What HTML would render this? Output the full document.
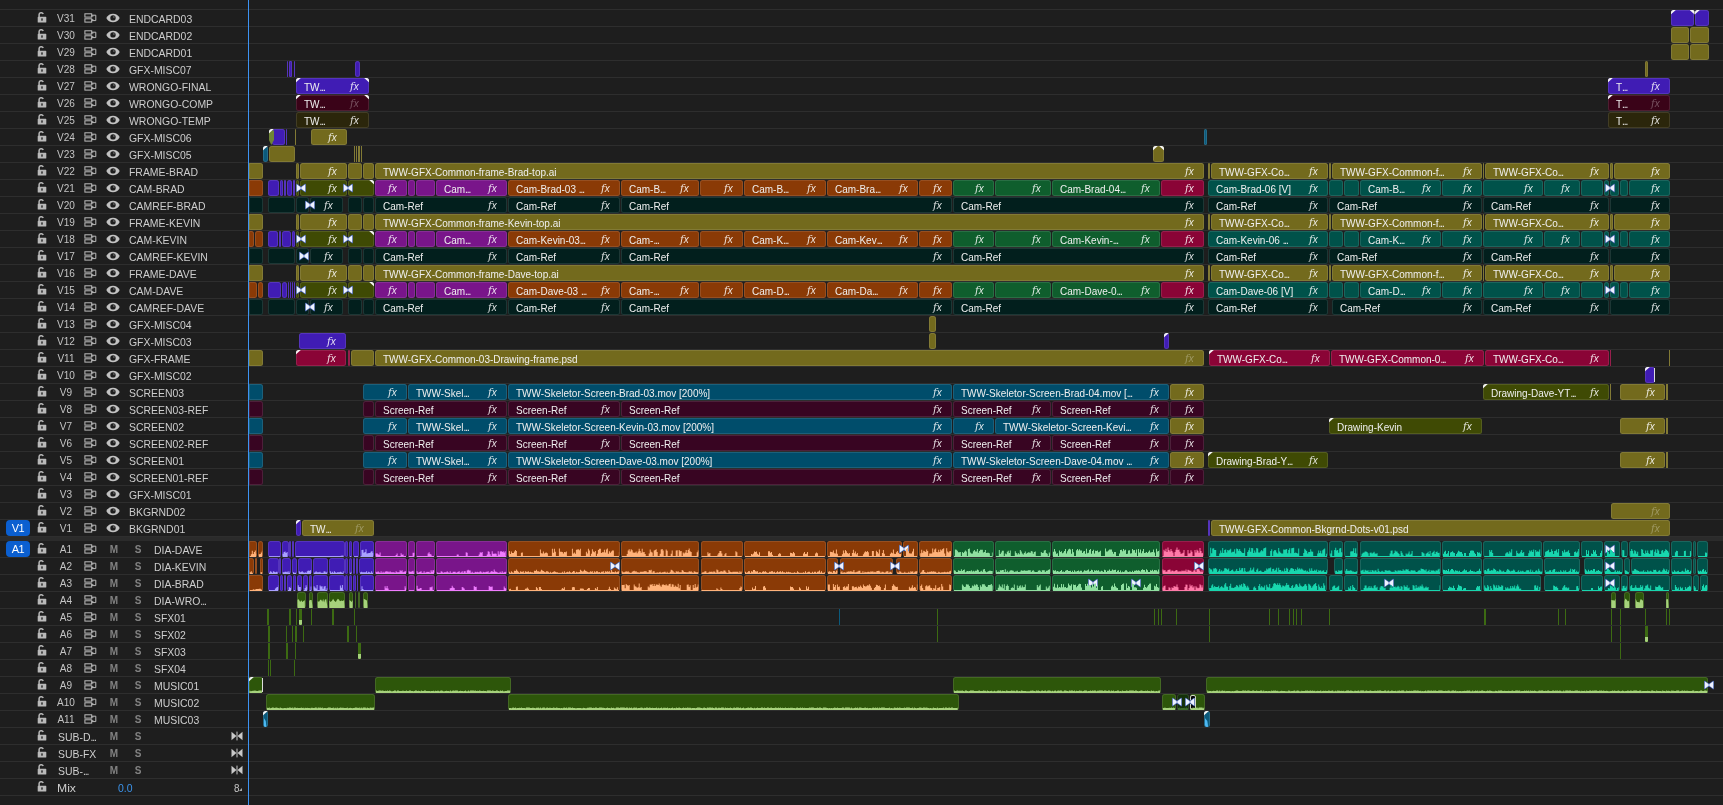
<!DOCTYPE html>
<html><head><meta charset="utf-8"><title>Timeline</title>
<style>
html,body{margin:0;padding:0;background:#1e1e1e;}
body{width:1723px;height:805px;position:relative;overflow:hidden;font-family:"Liberation Sans",sans-serif;font-size:11px;color:#c9c9c9;}
#w{position:absolute;left:0;top:0;width:1723px;height:805px;will-change:transform;overflow:hidden;}
.s{position:absolute;left:0;width:1723px;height:1px;background:#2e2e2e;}
.band{position:absolute;left:0;top:537px;width:1723px;height:4px;background:#2b2b2b;}
.ph{position:absolute;left:247.9px;top:0;width:1.4px;height:805px;background:#3d93f2;}
.c{position:absolute;height:16px;border-radius:2.5px;overflow:hidden;white-space:nowrap;box-sizing:border-box;box-shadow:inset 0 0 0 1px rgba(255,255,255,.11);}
.t{position:absolute;left:8.3px;top:0;line-height:19px;font-size:10.6px;color:#efefef;transform-origin:0 50%;transform:scaleX(.943);}
.fx{position:absolute;right:10.3px;top:0;line-height:16px;color:rgba(255,255,255,.86);}
.fx i{font-size:10.3px;font-style:italic;font-family:"DejaVu Serif",serif;}
.fx b{font-size:10px;font-style:italic;font-weight:normal;margin-left:-.2px;}
.fx.dim{opacity:.35;}
.t u{text-decoration:none;letter-spacing:-1.1px;}
.kl,.kr{position:absolute;width:5px;height:4.6px;background:#f4f4f4;}
.kl{clip-path:polygon(0 0,100% 0,0 100%);border-radius:2.5px 0 0 0;}
.kr{clip-path:polygon(0 0,100% 0,100% 100%);border-radius:0 2.5px 0 0;}
.tr{position:absolute;}
.l{position:absolute;height:16px;}
.wv{position:absolute;left:0;top:0;pointer-events:none;}
.ic{position:absolute;}
.lb{position:absolute;left:46px;width:40px;text-align:center;line-height:17px;font-size:10.6px;color:#c4c4c4;transform:scaleX(.95);}
.nm{position:absolute;line-height:19px;font-size:10.6px;white-space:nowrap;color:#cdcdcd;transform-origin:0 50%;transform:scaleX(.985);}
.nm u{text-decoration:none;letter-spacing:-1.1px;}
.ms{position:absolute;width:9px;text-align:center;line-height:18px;color:#828282;font-size:10px;font-weight:bold;}
.tg{position:absolute;left:6px;width:24px;height:16px;border-radius:4px;background:#0b5fd0;color:#fff;text-align:center;line-height:17px;font-size:11px;letter-spacing:-.4px;}
</style></head><body><div id="w">
<div class="s" style="top:9px"></div><div class="s" style="top:26px"></div><div class="s" style="top:43px"></div><div class="s" style="top:60px"></div><div class="s" style="top:77px"></div><div class="s" style="top:94px"></div><div class="s" style="top:111px"></div><div class="s" style="top:128px"></div><div class="s" style="top:145px"></div><div class="s" style="top:162px"></div><div class="s" style="top:179px"></div><div class="s" style="top:196px"></div><div class="s" style="top:213px"></div><div class="s" style="top:230px"></div><div class="s" style="top:247px"></div><div class="s" style="top:264px"></div><div class="s" style="top:281px"></div><div class="s" style="top:298px"></div><div class="s" style="top:315px"></div><div class="s" style="top:332px"></div><div class="s" style="top:349px"></div><div class="s" style="top:366px"></div><div class="s" style="top:383px"></div><div class="s" style="top:400px"></div><div class="s" style="top:417px"></div><div class="s" style="top:434px"></div><div class="s" style="top:451px"></div><div class="s" style="top:468px"></div><div class="s" style="top:485px"></div><div class="s" style="top:502px"></div><div class="s" style="top:519px"></div><div class="s" style="top:536px"></div><div class="s" style="top:557px"></div><div class="s" style="top:574px"></div><div class="s" style="top:591px"></div><div class="s" style="top:608px"></div><div class="s" style="top:625px"></div><div class="s" style="top:642px"></div><div class="s" style="top:659px"></div><div class="s" style="top:676px"></div><div class="s" style="top:693px"></div><div class="s" style="top:710px"></div><div class="s" style="top:727px"></div><div class="s" style="top:744px"></div><div class="s" style="top:761px"></div><div class="s" style="top:778px"></div><div class="s" style="top:795px"></div>
<div class="band"></div>
<div class="c" style="left:1671.0px;top:10px;width:23.0px;background:#401cb4"></div>
<div class="kl" style="left:1670.8px;top:10px"></div>
<div class="c" style="left:1695.0px;top:10px;width:14.0px;background:#401cb4"></div>
<div class="kl" style="left:1694.8px;top:10px"></div>
<div class="kr" style="left:1689.6px;top:10px"></div>
<div class="c" style="left:1671.0px;top:27px;width:18.0px;background:#736a1d"></div>
<div class="c" style="left:1690.0px;top:27px;width:19.0px;background:#736a1d"></div>
<div class="c" style="left:1671.0px;top:44px;width:18.0px;background:#736a1d"></div>
<div class="c" style="left:1690.0px;top:44px;width:19.0px;background:#736a1d"></div>
<div class="c" style="left:287.0px;top:61px;width:0.8px;background:#401cb4;border-radius:1px"></div>
<div class="c" style="left:289.3px;top:61px;width:3.2px;background:#401cb4;border-radius:1px"></div>
<div class="c" style="left:294.1px;top:61px;width:0.8px;background:#401cb4;border-radius:1px"></div>
<div class="c" style="left:355.0px;top:61px;width:5.0px;background:#401cb4"></div>
<div class="c" style="left:1645.1px;top:61px;width:2.8px;background:#736a1d"></div>
<div class="c" style="left:296.0px;top:78px;width:73.0px;background:#401cb4"><span class="t">TW<u>...</u></span><span class="fx"><i>f</i><b>x</b></span></div>
<div class="kl" style="left:295.8px;top:78px"></div>
<div class="kr" style="left:364.2px;top:78px"></div>
<div class="c" style="left:1608.0px;top:78px;width:62.0px;background:#401cb4"><span class="t">T<u>...</u></span><span class="fx"><i>f</i><b>x</b></span></div>
<div class="kl" style="left:1607.8px;top:78px"></div>
<div class="c" style="left:296.0px;top:95px;width:73.0px;background:#3a0318"><span class="t">TW<u>...</u></span><span class="fx dim"><i>f</i><b>x</b></span></div>
<div class="kl" style="left:295.8px;top:95px"></div>
<div class="kr" style="left:364.2px;top:95px"></div>
<div class="c" style="left:1608.0px;top:95px;width:62.0px;background:#3a0318"><span class="t">T<u>...</u></span><span class="fx dim"><i>f</i><b>x</b></span></div>
<div class="kl" style="left:1607.8px;top:95px"></div>
<div class="c" style="left:296.0px;top:112px;width:73.0px;background:#2b260b"><span class="t">TW<u>...</u></span><span class="fx"><i>f</i><b>x</b></span></div>
<div class="c" style="left:1608.0px;top:112px;width:62.0px;background:#2b260b"><span class="t">T<u>...</u></span><span class="fx"><i>f</i><b>x</b></span></div>
<div class="c" style="left:272.0px;top:129px;width:13.0px;background:#401cb4"></div>
<div class="c" style="left:269.0px;top:129px;width:5.0px;background:#6f8535;border-radius:0;box-shadow:none;clip-path:polygon(0 10%,100% 10%,100% 68%,45% 100%,0 68%)"></div>
<div class="kl" style="left:268.8px;top:129px"></div>
<div class="c" style="left:285.7px;top:129px;width:1.3px;background:#401cb4"></div>
<div class="c" style="left:295.0px;top:129px;width:1.0px;background:#736a1d"></div>
<div class="c" style="left:311.0px;top:129px;width:36.0px;background:#736a1d"><span class="fx"><i>f</i><b>x</b></span></div>
<div class="c" style="left:1204.1px;top:129px;width:2.8px;background:#0b5a7c"></div>
<div class="c" style="left:263.0px;top:146px;width:5.0px;background:#0b5a7c"></div>
<div class="kl" style="left:262.8px;top:146px"></div>
<div class="c" style="left:269.0px;top:146px;width:26.0px;background:#736a1d"></div>
<div class="c" style="left:354.1px;top:146px;width:0.8px;background:#736a1d;border-radius:0"></div>
<div class="c" style="left:355.8px;top:146px;width:0.9px;background:#736a1d;border-radius:0"></div>
<div class="c" style="left:358.0px;top:146px;width:1.7px;background:#736a1d;border-radius:0"></div>
<div class="c" style="left:360.8px;top:146px;width:1.2px;background:#736a1d;border-radius:0"></div>
<div class="c" style="left:1153.0px;top:146px;width:11.0px;background:#736a1d"></div>
<div class="kl" style="left:1152.8px;top:146px"></div>
<div class="kr" style="left:1159.2px;top:146px"></div>
<div class="c" style="left:249.0px;top:163px;width:14.0px;background:#736a1d;border-radius:0 2.5px 2.5px 0"></div>
<div class="c" style="left:296.2px;top:163px;width:2.7px;background:#736a1d"></div>
<div class="c" style="left:300.0px;top:163px;width:47.0px;background:#736a1d"><span class="fx"><i>f</i><b>x</b></span></div>
<div class="c" style="left:348.0px;top:163px;width:14.0px;background:#736a1d"></div>
<div class="c" style="left:363.0px;top:163px;width:11.0px;background:#736a1d"></div>
<div class="c" style="left:375.0px;top:163px;width:829.0px;background:#736a1d"><span class="t">TWW-GFX-Common-frame-Brad-top.ai</span><span class="fx"><i>f</i><b>x</b></span></div>
<div class="c" style="left:1207.9px;top:163px;width:1.7px;background:#736a1d"></div>
<div class="c" style="left:1211.0px;top:163px;width:117.0px;background:#736a1d"><span class="t">TWW-GFX-Co<u>...</u></span><span class="fx"><i>f</i><b>x</b></span></div>
<div class="c" style="left:1329.0px;top:163px;width:1.9px;background:#736a1d;border-radius:1px"></div>
<div class="c" style="left:1332.0px;top:163px;width:150.0px;background:#736a1d"><span class="t">TWW-GFX-Common-f<u>...</u></span><span class="fx"><i>f</i><b>x</b></span></div>
<div class="c" style="left:1482.9px;top:163px;width:1.3px;background:#736a1d"></div>
<div class="c" style="left:1485.0px;top:163px;width:124.0px;background:#736a1d"><span class="t">TWW-GFX-Co<u>...</u></span><span class="fx"><i>f</i><b>x</b></span></div>
<div class="c" style="left:1610.2px;top:163px;width:2.5px;background:#736a1d;border-radius:1.2px"></div>
<div class="c" style="left:1614.0px;top:163px;width:56.0px;background:#736a1d"><span class="fx"><i>f</i><b>x</b></span></div>
<div class="c" style="left:249.0px;top:180px;width:14.0px;background:#8a3a06;border-radius:0 2.5px 2.5px 0"></div>
<div class="c" style="left:268.0px;top:180px;width:11.0px;background:#401cb4"></div>
<div class="c" style="left:280.1px;top:180px;width:2.7px;background:#401cb4"></div>
<div class="c" style="left:284.0px;top:180px;width:1.6px;background:#401cb4"></div>
<div class="c" style="left:287.0px;top:180px;width:5.0px;background:#401cb4"></div>
<div class="c" style="left:293.2px;top:180px;width:2.0px;background:#401cb4"></div>
<div class="c" style="left:296.0px;top:180px;width:2.8px;background:#3f4a04"></div>
<div class="c" style="left:300.0px;top:180px;width:47.0px;background:#3f4a04"><span class="fx"><i>f</i><b>x</b></span></div>
<div class="c" style="left:348.0px;top:180px;width:26.0px;background:#3f4a04"></div>
<div class="kr" style="left:369.2px;top:180px"></div>
<svg class="tr" style="left:295.6px;top:183px" width="10" height="10" viewBox="0 0 10 10"><path d="M0.7 1.3 L5.8 5 L0.7 8.7 Z M9.3 1.3 L4.2 5 L9.3 8.7 Z" fill="#eef2ff" stroke="#3a58a4" stroke-width="1.3" stroke-linejoin="round" paint-order="stroke fill" style="paint-order:stroke fill"/></svg>
<svg class="tr" style="left:343.0px;top:183px" width="10" height="10" viewBox="0 0 10 10"><path d="M0.7 1.3 L5.8 5 L0.7 8.7 Z M9.3 1.3 L4.2 5 L9.3 8.7 Z" fill="#eef2ff" stroke="#3a58a4" stroke-width="1.3" stroke-linejoin="round" paint-order="stroke fill" style="paint-order:stroke fill"/></svg>
<div class="c" style="left:375.0px;top:180px;width:32.0px;background:#79158a"><span class="fx"><i>f</i><b>x</b></span></div>
<div class="c" style="left:408.0px;top:180px;width:7.0px;background:#79158a"></div>
<div class="c" style="left:416.0px;top:180px;width:19.0px;background:#79158a"></div>
<div class="c" style="left:436.0px;top:180px;width:71.0px;background:#79158a"><span class="t">Cam<u>...</u></span><span class="fx"><i>f</i><b>x</b></span></div>
<div class="c" style="left:508.0px;top:180px;width:112.0px;background:#8a3a06"><span class="t">Cam-Brad-03 <u>...</u></span><span class="fx"><i>f</i><b>x</b></span></div>
<div class="c" style="left:621.0px;top:180px;width:78.0px;background:#8a3a06"><span class="t">Cam-B<u>...</u></span><span class="fx"><i>f</i><b>x</b></span></div>
<div class="c" style="left:700.0px;top:180px;width:43.0px;background:#8a3a06"><span class="fx"><i>f</i><b>x</b></span></div>
<div class="c" style="left:744.0px;top:180px;width:82.0px;background:#8a3a06"><span class="t">Cam-B<u>...</u></span><span class="fx"><i>f</i><b>x</b></span></div>
<div class="c" style="left:827.0px;top:180px;width:91.0px;background:#8a3a06"><span class="t">Cam-Bra<u>...</u></span><span class="fx"><i>f</i><b>x</b></span></div>
<div class="c" style="left:919.0px;top:180px;width:33.0px;background:#8a3a06"><span class="fx"><i>f</i><b>x</b></span></div>
<div class="c" style="left:953.0px;top:180px;width:41.0px;background:#0f5e2d"><span class="fx"><i>f</i><b>x</b></span></div>
<div class="c" style="left:995.0px;top:180px;width:56.0px;background:#0f5e2d"><span class="fx"><i>f</i><b>x</b></span></div>
<div class="c" style="left:1052.0px;top:180px;width:108.0px;background:#0f5e2d"><span class="t">Cam-Brad-04<u>...</u></span><span class="fx"><i>f</i><b>x</b></span></div>
<div class="c" style="left:1161.0px;top:180px;width:43.0px;background:#8a0436"><span class="fx"><i>f</i><b>x</b></span></div>
<div class="c" style="left:1208.0px;top:180px;width:120.0px;background:#00524a"><span class="t">Cam-Brad-06 [V]</span><span class="fx"><i>f</i><b>x</b></span></div>
<div class="c" style="left:1329.0px;top:180px;width:14.0px;background:#00524a"></div>
<div class="c" style="left:1344.0px;top:180px;width:15.0px;background:#00524a"></div>
<div class="c" style="left:1360.0px;top:180px;width:81.0px;background:#00524a"><span class="t">Cam-B<u>...</u></span><span class="fx"><i>f</i><b>x</b></span></div>
<div class="c" style="left:1442.0px;top:180px;width:40.0px;background:#00524a"><span class="fx"><i>f</i><b>x</b></span></div>
<div class="c" style="left:1483.0px;top:180px;width:60.0px;background:#00524a"><span class="fx"><i>f</i><b>x</b></span></div>
<div class="c" style="left:1544.0px;top:180px;width:36.0px;background:#00524a"><span class="fx"><i>f</i><b>x</b></span></div>
<div class="c" style="left:1581.0px;top:180px;width:22.0px;background:#00524a"></div>
<div class="c" style="left:1604.0px;top:180px;width:5.0px;background:#00524a"></div>
<div class="c" style="left:1610.0px;top:180px;width:9.0px;background:#00524a"></div>
<div class="c" style="left:1620.0px;top:180px;width:8.0px;background:#00524a"></div>
<div class="c" style="left:1629.0px;top:180px;width:41.0px;background:#00524a"><span class="fx"><i>f</i><b>x</b></span></div>
<svg class="tr" style="left:1605.0px;top:183px" width="10" height="10" viewBox="0 0 10 10"><path d="M0.7 1.3 L5.8 5 L0.7 8.7 Z M9.3 1.3 L4.2 5 L9.3 8.7 Z" fill="#eef2ff" stroke="#3a58a4" stroke-width="1.3" stroke-linejoin="round" paint-order="stroke fill" style="paint-order:stroke fill"/></svg>
<div class="c" style="left:249.0px;top:197px;width:14.0px;background:#021f1d;border-radius:0 2.5px 2.5px 0"></div>
<div class="c" style="left:268.0px;top:197px;width:27.0px;background:#021f1d"></div>
<div class="c" style="left:296.0px;top:197px;width:13.0px;background:#021f1d"></div>
<div class="c" style="left:310.0px;top:197px;width:33.0px;background:#021f1d"><span class="fx"><i>f</i><b>x</b></span></div>
<svg class="tr" style="left:305.0px;top:200px" width="10" height="10" viewBox="0 0 10 10"><path d="M0.7 1.3 L5.8 5 L0.7 8.7 Z M9.3 1.3 L4.2 5 L9.3 8.7 Z" fill="#eef2ff" stroke="#3a58a4" stroke-width="1.3" stroke-linejoin="round" paint-order="stroke fill" style="paint-order:stroke fill"/></svg>
<div class="c" style="left:348.0px;top:197px;width:14.0px;background:#021f1d"></div>
<div class="c" style="left:363.0px;top:197px;width:11.0px;background:#021f1d"></div>
<div class="c" style="left:375.0px;top:197px;width:132.0px;background:#021f1d"><span class="t">Cam-Ref</span><span class="fx"><i>f</i><b>x</b></span></div>
<div class="c" style="left:508.0px;top:197px;width:112.0px;background:#021f1d"><span class="t">Cam-Ref</span><span class="fx"><i>f</i><b>x</b></span></div>
<div class="c" style="left:621.0px;top:197px;width:331.0px;background:#021f1d"><span class="t">Cam-Ref</span><span class="fx"><i>f</i><b>x</b></span></div>
<div class="c" style="left:953.0px;top:197px;width:251.0px;background:#021f1d"><span class="t">Cam-Ref</span><span class="fx"><i>f</i><b>x</b></span></div>
<div class="c" style="left:1208.0px;top:197px;width:120.0px;background:#021f1d"><span class="t">Cam-Ref</span><span class="fx"><i>f</i><b>x</b></span></div>
<div class="c" style="left:1329.0px;top:197px;width:153.0px;background:#021f1d"><span class="t">Cam-Ref</span><span class="fx"><i>f</i><b>x</b></span></div>
<div class="c" style="left:1483.0px;top:197px;width:126.0px;background:#021f1d"><span class="t">Cam-Ref</span><span class="fx"><i>f</i><b>x</b></span></div>
<div class="c" style="left:1610.0px;top:197px;width:60.0px;background:#021f1d"><span class="fx"><i>f</i><b>x</b></span></div>
<div class="c" style="left:249.0px;top:214px;width:14.0px;background:#736a1d;border-radius:0 2.5px 2.5px 0"></div>
<div class="c" style="left:296.2px;top:214px;width:2.7px;background:#736a1d"></div>
<div class="c" style="left:300.0px;top:214px;width:47.0px;background:#736a1d"><span class="fx"><i>f</i><b>x</b></span></div>
<div class="c" style="left:348.0px;top:214px;width:14.0px;background:#736a1d"></div>
<div class="c" style="left:363.0px;top:214px;width:11.0px;background:#736a1d"></div>
<div class="c" style="left:375.0px;top:214px;width:829.0px;background:#736a1d"><span class="t">TWW-GFX-Common-frame-Kevin-top.ai</span><span class="fx"><i>f</i><b>x</b></span></div>
<div class="c" style="left:1207.9px;top:214px;width:1.7px;background:#736a1d"></div>
<div class="c" style="left:1211.0px;top:214px;width:117.0px;background:#736a1d"><span class="t">TWW-GFX-Co<u>...</u></span><span class="fx"><i>f</i><b>x</b></span></div>
<div class="c" style="left:1329.0px;top:214px;width:1.9px;background:#736a1d;border-radius:1px"></div>
<div class="c" style="left:1332.0px;top:214px;width:150.0px;background:#736a1d"><span class="t">TWW-GFX-Common-f<u>...</u></span><span class="fx"><i>f</i><b>x</b></span></div>
<div class="c" style="left:1482.9px;top:214px;width:1.3px;background:#736a1d"></div>
<div class="c" style="left:1485.0px;top:214px;width:124.0px;background:#736a1d"><span class="t">TWW-GFX-Co<u>...</u></span><span class="fx"><i>f</i><b>x</b></span></div>
<div class="c" style="left:1610.2px;top:214px;width:2.5px;background:#736a1d;border-radius:1.2px"></div>
<div class="c" style="left:1614.0px;top:214px;width:56.0px;background:#736a1d"><span class="fx"><i>f</i><b>x</b></span></div>
<div class="c" style="left:249.0px;top:231px;width:5.0px;background:#8a3a06;border-radius:0 2.5px 2.5px 0"></div>
<div class="c" style="left:255.0px;top:231px;width:8.0px;background:#8a3a06"></div>
<div class="c" style="left:268.0px;top:231px;width:10.0px;background:#401cb4"></div>
<div class="c" style="left:279.1px;top:231px;width:1.6px;background:#401cb4"></div>
<div class="c" style="left:282.0px;top:231px;width:9.0px;background:#401cb4"></div>
<div class="c" style="left:292.3px;top:231px;width:2.7px;background:#401cb4"></div>
<div class="c" style="left:296.0px;top:231px;width:2.8px;background:#3f4a04"></div>
<div class="c" style="left:300.0px;top:231px;width:47.0px;background:#3f4a04"><span class="fx"><i>f</i><b>x</b></span></div>
<div class="c" style="left:348.0px;top:231px;width:26.0px;background:#3f4a04"></div>
<div class="kr" style="left:369.2px;top:231px"></div>
<svg class="tr" style="left:295.6px;top:234px" width="10" height="10" viewBox="0 0 10 10"><path d="M0.7 1.3 L5.8 5 L0.7 8.7 Z M9.3 1.3 L4.2 5 L9.3 8.7 Z" fill="#eef2ff" stroke="#3a58a4" stroke-width="1.3" stroke-linejoin="round" paint-order="stroke fill" style="paint-order:stroke fill"/></svg>
<svg class="tr" style="left:343.0px;top:234px" width="10" height="10" viewBox="0 0 10 10"><path d="M0.7 1.3 L5.8 5 L0.7 8.7 Z M9.3 1.3 L4.2 5 L9.3 8.7 Z" fill="#eef2ff" stroke="#3a58a4" stroke-width="1.3" stroke-linejoin="round" paint-order="stroke fill" style="paint-order:stroke fill"/></svg>
<div class="c" style="left:375.0px;top:231px;width:32.0px;background:#79158a"><span class="fx"><i>f</i><b>x</b></span></div>
<div class="c" style="left:408.0px;top:231px;width:7.0px;background:#79158a"></div>
<div class="c" style="left:416.0px;top:231px;width:19.0px;background:#79158a"></div>
<div class="c" style="left:436.0px;top:231px;width:71.0px;background:#79158a"><span class="t">Cam<u>...</u></span><span class="fx"><i>f</i><b>x</b></span></div>
<div class="c" style="left:508.0px;top:231px;width:112.0px;background:#8a3a06"><span class="t">Cam-Kevin-03<u>...</u></span><span class="fx"><i>f</i><b>x</b></span></div>
<div class="c" style="left:621.0px;top:231px;width:78.0px;background:#8a3a06"><span class="t">Cam-<u>...</u></span><span class="fx"><i>f</i><b>x</b></span></div>
<div class="c" style="left:700.0px;top:231px;width:43.0px;background:#8a3a06"><span class="fx"><i>f</i><b>x</b></span></div>
<div class="c" style="left:744.0px;top:231px;width:82.0px;background:#8a3a06"><span class="t">Cam-K<u>...</u></span><span class="fx"><i>f</i><b>x</b></span></div>
<div class="c" style="left:827.0px;top:231px;width:91.0px;background:#8a3a06"><span class="t">Cam-Kev<u>...</u></span><span class="fx"><i>f</i><b>x</b></span></div>
<div class="c" style="left:919.0px;top:231px;width:33.0px;background:#8a3a06"><span class="fx"><i>f</i><b>x</b></span></div>
<div class="c" style="left:953.0px;top:231px;width:41.0px;background:#0f5e2d"><span class="fx"><i>f</i><b>x</b></span></div>
<div class="c" style="left:995.0px;top:231px;width:56.0px;background:#0f5e2d"><span class="fx"><i>f</i><b>x</b></span></div>
<div class="c" style="left:1052.0px;top:231px;width:108.0px;background:#0f5e2d"><span class="t">Cam-Kevin-<u>...</u></span><span class="fx"><i>f</i><b>x</b></span></div>
<div class="c" style="left:1161.0px;top:231px;width:43.0px;background:#8a0436"><span class="fx"><i>f</i><b>x</b></span></div>
<div class="c" style="left:1208.0px;top:231px;width:120.0px;background:#00524a"><span class="t">Cam-Kevin-06 <u>...</u></span><span class="fx"><i>f</i><b>x</b></span></div>
<div class="c" style="left:1329.0px;top:231px;width:14.0px;background:#00524a"></div>
<div class="c" style="left:1344.0px;top:231px;width:15.0px;background:#00524a"></div>
<div class="c" style="left:1360.0px;top:231px;width:81.0px;background:#00524a"><span class="t">Cam-K<u>...</u></span><span class="fx"><i>f</i><b>x</b></span></div>
<div class="c" style="left:1442.0px;top:231px;width:40.0px;background:#00524a"><span class="fx"><i>f</i><b>x</b></span></div>
<div class="c" style="left:1483.0px;top:231px;width:60.0px;background:#00524a"><span class="fx"><i>f</i><b>x</b></span></div>
<div class="c" style="left:1544.0px;top:231px;width:36.0px;background:#00524a"><span class="fx"><i>f</i><b>x</b></span></div>
<div class="c" style="left:1581.0px;top:231px;width:22.0px;background:#00524a"></div>
<div class="c" style="left:1604.0px;top:231px;width:5.0px;background:#00524a"></div>
<div class="c" style="left:1610.0px;top:231px;width:9.0px;background:#00524a"></div>
<div class="c" style="left:1620.0px;top:231px;width:8.0px;background:#00524a"></div>
<div class="c" style="left:1629.0px;top:231px;width:41.0px;background:#00524a"><span class="fx"><i>f</i><b>x</b></span></div>
<svg class="tr" style="left:1605.0px;top:234px" width="10" height="10" viewBox="0 0 10 10"><path d="M0.7 1.3 L5.8 5 L0.7 8.7 Z M9.3 1.3 L4.2 5 L9.3 8.7 Z" fill="#eef2ff" stroke="#3a58a4" stroke-width="1.3" stroke-linejoin="round" paint-order="stroke fill" style="paint-order:stroke fill"/></svg>
<div class="c" style="left:249.0px;top:248px;width:14.0px;background:#021f1d;border-radius:0 2.5px 2.5px 0"></div>
<div class="c" style="left:268.0px;top:248px;width:27.0px;background:#021f1d"></div>
<div class="c" style="left:296.0px;top:248px;width:13.0px;background:#021f1d"></div>
<div class="c" style="left:310.0px;top:248px;width:33.0px;background:#021f1d"><span class="fx"><i>f</i><b>x</b></span></div>
<svg class="tr" style="left:299.0px;top:251px" width="10" height="10" viewBox="0 0 10 10"><path d="M0.7 1.3 L5.8 5 L0.7 8.7 Z M9.3 1.3 L4.2 5 L9.3 8.7 Z" fill="#eef2ff" stroke="#3a58a4" stroke-width="1.3" stroke-linejoin="round" paint-order="stroke fill" style="paint-order:stroke fill"/></svg>
<div class="c" style="left:348.0px;top:248px;width:14.0px;background:#021f1d"></div>
<div class="c" style="left:363.0px;top:248px;width:11.0px;background:#021f1d"></div>
<div class="c" style="left:375.0px;top:248px;width:132.0px;background:#021f1d"><span class="t">Cam-Ref</span><span class="fx"><i>f</i><b>x</b></span></div>
<div class="c" style="left:508.0px;top:248px;width:112.0px;background:#021f1d"><span class="t">Cam-Ref</span><span class="fx"><i>f</i><b>x</b></span></div>
<div class="c" style="left:621.0px;top:248px;width:331.0px;background:#021f1d"><span class="t">Cam-Ref</span><span class="fx"><i>f</i><b>x</b></span></div>
<div class="c" style="left:953.0px;top:248px;width:251.0px;background:#021f1d"><span class="t">Cam-Ref</span><span class="fx"><i>f</i><b>x</b></span></div>
<div class="c" style="left:1208.0px;top:248px;width:120.0px;background:#021f1d"><span class="t">Cam-Ref</span><span class="fx"><i>f</i><b>x</b></span></div>
<div class="c" style="left:1329.0px;top:248px;width:153.0px;background:#021f1d"><span class="t">Cam-Ref</span><span class="fx"><i>f</i><b>x</b></span></div>
<div class="c" style="left:1483.0px;top:248px;width:126.0px;background:#021f1d"><span class="t">Cam-Ref</span><span class="fx"><i>f</i><b>x</b></span></div>
<div class="c" style="left:1610.0px;top:248px;width:60.0px;background:#021f1d"><span class="fx"><i>f</i><b>x</b></span></div>
<div class="c" style="left:249.0px;top:265px;width:14.0px;background:#736a1d;border-radius:0 2.5px 2.5px 0"></div>
<div class="c" style="left:296.2px;top:265px;width:2.7px;background:#736a1d"></div>
<div class="c" style="left:300.0px;top:265px;width:47.0px;background:#736a1d"><span class="fx"><i>f</i><b>x</b></span></div>
<div class="c" style="left:348.0px;top:265px;width:14.0px;background:#736a1d"></div>
<div class="c" style="left:363.0px;top:265px;width:11.0px;background:#736a1d"></div>
<div class="c" style="left:375.0px;top:265px;width:829.0px;background:#736a1d"><span class="t">TWW-GFX-Common-frame-Dave-top.ai</span><span class="fx"><i>f</i><b>x</b></span></div>
<div class="c" style="left:1207.9px;top:265px;width:1.7px;background:#736a1d"></div>
<div class="c" style="left:1211.0px;top:265px;width:117.0px;background:#736a1d"><span class="t">TWW-GFX-Co<u>...</u></span><span class="fx"><i>f</i><b>x</b></span></div>
<div class="c" style="left:1329.0px;top:265px;width:1.9px;background:#736a1d;border-radius:1px"></div>
<div class="c" style="left:1332.0px;top:265px;width:150.0px;background:#736a1d"><span class="t">TWW-GFX-Common-f<u>...</u></span><span class="fx"><i>f</i><b>x</b></span></div>
<div class="c" style="left:1482.9px;top:265px;width:1.3px;background:#736a1d"></div>
<div class="c" style="left:1485.0px;top:265px;width:124.0px;background:#736a1d"><span class="t">TWW-GFX-Co<u>...</u></span><span class="fx"><i>f</i><b>x</b></span></div>
<div class="c" style="left:1610.2px;top:265px;width:2.5px;background:#736a1d;border-radius:1.2px"></div>
<div class="c" style="left:1614.0px;top:265px;width:56.0px;background:#736a1d"><span class="fx"><i>f</i><b>x</b></span></div>
<div class="c" style="left:249.0px;top:282px;width:8.0px;background:#8a3a06;border-radius:0 2.5px 2.5px 0"></div>
<div class="c" style="left:258.0px;top:282px;width:5.0px;background:#8a3a06"></div>
<div class="c" style="left:268.0px;top:282px;width:13.0px;background:#401cb4"></div>
<div class="c" style="left:282.0px;top:282px;width:5.0px;background:#401cb4"></div>
<div class="c" style="left:287.7px;top:282px;width:1.2px;background:#401cb4"></div>
<div class="c" style="left:289.6px;top:282px;width:1.6px;background:#401cb4"></div>
<div class="c" style="left:292.2px;top:282px;width:1.3px;background:#401cb4"></div>
<div class="c" style="left:294.0px;top:282px;width:1.2px;background:#401cb4"></div>
<div class="c" style="left:296.0px;top:282px;width:2.8px;background:#3f4a04"></div>
<div class="c" style="left:300.0px;top:282px;width:47.0px;background:#3f4a04"><span class="fx"><i>f</i><b>x</b></span></div>
<div class="c" style="left:348.0px;top:282px;width:26.0px;background:#3f4a04"></div>
<div class="kr" style="left:369.2px;top:282px"></div>
<svg class="tr" style="left:295.6px;top:285px" width="10" height="10" viewBox="0 0 10 10"><path d="M0.7 1.3 L5.8 5 L0.7 8.7 Z M9.3 1.3 L4.2 5 L9.3 8.7 Z" fill="#eef2ff" stroke="#3a58a4" stroke-width="1.3" stroke-linejoin="round" paint-order="stroke fill" style="paint-order:stroke fill"/></svg>
<svg class="tr" style="left:343.0px;top:285px" width="10" height="10" viewBox="0 0 10 10"><path d="M0.7 1.3 L5.8 5 L0.7 8.7 Z M9.3 1.3 L4.2 5 L9.3 8.7 Z" fill="#eef2ff" stroke="#3a58a4" stroke-width="1.3" stroke-linejoin="round" paint-order="stroke fill" style="paint-order:stroke fill"/></svg>
<div class="c" style="left:375.0px;top:282px;width:32.0px;background:#79158a"><span class="fx"><i>f</i><b>x</b></span></div>
<div class="c" style="left:408.0px;top:282px;width:7.0px;background:#79158a"></div>
<div class="c" style="left:416.0px;top:282px;width:19.0px;background:#79158a"></div>
<div class="c" style="left:436.0px;top:282px;width:71.0px;background:#79158a"><span class="t">Cam<u>...</u></span><span class="fx"><i>f</i><b>x</b></span></div>
<div class="c" style="left:508.0px;top:282px;width:112.0px;background:#8a3a06"><span class="t">Cam-Dave-03 <u>...</u></span><span class="fx"><i>f</i><b>x</b></span></div>
<div class="c" style="left:621.0px;top:282px;width:78.0px;background:#8a3a06"><span class="t">Cam-<u>...</u></span><span class="fx"><i>f</i><b>x</b></span></div>
<div class="c" style="left:700.0px;top:282px;width:43.0px;background:#8a3a06"><span class="fx"><i>f</i><b>x</b></span></div>
<div class="c" style="left:744.0px;top:282px;width:82.0px;background:#8a3a06"><span class="t">Cam-D<u>...</u></span><span class="fx"><i>f</i><b>x</b></span></div>
<div class="c" style="left:827.0px;top:282px;width:91.0px;background:#8a3a06"><span class="t">Cam-Da<u>...</u></span><span class="fx"><i>f</i><b>x</b></span></div>
<div class="c" style="left:919.0px;top:282px;width:33.0px;background:#8a3a06"><span class="fx"><i>f</i><b>x</b></span></div>
<div class="c" style="left:953.0px;top:282px;width:41.0px;background:#0f5e2d"><span class="fx"><i>f</i><b>x</b></span></div>
<div class="c" style="left:995.0px;top:282px;width:56.0px;background:#0f5e2d"><span class="fx"><i>f</i><b>x</b></span></div>
<div class="c" style="left:1052.0px;top:282px;width:108.0px;background:#0f5e2d"><span class="t">Cam-Dave-0<u>...</u></span><span class="fx"><i>f</i><b>x</b></span></div>
<div class="c" style="left:1161.0px;top:282px;width:43.0px;background:#8a0436"><span class="fx"><i>f</i><b>x</b></span></div>
<div class="c" style="left:1208.0px;top:282px;width:120.0px;background:#00524a"><span class="t">Cam-Dave-06 [V]</span><span class="fx"><i>f</i><b>x</b></span></div>
<div class="c" style="left:1329.0px;top:282px;width:14.0px;background:#00524a"></div>
<div class="c" style="left:1344.0px;top:282px;width:15.0px;background:#00524a"></div>
<div class="c" style="left:1360.0px;top:282px;width:81.0px;background:#00524a"><span class="t">Cam-D<u>...</u></span><span class="fx"><i>f</i><b>x</b></span></div>
<div class="c" style="left:1442.0px;top:282px;width:40.0px;background:#00524a"><span class="fx"><i>f</i><b>x</b></span></div>
<div class="c" style="left:1483.0px;top:282px;width:60.0px;background:#00524a"><span class="fx"><i>f</i><b>x</b></span></div>
<div class="c" style="left:1544.0px;top:282px;width:36.0px;background:#00524a"><span class="fx"><i>f</i><b>x</b></span></div>
<div class="c" style="left:1581.0px;top:282px;width:22.0px;background:#00524a"></div>
<div class="c" style="left:1604.0px;top:282px;width:5.0px;background:#00524a"></div>
<div class="c" style="left:1610.0px;top:282px;width:9.0px;background:#00524a"></div>
<div class="c" style="left:1620.0px;top:282px;width:8.0px;background:#00524a"></div>
<div class="c" style="left:1629.0px;top:282px;width:41.0px;background:#00524a"><span class="fx"><i>f</i><b>x</b></span></div>
<svg class="tr" style="left:1605.0px;top:285px" width="10" height="10" viewBox="0 0 10 10"><path d="M0.7 1.3 L5.8 5 L0.7 8.7 Z M9.3 1.3 L4.2 5 L9.3 8.7 Z" fill="#eef2ff" stroke="#3a58a4" stroke-width="1.3" stroke-linejoin="round" paint-order="stroke fill" style="paint-order:stroke fill"/></svg>
<div class="c" style="left:249.0px;top:299px;width:14.0px;background:#021f1d;border-radius:0 2.5px 2.5px 0"></div>
<div class="c" style="left:268.0px;top:299px;width:27.0px;background:#021f1d"></div>
<div class="c" style="left:296.0px;top:299px;width:13.0px;background:#021f1d"></div>
<div class="c" style="left:310.0px;top:299px;width:33.0px;background:#021f1d"><span class="fx"><i>f</i><b>x</b></span></div>
<svg class="tr" style="left:305.0px;top:302px" width="10" height="10" viewBox="0 0 10 10"><path d="M0.7 1.3 L5.8 5 L0.7 8.7 Z M9.3 1.3 L4.2 5 L9.3 8.7 Z" fill="#eef2ff" stroke="#3a58a4" stroke-width="1.3" stroke-linejoin="round" paint-order="stroke fill" style="paint-order:stroke fill"/></svg>
<div class="c" style="left:348.0px;top:299px;width:14.0px;background:#021f1d"></div>
<div class="c" style="left:363.0px;top:299px;width:11.0px;background:#021f1d"></div>
<div class="c" style="left:375.0px;top:299px;width:132.0px;background:#021f1d"><span class="t">Cam-Ref</span><span class="fx"><i>f</i><b>x</b></span></div>
<div class="c" style="left:508.0px;top:299px;width:112.0px;background:#021f1d"><span class="t">Cam-Ref</span><span class="fx"><i>f</i><b>x</b></span></div>
<div class="c" style="left:621.0px;top:299px;width:331.0px;background:#021f1d"><span class="t">Cam-Ref</span><span class="fx"><i>f</i><b>x</b></span></div>
<div class="c" style="left:953.0px;top:299px;width:251.0px;background:#021f1d"><span class="t">Cam-Ref</span><span class="fx"><i>f</i><b>x</b></span></div>
<div class="c" style="left:1208.0px;top:299px;width:120.0px;background:#021f1d"><span class="t">Cam-Ref</span><span class="fx"><i>f</i><b>x</b></span></div>
<div class="c" style="left:1332.0px;top:299px;width:150.0px;background:#021f1d"><span class="t">Cam-Ref</span><span class="fx"><i>f</i><b>x</b></span></div>
<div class="c" style="left:1483.0px;top:299px;width:126.0px;background:#021f1d"><span class="t">Cam-Ref</span><span class="fx"><i>f</i><b>x</b></span></div>
<div class="c" style="left:1610.0px;top:299px;width:60.0px;background:#021f1d"><span class="fx"><i>f</i><b>x</b></span></div>
<div class="c" style="left:929.0px;top:316px;width:7.0px;background:#736a1d"></div>
<div class="c" style="left:299.0px;top:333px;width:47.0px;background:#401cb4"><span class="fx"><i>f</i><b>x</b></span></div>
<div class="c" style="left:929.0px;top:333px;width:7.0px;background:#736a1d"></div>
<div class="c" style="left:1164.0px;top:333px;width:5.0px;background:#401cb4"></div>
<div class="kl" style="left:1163.8px;top:333px"></div>
<div class="c" style="left:249.0px;top:350px;width:14.0px;background:#736a1d;border-radius:0 2.5px 2.5px 0"></div>
<div class="c" style="left:296.0px;top:350px;width:50.0px;background:#8a0436"><span class="fx"><i>f</i><b>x</b></span></div>
<div class="kl" style="left:295.8px;top:350px"></div>
<div class="c" style="left:347.5px;top:350px;width:2.1px;background:#8a0436"></div>
<div class="c" style="left:351.0px;top:350px;width:23.0px;background:#736a1d"></div>
<div class="c" style="left:375.0px;top:350px;width:829.0px;background:#736a1d"><span class="t">TWW-GFX-Common-03-Drawing-frame.psd</span><span class="fx dim"><i>f</i><b>x</b></span></div>
<div class="c" style="left:1209.0px;top:350px;width:121.0px;background:#8a0436"><span class="t">TWW-GFX-Co<u>...</u></span><span class="fx"><i>f</i><b>x</b></span></div>
<div class="kl" style="left:1208.8px;top:350px"></div>
<div class="c" style="left:1331.0px;top:350px;width:153.0px;background:#8a0436"><span class="t">TWW-GFX-Common-0<u>...</u></span><span class="fx"><i>f</i><b>x</b></span></div>
<div class="c" style="left:1485.0px;top:350px;width:124.0px;background:#8a0436"><span class="t">TWW-GFX-Co<u>...</u></span><span class="fx"><i>f</i><b>x</b></span></div>
<div class="c" style="left:1610.2px;top:350px;width:0.8px;background:#8a0436;border-radius:0"></div>
<div class="c" style="left:1669.2px;top:350px;width:0.8px;background:#736a1d;border-radius:0"></div>
<div class="c" style="left:1645.0px;top:367px;width:10.0px;background:#401cb4"></div>
<div class="kl" style="left:1644.8px;top:367px"></div>
<div style="position:absolute;left:1654.4px;top:368px;width:1px;height:14px;background:#ddd"></div>
<div class="c" style="left:249.0px;top:384px;width:14.0px;background:#004d6b;border-radius:0 2.5px 2.5px 0"></div>
<div class="c" style="left:363.0px;top:384px;width:44.0px;background:#004d6b"><span class="fx"><i>f</i><b>x</b></span></div>
<div class="c" style="left:408.0px;top:384px;width:99.0px;background:#004d6b"><span class="t">TWW-Skel<u>...</u></span><span class="fx"><i>f</i><b>x</b></span></div>
<div class="c" style="left:508.0px;top:384px;width:444.0px;background:#004d6b"><span class="t">TWW-Skeletor-Screen-Brad-03.mov [200%]</span><span class="fx"><i>f</i><b>x</b></span></div>
<div class="c" style="left:953.0px;top:384px;width:216.0px;background:#004d6b"><span class="t">TWW-Skeletor-Screen-Brad-04.mov [<u>...</u></span><span class="fx"><i>f</i><b>x</b></span></div>
<div class="c" style="left:1170.0px;top:384px;width:34.0px;background:#736a1d"><span class="fx"><i>f</i><b>x</b></span></div>
<div class="c" style="left:1483.0px;top:384px;width:126.0px;background:#3f4a04"><span class="t">Drawing-Dave-YT<u>...</u></span><span class="fx"><i>f</i><b>x</b></span></div>
<div class="kl" style="left:1482.8px;top:384px"></div>
<div class="c" style="left:1610.2px;top:384px;width:0.8px;background:#736a1d;border-radius:0"></div>
<div class="c" style="left:1620.0px;top:384px;width:45.0px;background:#736a1d"><span class="fx"><i>f</i><b>x</b></span></div>
<div class="c" style="left:1666.0px;top:384px;width:1.7px;background:#736a1d;border-radius:0"></div>
<div class="c" style="left:249.0px;top:401px;width:14.0px;background:#380522;border-radius:0 2.5px 2.5px 0"></div>
<div class="c" style="left:363.0px;top:401px;width:11.0px;background:#380522"></div>
<div class="c" style="left:375.0px;top:401px;width:132.0px;background:#380522"><span class="t">Screen-Ref</span><span class="fx"><i>f</i><b>x</b></span></div>
<div class="c" style="left:508.0px;top:401px;width:112.0px;background:#380522"><span class="t">Screen-Ref</span><span class="fx"><i>f</i><b>x</b></span></div>
<div class="c" style="left:621.0px;top:401px;width:331.0px;background:#380522"><span class="t">Screen-Ref</span><span class="fx"><i>f</i><b>x</b></span></div>
<div class="c" style="left:953.0px;top:401px;width:98.0px;background:#380522"><span class="t">Screen-Ref</span><span class="fx"><i>f</i><b>x</b></span></div>
<div class="c" style="left:1052.0px;top:401px;width:117.0px;background:#380522"><span class="t">Screen-Ref</span><span class="fx"><i>f</i><b>x</b></span></div>
<div class="c" style="left:1170.0px;top:401px;width:34.0px;background:#380522"><span class="fx"><i>f</i><b>x</b></span></div>
<div class="c" style="left:249.0px;top:418px;width:14.0px;background:#004d6b;border-radius:0 2.5px 2.5px 0"></div>
<div class="c" style="left:363.0px;top:418px;width:44.0px;background:#004d6b"><span class="fx"><i>f</i><b>x</b></span></div>
<div class="c" style="left:408.0px;top:418px;width:99.0px;background:#004d6b"><span class="t">TWW-Skel<u>...</u></span><span class="fx"><i>f</i><b>x</b></span></div>
<div class="c" style="left:508.0px;top:418px;width:444.0px;background:#004d6b"><span class="t">TWW-Skeletor-Screen-Kevin-03.mov [200%]</span><span class="fx"><i>f</i><b>x</b></span></div>
<div class="c" style="left:953.0px;top:418px;width:41.0px;background:#004d6b"><span class="fx"><i>f</i><b>x</b></span></div>
<div class="c" style="left:995.0px;top:418px;width:174.0px;background:#004d6b"><span class="t">TWW-Skeletor-Screen-Kevi<u>...</u></span><span class="fx"><i>f</i><b>x</b></span></div>
<div class="c" style="left:1170.0px;top:418px;width:34.0px;background:#736a1d"><span class="fx"><i>f</i><b>x</b></span></div>
<div class="c" style="left:1329.0px;top:418px;width:153.0px;background:#3f4a04"><span class="t">Drawing-Kevin</span><span class="fx"><i>f</i><b>x</b></span></div>
<div class="kl" style="left:1328.8px;top:418px"></div>
<div class="c" style="left:1620.0px;top:418px;width:45.0px;background:#736a1d"><span class="fx"><i>f</i><b>x</b></span></div>
<div class="c" style="left:1666.0px;top:418px;width:1.7px;background:#736a1d;border-radius:0"></div>
<div class="c" style="left:249.0px;top:435px;width:14.0px;background:#380522;border-radius:0 2.5px 2.5px 0"></div>
<div class="c" style="left:363.0px;top:435px;width:11.0px;background:#380522"></div>
<div class="c" style="left:375.0px;top:435px;width:132.0px;background:#380522"><span class="t">Screen-Ref</span><span class="fx"><i>f</i><b>x</b></span></div>
<div class="c" style="left:508.0px;top:435px;width:112.0px;background:#380522"><span class="t">Screen-Ref</span><span class="fx"><i>f</i><b>x</b></span></div>
<div class="c" style="left:621.0px;top:435px;width:331.0px;background:#380522"><span class="t">Screen-Ref</span><span class="fx"><i>f</i><b>x</b></span></div>
<div class="c" style="left:953.0px;top:435px;width:98.0px;background:#380522"><span class="t">Screen-Ref</span><span class="fx"><i>f</i><b>x</b></span></div>
<div class="c" style="left:1052.0px;top:435px;width:117.0px;background:#380522"><span class="t">Screen-Ref</span><span class="fx"><i>f</i><b>x</b></span></div>
<div class="c" style="left:1170.0px;top:435px;width:34.0px;background:#380522"><span class="fx"><i>f</i><b>x</b></span></div>
<div class="c" style="left:249.0px;top:452px;width:14.0px;background:#004d6b;border-radius:0 2.5px 2.5px 0"></div>
<div class="c" style="left:363.0px;top:452px;width:44.0px;background:#004d6b"><span class="fx"><i>f</i><b>x</b></span></div>
<div class="c" style="left:408.0px;top:452px;width:99.0px;background:#004d6b"><span class="t">TWW-Skel<u>...</u></span><span class="fx"><i>f</i><b>x</b></span></div>
<div class="c" style="left:508.0px;top:452px;width:444.0px;background:#004d6b"><span class="t">TWW-Skeletor-Screen-Dave-03.mov [200%]</span><span class="fx"><i>f</i><b>x</b></span></div>
<div class="c" style="left:953.0px;top:452px;width:216.0px;background:#004d6b"><span class="t">TWW-Skeletor-Screen-Dave-04.mov <u>...</u></span><span class="fx"><i>f</i><b>x</b></span></div>
<div class="c" style="left:1170.0px;top:452px;width:34.0px;background:#736a1d"><span class="fx"><i>f</i><b>x</b></span></div>
<div class="c" style="left:1208.0px;top:452px;width:120.0px;background:#3f4a04"><span class="t">Drawing-Brad-Y<u>...</u></span><span class="fx"><i>f</i><b>x</b></span></div>
<div class="kl" style="left:1207.8px;top:452px"></div>
<div class="c" style="left:1620.0px;top:452px;width:45.0px;background:#736a1d"><span class="fx"><i>f</i><b>x</b></span></div>
<div class="c" style="left:1666.0px;top:452px;width:1.7px;background:#736a1d;border-radius:0"></div>
<div class="c" style="left:249.0px;top:469px;width:14.0px;background:#380522;border-radius:0 2.5px 2.5px 0"></div>
<div class="c" style="left:363.0px;top:469px;width:11.0px;background:#380522"></div>
<div class="c" style="left:375.0px;top:469px;width:132.0px;background:#380522"><span class="t">Screen-Ref</span><span class="fx"><i>f</i><b>x</b></span></div>
<div class="c" style="left:508.0px;top:469px;width:112.0px;background:#380522"><span class="t">Screen-Ref</span><span class="fx"><i>f</i><b>x</b></span></div>
<div class="c" style="left:621.0px;top:469px;width:331.0px;background:#380522"><span class="t">Screen-Ref</span><span class="fx"><i>f</i><b>x</b></span></div>
<div class="c" style="left:953.0px;top:469px;width:98.0px;background:#380522"><span class="t">Screen-Ref</span><span class="fx"><i>f</i><b>x</b></span></div>
<div class="c" style="left:1052.0px;top:469px;width:117.0px;background:#380522"><span class="t">Screen-Ref</span><span class="fx"><i>f</i><b>x</b></span></div>
<div class="c" style="left:1170.0px;top:469px;width:34.0px;background:#380522"><span class="fx"><i>f</i><b>x</b></span></div>
<div class="c" style="left:1611.0px;top:503px;width:59.0px;background:#736a1d"><span class="fx dim"><i>f</i><b>x</b></span></div>
<div class="c" style="left:296.0px;top:520px;width:5.0px;background:#401cb4"></div>
<div class="kl" style="left:295.8px;top:520px"></div>
<div class="c" style="left:302.0px;top:520px;width:72.0px;background:#736a1d"><span class="t">TW<u>...</u></span><span class="fx dim"><i>f</i><b>x</b></span></div>
<div class="c" style="left:1208.2px;top:520px;width:1.6px;background:#401cb4"></div>
<div class="c" style="left:1211.0px;top:520px;width:459.0px;background:#736a1d"><span class="t">TWW-GFX-Common-Bkgrnd-Dots-v01.psd</span><span class="fx dim"><i>f</i><b>x</b></span></div>
<div class="c" style="left:249.0px;top:541px;width:8.0px;background:#8a3a06;border-radius:0 2.5px 2.5px 0"></div>
<div class="c" style="left:258.0px;top:541px;width:5.0px;background:#8a3a06"></div>
<div class="c" style="left:268.0px;top:541px;width:13.0px;background:#401cb4"></div>
<div class="c" style="left:282.0px;top:541px;width:7.0px;background:#401cb4"></div>
<div class="c" style="left:289.2px;top:541px;width:1.5px;background:#401cb4"></div>
<div class="c" style="left:292.0px;top:541px;width:2.0px;background:#401cb4"></div>
<div class="c" style="left:295.0px;top:541px;width:50.0px;background:#401cb4"></div>
<div class="c" style="left:345.3px;top:541px;width:2.5px;background:#401cb4"></div>
<div class="c" style="left:349.2px;top:541px;width:2.8px;background:#401cb4"></div>
<div class="c" style="left:353.0px;top:541px;width:6.0px;background:#401cb4"></div>
<div class="c" style="left:360.0px;top:541px;width:14.0px;background:#401cb4"></div>
<div class="c" style="left:375.0px;top:541px;width:32.0px;background:#79158a"></div>
<div class="c" style="left:408.0px;top:541px;width:7.0px;background:#79158a"></div>
<div class="c" style="left:416.0px;top:541px;width:19.0px;background:#79158a"></div>
<div class="c" style="left:436.0px;top:541px;width:71.0px;background:#79158a"></div>
<div class="c" style="left:508.0px;top:541px;width:112.0px;background:#8a3a06"></div>
<div class="c" style="left:621.0px;top:541px;width:78.0px;background:#8a3a06"></div>
<div class="c" style="left:701.0px;top:541px;width:42.0px;background:#8a3a06"></div>
<div class="c" style="left:744.0px;top:541px;width:82.0px;background:#8a3a06"></div>
<div class="c" style="left:827.0px;top:541px;width:75.0px;background:#8a3a06"></div>
<div class="c" style="left:903.0px;top:541px;width:15.0px;background:#8a3a06"></div>
<div class="c" style="left:919.0px;top:541px;width:33.0px;background:#8a3a06"></div>
<div class="c" style="left:953.0px;top:541px;width:41.0px;background:#0f5e2d"></div>
<div class="c" style="left:995.0px;top:541px;width:56.0px;background:#0f5e2d"></div>
<div class="c" style="left:1052.0px;top:541px;width:108.0px;background:#0f5e2d"></div>
<div class="c" style="left:1162.0px;top:541px;width:42.0px;background:#8a0436"></div>
<div class="c" style="left:1208.0px;top:541px;width:120.0px;background:#00524a"></div>
<div class="c" style="left:1329.0px;top:541px;width:14.0px;background:#00524a"></div>
<div class="c" style="left:1344.0px;top:541px;width:14.0px;background:#00524a"></div>
<div class="c" style="left:1360.0px;top:541px;width:81.0px;background:#00524a"></div>
<div class="c" style="left:1442.0px;top:541px;width:40.0px;background:#00524a"></div>
<div class="c" style="left:1483.0px;top:541px;width:59.0px;background:#00524a"></div>
<div class="c" style="left:1543.0px;top:541px;width:37.0px;background:#00524a"></div>
<div class="c" style="left:1581.0px;top:541px;width:22.0px;background:#00524a"></div>
<div class="c" style="left:1604.0px;top:541px;width:16.0px;background:#00524a"></div>
<div class="c" style="left:1621.0px;top:541px;width:7.0px;background:#00524a"></div>
<div class="c" style="left:1629.0px;top:541px;width:41.0px;background:#00524a"></div>
<div class="c" style="left:1671.0px;top:541px;width:21.0px;background:#00524a"></div>
<div class="c" style="left:1693.2px;top:541px;width:2.5px;background:#00524a"></div>
<div class="c" style="left:1697.0px;top:541px;width:11.0px;background:#00524a"></div>
<div class="c" style="left:249.0px;top:558px;width:5.0px;background:#8a3a06;border-radius:0 2.5px 2.5px 0"></div>
<div class="c" style="left:254.8px;top:558px;width:2.0px;background:#8a3a06"></div>
<div class="c" style="left:259.9px;top:558px;width:2.9px;background:#8a3a06"></div>
<div class="c" style="left:268.0px;top:558px;width:11.0px;background:#401cb4"></div>
<div class="c" style="left:279.3px;top:558px;width:1.4px;background:#401cb4"></div>
<div class="c" style="left:282.0px;top:558px;width:9.0px;background:#401cb4"></div>
<div class="c" style="left:292.0px;top:558px;width:5.0px;background:#401cb4"></div>
<div class="c" style="left:298.0px;top:558px;width:14.0px;background:#401cb4"></div>
<div class="c" style="left:313.0px;top:558px;width:15.0px;background:#401cb4"></div>
<div class="c" style="left:329.0px;top:558px;width:16.0px;background:#401cb4"></div>
<div class="c" style="left:345.3px;top:558px;width:2.5px;background:#401cb4"></div>
<div class="c" style="left:349.2px;top:558px;width:2.8px;background:#401cb4"></div>
<div class="c" style="left:353.4px;top:558px;width:1.6px;background:#401cb4"></div>
<div class="c" style="left:356.2px;top:558px;width:1.6px;background:#401cb4"></div>
<div class="c" style="left:359.0px;top:558px;width:15.0px;background:#401cb4"></div>
<div class="c" style="left:375.0px;top:558px;width:32.0px;background:#79158a"></div>
<div class="c" style="left:408.0px;top:558px;width:7.0px;background:#79158a"></div>
<div class="c" style="left:416.0px;top:558px;width:19.0px;background:#79158a"></div>
<div class="c" style="left:436.0px;top:558px;width:71.0px;background:#79158a"></div>
<div class="c" style="left:508.0px;top:558px;width:112.0px;background:#8a3a06"></div>
<div class="c" style="left:621.0px;top:558px;width:78.0px;background:#8a3a06"></div>
<div class="c" style="left:701.0px;top:558px;width:42.0px;background:#8a3a06"></div>
<div class="c" style="left:744.0px;top:558px;width:82.0px;background:#8a3a06"></div>
<div class="c" style="left:827.0px;top:558px;width:11.0px;background:#8a3a06"></div>
<div class="c" style="left:840.0px;top:558px;width:53.0px;background:#8a3a06"></div>
<div class="c" style="left:896.0px;top:558px;width:22.0px;background:#8a3a06"></div>
<div class="c" style="left:919.0px;top:558px;width:33.0px;background:#8a3a06"></div>
<div class="c" style="left:953.0px;top:558px;width:41.0px;background:#0f5e2d"></div>
<div class="c" style="left:995.0px;top:558px;width:56.0px;background:#0f5e2d"></div>
<div class="c" style="left:1052.0px;top:558px;width:108.0px;background:#0f5e2d"></div>
<div class="c" style="left:1162.0px;top:558px;width:42.0px;background:#8a0436"></div>
<div class="c" style="left:1208.0px;top:558px;width:120.0px;background:#00524a"></div>
<div class="c" style="left:1334.0px;top:558px;width:9.0px;background:#00524a"></div>
<div class="c" style="left:1344.0px;top:558px;width:14.0px;background:#00524a"></div>
<div class="c" style="left:1360.0px;top:558px;width:81.0px;background:#00524a"></div>
<div class="c" style="left:1442.0px;top:558px;width:40.0px;background:#00524a"></div>
<div class="c" style="left:1483.0px;top:558px;width:60.0px;background:#00524a"></div>
<div class="c" style="left:1544.0px;top:558px;width:36.0px;background:#00524a"></div>
<div class="c" style="left:1584.0px;top:558px;width:19.0px;background:#00524a"></div>
<div class="c" style="left:1604.0px;top:558px;width:19.0px;background:#00524a"></div>
<div class="c" style="left:1624.0px;top:558px;width:6.0px;background:#00524a"></div>
<div class="c" style="left:1631.0px;top:558px;width:39.0px;background:#00524a"></div>
<div class="c" style="left:1671.0px;top:558px;width:21.0px;background:#00524a"></div>
<div class="c" style="left:1693.2px;top:558px;width:2.5px;background:#00524a"></div>
<div class="c" style="left:1697.0px;top:558px;width:11.0px;background:#00524a"></div>
<div class="c" style="left:249.0px;top:575px;width:14.0px;background:#8a3a06;border-radius:0 2.5px 2.5px 0"></div>
<div class="c" style="left:268.0px;top:575px;width:11.0px;background:#401cb4"></div>
<div class="c" style="left:280.2px;top:575px;width:2.4px;background:#401cb4"></div>
<div class="c" style="left:284.0px;top:575px;width:2.1px;background:#401cb4"></div>
<div class="c" style="left:287.0px;top:575px;width:5.0px;background:#401cb4"></div>
<div class="c" style="left:293.0px;top:575px;width:2.8px;background:#401cb4"></div>
<div class="c" style="left:297.0px;top:575px;width:5.0px;background:#401cb4"></div>
<div class="c" style="left:303.0px;top:575px;width:5.0px;background:#401cb4"></div>
<div class="c" style="left:309.0px;top:575px;width:2.9px;background:#401cb4"></div>
<div class="c" style="left:313.0px;top:575px;width:15.0px;background:#401cb4"></div>
<div class="c" style="left:329.0px;top:575px;width:16.0px;background:#401cb4"></div>
<div class="c" style="left:345.3px;top:575px;width:2.5px;background:#401cb4"></div>
<div class="c" style="left:349.2px;top:575px;width:2.8px;background:#401cb4"></div>
<div class="c" style="left:353.4px;top:575px;width:2.3px;background:#401cb4"></div>
<div class="c" style="left:356.8px;top:575px;width:1.7px;background:#401cb4"></div>
<div class="c" style="left:360.0px;top:575px;width:14.0px;background:#401cb4"></div>
<div class="c" style="left:375.0px;top:575px;width:32.0px;background:#79158a"></div>
<div class="c" style="left:408.0px;top:575px;width:7.0px;background:#79158a"></div>
<div class="c" style="left:416.0px;top:575px;width:19.0px;background:#79158a"></div>
<div class="c" style="left:436.0px;top:575px;width:71.0px;background:#79158a"></div>
<div class="c" style="left:508.0px;top:575px;width:112.0px;background:#8a3a06"></div>
<div class="c" style="left:621.0px;top:575px;width:78.0px;background:#8a3a06"></div>
<div class="c" style="left:701.0px;top:575px;width:42.0px;background:#8a3a06"></div>
<div class="c" style="left:744.0px;top:575px;width:82.0px;background:#8a3a06"></div>
<div class="c" style="left:827.0px;top:575px;width:91.0px;background:#8a3a06"></div>
<div class="c" style="left:919.0px;top:575px;width:33.0px;background:#8a3a06"></div>
<div class="c" style="left:953.0px;top:575px;width:41.0px;background:#0f5e2d"></div>
<div class="c" style="left:995.0px;top:575px;width:56.0px;background:#0f5e2d"></div>
<div class="c" style="left:1052.0px;top:575px;width:108.0px;background:#0f5e2d"></div>
<div class="c" style="left:1162.0px;top:575px;width:42.0px;background:#8a0436"></div>
<div class="c" style="left:1208.0px;top:575px;width:119.0px;background:#00524a"></div>
<div class="c" style="left:1329.0px;top:575px;width:14.0px;background:#00524a"></div>
<div class="c" style="left:1344.0px;top:575px;width:14.0px;background:#00524a"></div>
<div class="c" style="left:1360.0px;top:575px;width:81.0px;background:#00524a"></div>
<div class="c" style="left:1442.0px;top:575px;width:40.0px;background:#00524a"></div>
<div class="c" style="left:1483.0px;top:575px;width:58.0px;background:#00524a"></div>
<div class="c" style="left:1544.0px;top:575px;width:36.0px;background:#00524a"></div>
<div class="c" style="left:1581.0px;top:575px;width:22.0px;background:#00524a"></div>
<div class="c" style="left:1604.0px;top:575px;width:16.0px;background:#00524a"></div>
<div class="c" style="left:1621.0px;top:575px;width:7.0px;background:#00524a"></div>
<div class="c" style="left:1629.0px;top:575px;width:41.0px;background:#00524a"></div>
<div class="c" style="left:1671.0px;top:575px;width:21.0px;background:#00524a"></div>
<div class="c" style="left:1693.0px;top:575px;width:6.0px;background:#00524a"></div>
<div class="c" style="left:1700.0px;top:575px;width:8.0px;background:#00524a"></div>
<svg class="tr" style="left:898.5px;top:544px" width="10" height="10" viewBox="0 0 10 10"><path d="M0.7 1.3 L5.8 5 L0.7 8.7 Z M9.3 1.3 L4.2 5 L9.3 8.7 Z" fill="#eef2ff" stroke="#3a58a4" stroke-width="1.3" stroke-linejoin="round" paint-order="stroke fill" style="paint-order:stroke fill"/></svg>
<svg class="tr" style="left:834.0px;top:561px" width="10" height="10" viewBox="0 0 10 10"><path d="M0.7 1.3 L5.8 5 L0.7 8.7 Z M9.3 1.3 L4.2 5 L9.3 8.7 Z" fill="#eef2ff" stroke="#3a58a4" stroke-width="1.3" stroke-linejoin="round" paint-order="stroke fill" style="paint-order:stroke fill"/></svg>
<svg class="tr" style="left:890.0px;top:561px" width="10" height="10" viewBox="0 0 10 10"><path d="M0.7 1.3 L5.8 5 L0.7 8.7 Z M9.3 1.3 L4.2 5 L9.3 8.7 Z" fill="#eef2ff" stroke="#3a58a4" stroke-width="1.3" stroke-linejoin="round" paint-order="stroke fill" style="paint-order:stroke fill"/></svg>
<svg class="tr" style="left:610.0px;top:561px" width="10" height="10" viewBox="0 0 10 10"><path d="M0.7 1.3 L5.8 5 L0.7 8.7 Z M9.3 1.3 L4.2 5 L9.3 8.7 Z" fill="#eef2ff" stroke="#3a58a4" stroke-width="1.3" stroke-linejoin="round" paint-order="stroke fill" style="paint-order:stroke fill"/></svg>
<svg class="tr" style="left:1087.5px;top:578px" width="10" height="10" viewBox="0 0 10 10"><path d="M0.7 1.3 L5.8 5 L0.7 8.7 Z M9.3 1.3 L4.2 5 L9.3 8.7 Z" fill="#eef2ff" stroke="#3a58a4" stroke-width="1.3" stroke-linejoin="round" paint-order="stroke fill" style="paint-order:stroke fill"/></svg>
<svg class="tr" style="left:1194.0px;top:561px" width="10" height="10" viewBox="0 0 10 10"><path d="M0.7 1.3 L5.8 5 L0.7 8.7 Z M9.3 1.3 L4.2 5 L9.3 8.7 Z" fill="#eef2ff" stroke="#3a58a4" stroke-width="1.3" stroke-linejoin="round" paint-order="stroke fill" style="paint-order:stroke fill"/></svg>
<svg class="tr" style="left:1131.0px;top:578px" width="10" height="10" viewBox="0 0 10 10"><path d="M0.7 1.3 L5.8 5 L0.7 8.7 Z M9.3 1.3 L4.2 5 L9.3 8.7 Z" fill="#eef2ff" stroke="#3a58a4" stroke-width="1.3" stroke-linejoin="round" paint-order="stroke fill" style="paint-order:stroke fill"/></svg>
<svg class="tr" style="left:1384.0px;top:578px" width="10" height="10" viewBox="0 0 10 10"><path d="M0.7 1.3 L5.8 5 L0.7 8.7 Z M9.3 1.3 L4.2 5 L9.3 8.7 Z" fill="#eef2ff" stroke="#3a58a4" stroke-width="1.3" stroke-linejoin="round" paint-order="stroke fill" style="paint-order:stroke fill"/></svg>
<svg class="tr" style="left:1605.0px;top:544px" width="10" height="10" viewBox="0 0 10 10"><path d="M0.7 1.3 L5.8 5 L0.7 8.7 Z M9.3 1.3 L4.2 5 L9.3 8.7 Z" fill="#eef2ff" stroke="#3a58a4" stroke-width="1.3" stroke-linejoin="round" paint-order="stroke fill" style="paint-order:stroke fill"/></svg>
<svg class="tr" style="left:1605.0px;top:561px" width="10" height="10" viewBox="0 0 10 10"><path d="M0.7 1.3 L5.8 5 L0.7 8.7 Z M9.3 1.3 L4.2 5 L9.3 8.7 Z" fill="#eef2ff" stroke="#3a58a4" stroke-width="1.3" stroke-linejoin="round" paint-order="stroke fill" style="paint-order:stroke fill"/></svg>
<svg class="tr" style="left:1605.0px;top:578px" width="10" height="10" viewBox="0 0 10 10"><path d="M0.7 1.3 L5.8 5 L0.7 8.7 Z M9.3 1.3 L4.2 5 L9.3 8.7 Z" fill="#eef2ff" stroke="#3a58a4" stroke-width="1.3" stroke-linejoin="round" paint-order="stroke fill" style="paint-order:stroke fill"/></svg>
<div class="c" style="left:297.0px;top:592px;width:9.0px;background:#2d560a"></div>
<div class="c" style="left:309.0px;top:592px;width:4.0px;background:#2d560a"></div>
<div class="c" style="left:317.0px;top:592px;width:11.0px;background:#2d560a"></div>
<div class="c" style="left:329.0px;top:592px;width:16.0px;background:#2d560a"></div>
<div class="c" style="left:349.0px;top:592px;width:4.0px;background:#2d560a"></div>
<div class="c" style="left:355.0px;top:592px;width:1.4px;background:#2d560a"></div>
<div class="c" style="left:358.0px;top:592px;width:2.0px;background:#2d560a"></div>
<div class="c" style="left:363.0px;top:592px;width:5.0px;background:#2d560a"></div>
<div class="c" style="left:1611.0px;top:592px;width:5.0px;background:#2d560a"></div>
<div class="c" style="left:1624.0px;top:592px;width:6.0px;background:#2d560a"></div>
<div class="c" style="left:1635.0px;top:592px;width:9.0px;background:#2d560a"></div>
<div class="c" style="left:1665.9px;top:592px;width:3.0px;background:#2d560a"></div>
<div class="l" style="left:267.3px;top:609px;width:1.7px;background:#3c6a12"></div>
<div class="l" style="left:288.9px;top:609px;width:2.1px;background:#3c6a12"></div>
<div class="l" style="left:296.1px;top:609px;width:1.1px;background:#3c6a12"></div>
<div class="l" style="left:299.0px;top:609px;width:2.8px;background:#3c6a12"></div>
<div class="l" style="left:310.9px;top:609px;width:1.1px;background:#3c6a12"></div>
<div class="l" style="left:331.8px;top:609px;width:2.1px;background:#3c6a12"></div>
<div class="l" style="left:354.0px;top:609px;width:1.0px;background:#3c6a12"></div>
<div class="l" style="left:937.0px;top:609px;width:1.0px;background:#3c6a12"></div>
<div class="l" style="left:1154.4px;top:609px;width:1.0px;background:#3c6a12"></div>
<div class="l" style="left:1158.2px;top:609px;width:1.0px;background:#3c6a12"></div>
<div class="l" style="left:1161.4px;top:609px;width:1.0px;background:#3c6a12"></div>
<div class="l" style="left:1176.4px;top:609px;width:1.0px;background:#3c6a12"></div>
<div class="l" style="left:1208.6px;top:609px;width:1.2px;background:#3c6a12"></div>
<div class="l" style="left:1269.2px;top:609px;width:1.0px;background:#3c6a12"></div>
<div class="l" style="left:1278.2px;top:609px;width:1.0px;background:#3c6a12"></div>
<div class="l" style="left:1288.5px;top:609px;width:1.0px;background:#3c6a12"></div>
<div class="l" style="left:1293.4px;top:609px;width:1.0px;background:#3c6a12"></div>
<div class="l" style="left:1296.2px;top:609px;width:1.0px;background:#3c6a12"></div>
<div class="l" style="left:1301.4px;top:609px;width:1.0px;background:#3c6a12"></div>
<div class="l" style="left:1329.4px;top:609px;width:1.0px;background:#3c6a12"></div>
<div class="l" style="left:1483.6px;top:609px;width:1.0px;background:#3c6a12"></div>
<div class="l" style="left:1485.4px;top:609px;width:1.0px;background:#3c6a12"></div>
<div class="l" style="left:1557.6px;top:609px;width:1.0px;background:#3c6a12"></div>
<div class="l" style="left:1565.3px;top:609px;width:1.0px;background:#3c6a12"></div>
<div class="l" style="left:1610.5px;top:609px;width:1.0px;background:#3c6a12"></div>
<div class="l" style="left:1620.4px;top:609px;width:1.0px;background:#3c6a12"></div>
<div class="l" style="left:1645.3px;top:609px;width:1.0px;background:#3c6a12"></div>
<div class="l" style="left:1666.4px;top:609px;width:1.0px;background:#3c6a12"></div>
<div class="l" style="left:1669.4px;top:609px;width:1.0px;background:#3c6a12"></div>
<div class="l" style="left:839.0px;top:609px;width:1.0px;background:#0b5a7c"></div>
<div class="l" style="left:268.0px;top:626px;width:2.0px;background:#3c6a12"></div>
<div class="l" style="left:285.8px;top:626px;width:1.0px;background:#3c6a12"></div>
<div class="l" style="left:292.0px;top:626px;width:1.0px;background:#3c6a12"></div>
<div class="l" style="left:294.7px;top:626px;width:2.1px;background:#3c6a12"></div>
<div class="l" style="left:303.0px;top:626px;width:1.0px;background:#3c6a12"></div>
<div class="l" style="left:347.0px;top:626px;width:1.8px;background:#3c6a12"></div>
<div class="l" style="left:356.2px;top:626px;width:0.9px;background:#3c6a12"></div>
<div class="l" style="left:937.0px;top:626px;width:1.0px;background:#3c6a12"></div>
<div class="l" style="left:1208.6px;top:626px;width:1.0px;background:#3c6a12"></div>
<div class="l" style="left:1610.5px;top:626px;width:1.0px;background:#3c6a12"></div>
<div class="l" style="left:1620.4px;top:626px;width:1.0px;background:#3c6a12"></div>
<div class="l" style="left:1645.3px;top:626px;width:3.2px;background:#3c6a12"></div>
<div class="l" style="left:268.0px;top:643px;width:1.8px;background:#3c6a12"></div>
<div class="l" style="left:286.0px;top:643px;width:1.8px;background:#3c6a12"></div>
<div class="l" style="left:294.7px;top:643px;width:1.1px;background:#3c6a12"></div>
<div class="l" style="left:358.0px;top:643px;width:2.6px;background:#3c6a12"></div>
<div class="l" style="left:1620.4px;top:643px;width:1.0px;background:#3c6a12"></div>
<div class="l" style="left:268.0px;top:660px;width:1.0px;background:#3c6a12"></div>
<div class="l" style="left:270.3px;top:660px;width:1.0px;background:#3c6a12"></div>
<div class="l" style="left:294.0px;top:660px;width:1.0px;background:#3c6a12"></div>
<div style="position:absolute;left:299px;top:620px;width:2.8px;height:5px;background:#a6d27c;border-radius:0 0 2px 2px"></div>
<div style="position:absolute;left:358px;top:654px;width:2.6px;height:5px;background:#a6d27c;border-radius:0 0 2px 2px"></div>
<div style="position:absolute;left:1645.3px;top:637px;width:3.2px;height:5px;background:#a6d27c;border-radius:0 0 2px 2px"></div>
<div class="c" style="left:249.0px;top:677px;width:14.0px;background:#2d560a;border-radius:0 2.5px 2.5px 0"></div>
<div class="c" style="left:375.0px;top:677px;width:136.0px;background:#2d560a"></div>
<div class="c" style="left:953.0px;top:677px;width:208.0px;background:#2d560a"></div>
<div class="c" style="left:1206.0px;top:677px;width:502.0px;background:#2d560a"></div>
<div class="kl" style="left:248.8px;top:677px"></div>
<div style="position:absolute;left:262px;top:678px;width:1px;height:14px;background:#ddd"></div>
<svg class="tr" style="left:1704.0px;top:680px" width="10" height="10" viewBox="0 0 10 10"><path d="M0.7 1.3 L5.8 5 L0.7 8.7 Z M9.3 1.3 L4.2 5 L9.3 8.7 Z" fill="#eef2ff" stroke="#3a58a4" stroke-width="1.3" stroke-linejoin="round" paint-order="stroke fill" style="paint-order:stroke fill"/></svg>
<div class="c" style="left:266.0px;top:694px;width:109.0px;background:#2d560a"></div>
<div class="c" style="left:508.0px;top:694px;width:451.0px;background:#2d560a"></div>
<div class="c" style="left:1162.0px;top:694px;width:14.0px;background:#2d560a"></div>
<div class="c" style="left:1190.0px;top:694px;width:15.0px;background:#2d560a"></div>
<div class="c" style="left:1177.0px;top:694px;width:12.0px;background:#14300a"></div>
<div style="position:absolute;left:1190.2px;top:694.5px;width:5.6px;height:15px;box-sizing:border-box;border:1.3px solid #cfd6c4;border-radius:2px;background:#050505"></div>
<svg class="tr" style="left:1172.0px;top:697px" width="10" height="10" viewBox="0 0 10 10"><path d="M0.7 1.3 L5.8 5 L0.7 8.7 Z M9.3 1.3 L4.2 5 L9.3 8.7 Z" fill="#eef2ff" stroke="#3a58a4" stroke-width="1.3" stroke-linejoin="round" paint-order="stroke fill" style="paint-order:stroke fill"/></svg>
<svg class="tr" style="left:1185.2px;top:697px" width="10" height="10" viewBox="0 0 10 10"><path d="M0.7 1.3 L5.8 5 L0.7 8.7 Z M9.3 1.3 L4.2 5 L9.3 8.7 Z" fill="#eef2ff" stroke="#3a58a4" stroke-width="1.3" stroke-linejoin="round" paint-order="stroke fill" style="paint-order:stroke fill"/></svg>
<div class="c" style="left:263.0px;top:711px;width:5.0px;background:#0b5a7c"></div>
<div class="kl" style="left:262.8px;top:711px"></div>
<div style="position:absolute;left:263.7px;top:715px;width:3.8px;height:12px;background:#4db8f2;border-radius:0 0 2px 2px;clip-path:polygon(0 22%,55% 50%,72% 100%,0 100%)"></div>
<div class="c" style="left:1204.0px;top:711px;width:6.0px;background:#0b5a7c"></div>
<div class="kl" style="left:1203.8px;top:711px"></div>
<div style="position:absolute;left:1204.7px;top:715px;width:4.8px;height:12px;background:#4db8f2;border-radius:0 0 2px 2px;clip-path:polygon(0 22%,55% 50%,72% 100%,0 100%)"></div>
<svg class="wv" width="1723" height="805" viewBox="0 0 1723 805"><path d="M249.8 557V556.1H250.8V554.3H251.8V550.8H252.8V554.1H253.8V551.9H254.8V550.4H255.8V553.6H256.2V557Z" fill="#ffb27a"/><path d="M258.8 557V554.2H259.8V554.1H260.8V552.6H261.8V550.8H262.2V557Z" fill="#ffb27a"/><path d="M268.9 557V556.1H269.9V556.1H270.9V556.1H271.9V556.1H272.9V556.1H273.9V556.1H274.9V556.1H275.9V556.1H276.9V556.1H277.9V556.1H278.9V556.1H279.9V556.1H280.3V557Z" fill="#a9a0ff"/><path d="M282.6 557V553.7H283.6V551.9H284.6V551.6H285.6V552.9H286.6V552.1H287.6V557Z" fill="#a9a0ff"/><path d="M295.7 557V556.1H296.7V556.1H297.7V556.1H298.7V556.1H299.7V556.1H300.7V556.1H301.7V556.1H302.7V556.1H303.7V556.1H304.7V556.1H305.7V556.1H306.7V556.1H307.7V556.1H308.7V556.1H309.7V556.1H310.7V556.1H311.7V556.1H312.7V556.1H313.7V556.1H314.7V556.1H315.7V556.1H316.7V556.1H317.7V556.1H318.7V556.1H319.7V556.1H320.7V556.1H321.7V556.1H322.7V556.1H323.7V556.1H324.7V556.1H325.7V556.1H326.7V556.1H327.7V556.1H328.7V556.1H329.7V556.1H330.7V556.1H331.7V556.1H332.7V556.1H333.7V556.1H334.7V556.1H335.7V556.1H336.7V556.1H337.7V556.1H338.7V556.1H339.7V556.1H340.7V555.8H341.7V555.5H342.7V555.7H343.6V557Z" fill="#a9a0ff"/><path d="M349.8 557V556.1H350.8V556.1H351.4V557Z" fill="#a9a0ff"/><path d="M354.0 557V556.1H355.0V556.1H356.0V556.1H357.0V556.1H358.0V556.1H358.2V557Z" fill="#a9a0ff"/><path d="M360.5 557V556.1H361.5V549.9H362.5V549.7H363.5V552.8H364.5V552.0H365.5V549.2H366.5V553.4H367.5V553.3H368.5V553.0H369.5V553.0H370.5V551.7H371.5V551.1H372.5V552.8H373.2V557Z" fill="#a9a0ff"/><path d="M375.6 557V553.5H376.6V553.3H377.6V554.2H378.6V554.8H379.6V552.5H380.6V556.1H381.6V556.1H382.6V556.1H383.6V556.1H384.6V556.1H385.6V556.1H386.6V556.1H387.6V556.1H388.6V556.1H389.6V556.1H390.6V556.1H391.6V556.1H392.6V556.1H393.6V556.1H394.6V556.1H395.6V554.9H396.6V553.4H397.6V556.1H398.6V556.1H399.6V556.1H400.6V553.3H401.6V554.8H402.6V554.4H403.6V556.1H404.6V556.1H405.6V556.1H406.0V557Z" fill="#f07cff"/><path d="M408.6 557V556.1H409.6V556.1H410.6V556.1H411.6V556.1H412.6V552.8H413.6V552.8H414.4V557Z" fill="#f07cff"/><path d="M416.6 557V556.1H417.6V556.1H418.6V556.1H419.6V556.1H420.6V556.1H421.6V556.1H422.6V556.1H423.6V556.1H424.6V556.1H425.6V556.1H426.6V556.1H427.6V553.6H428.6V552.3H429.6V554.1H430.6V554.5H431.6V556.1H432.6V556.1H433.6V556.1H434.1V557Z" fill="#f07cff"/><path d="M436.7 557V556.1H437.7V556.1H438.7V556.1H439.7V556.1H440.7V556.1H441.7V556.1H442.7V556.1H443.7V556.1H444.7V556.1H445.7V556.1H446.7V556.1H447.7V556.1H448.7V556.1H449.7V556.1H450.7V556.1H451.7V556.1H452.7V556.1H453.7V556.1H454.7V556.1H455.7V556.1H456.7V554.5H457.7V554.6H458.7V556.1H459.7V556.1H460.7V556.1H461.7V556.1H462.7V556.1H463.7V556.1H464.7V556.1H465.7V552.3H466.7V552.7H467.7V556.1H468.7V556.1H469.7V556.1H470.7V556.1H471.7V556.1H472.7V556.1H473.7V556.1H474.7V556.1H475.7V556.1H476.7V556.1H477.7V556.1H478.7V554.6H479.7V552.2H480.7V552.8H481.7V552.0H482.7V556.1H483.7V556.1H484.7V556.1H485.7V556.1H486.7V554.6H487.7V551.3H488.7V551.7H489.7V554.3H490.7V556.1H491.7V551.2H492.7V553.8H493.7V553.7H494.7V553.5H495.7V553.7H496.7V556.1H497.7V551.2H498.7V554.5H499.7V551.6H500.7V550.9H501.7V551.9H502.7V551.3H503.7V552.5H504.7V551.2H505.7V556.1H506.3V557Z" fill="#f07cff"/><path d="M508.9 557V551.1H509.9V553.9H510.9V551.6H511.9V553.0H512.9V553.1H513.9V551.4H514.9V550.0H515.9V551.0H516.9V556.1H517.9V556.1H518.9V556.1H519.9V556.1H520.9V552.7H521.9V552.5H522.9V556.1H523.9V556.1H524.9V556.1H525.9V556.1H526.9V556.1H527.9V556.1H528.9V556.1H529.9V556.1H530.9V556.1H531.9V556.1H532.9V556.1H533.9V556.1H534.9V556.1H535.9V556.1H536.9V556.1H537.9V556.1H538.9V556.1H539.9V549.4H540.9V553.3H541.9V553.4H542.9V551.6H543.9V553.6H544.9V552.8H545.9V552.4H546.9V553.3H547.9V556.1H548.9V556.1H549.9V556.1H550.9V556.1H551.9V548.7H552.9V552.8H553.9V548.8H554.9V551.8H555.9V556.1H556.9V556.1H557.9V556.1H558.9V548.5H559.9V551.8H560.9V551.7H561.9V552.1H562.9V553.5H563.9V552.0H564.9V552.2H565.9V551.5H566.9V556.1H567.9V556.1H568.9V556.1H569.9V556.1H570.9V556.1H571.9V548.7H572.9V553.4H573.9V552.6H574.9V553.8H575.9V549.7H576.9V549.5H577.9V549.3H578.9V550.3H579.9V548.8H580.9V556.1H581.9V556.1H582.9V556.1H583.9V556.1H584.9V556.1H585.9V551.7H586.9V553.6H587.9V548.8H588.9V550.5H589.9V556.1H590.9V553.7H591.9V549.3H592.9V551.5H593.9V552.2H594.9V551.0H595.9V556.1H596.9V553.8H597.9V550.1H598.9V548.8H599.9V548.7H600.9V552.9H601.9V552.3H602.9V552.3H603.9V549.8H604.9V552.5H605.9V549.6H606.9V548.5H607.9V553.8H608.9V551.2H609.9V552.7H610.9V551.6H611.9V550.4H612.9V550.4H613.9V556.1H614.9V556.1H615.9V556.1H616.9V556.1H617.9V556.1H618.9V552.1H619.1V557Z" fill="#ffb27a"/><path d="M621.7 557V556.1H622.7V556.1H623.7V556.1H624.7V556.1H625.7V556.1H626.7V553.9H627.7V550.6H628.7V549.2H629.7V551.6H630.7V549.2H631.7V550.3H632.7V552.5H633.7V552.7H634.7V552.4H635.7V551.5H636.7V553.2H637.7V551.6H638.7V548.7H639.7V551.0H640.7V552.7H641.7V548.7H642.7V552.3H643.7V552.1H644.7V554.0H645.7V556.1H646.7V556.1H647.7V556.1H648.7V553.5H649.7V549.5H650.7V551.8H651.7V552.4H652.7V556.1H653.7V550.4H654.7V550.1H655.7V549.2H656.7V551.9H657.7V556.1H658.7V556.1H659.7V553.8H660.7V549.4H661.7V549.1H662.7V550.6H663.7V556.1H664.7V556.1H665.7V549.5H666.7V550.8H667.7V556.1H668.7V556.1H669.7V556.1H670.7V553.8H671.7V550.5H672.7V556.1H673.7V556.1H674.7V556.1H675.7V550.6H676.7V550.3H677.7V556.1H678.7V549.9H679.7V551.2H680.7V551.1H681.7V556.1H682.7V552.6H683.7V553.6H684.7V552.6H685.7V550.0H686.7V552.9H687.7V549.9H688.7V548.6H689.7V551.3H690.7V551.9H691.7V556.1H692.7V556.1H693.7V556.1H694.7V556.1H695.7V556.1H696.7V552.2H697.7V550.4H698.4V557Z" fill="#ffb27a"/><path d="M701.4 557V556.1H702.4V556.1H703.4V556.1H704.4V556.1H705.4V556.1H706.4V556.1H707.4V552.3H708.4V553.8H709.4V552.9H710.4V556.1H711.4V556.1H712.4V556.1H713.4V556.1H714.4V556.1H715.4V556.1H716.4V556.1H717.4V554.6H718.4V552.9H719.4V551.0H720.4V551.0H721.4V553.4H722.4V556.1H723.4V556.1H724.4V554.3H725.4V552.9H726.4V556.1H727.4V556.1H728.4V556.1H729.4V556.1H730.4V556.1H731.4V556.1H732.4V556.1H733.4V556.1H734.4V556.1H735.4V551.2H736.4V552.2H737.4V556.1H738.4V556.1H739.4V556.1H740.4V556.1H741.4V556.1H741.8V557Z" fill="#ffb27a"/><path d="M745.0 557V556.1H746.0V556.1H747.0V556.1H748.0V556.1H749.0V556.1H750.0V556.1H751.0V553.9H752.0V554.6H753.0V553.4H754.0V551.5H755.0V552.0H756.0V551.6H757.0V553.8H758.0V554.7H759.0V552.3H760.0V556.1H761.0V556.1H762.0V556.1H763.0V556.1H764.0V556.1H765.0V556.1H766.0V556.1H767.0V556.1H768.0V551.3H769.0V551.2H770.0V552.8H771.0V552.1H772.0V554.7H773.0V556.1H774.0V556.1H775.0V556.1H776.0V556.1H777.0V556.1H778.0V554.2H779.0V553.3H780.0V553.8H781.0V556.1H782.0V556.1H783.0V556.1H784.0V556.1H785.0V556.1H786.0V556.1H787.0V556.1H788.0V556.1H789.0V556.1H790.0V552.8H791.0V553.1H792.0V553.6H793.0V551.9H794.0V553.2H795.0V556.1H796.0V556.1H797.0V556.1H798.0V556.1H799.0V556.1H800.0V556.1H801.0V556.1H802.0V556.1H803.0V553.4H804.0V552.0H805.0V554.1H806.0V553.8H807.0V552.0H808.0V556.1H809.0V556.1H810.0V556.1H811.0V556.1H812.0V556.1H813.0V556.1H814.0V556.1H815.0V553.4H816.0V552.4H817.0V553.2H818.0V556.1H819.0V556.1H820.0V556.1H821.0V556.1H822.0V556.1H823.0V556.1H824.0V556.1H824.9V557Z" fill="#ffb27a"/><path d="M827.9 557V556.1H828.9V556.1H829.9V551.8H830.9V552.1H831.9V552.2H832.9V550.6H833.9V553.3H834.9V553.6H835.9V549.6H836.9V553.8H837.9V556.1H838.9V556.1H839.9V556.1H840.9V556.1H841.9V554.2H842.9V550.6H843.9V553.2H844.9V549.9H845.9V551.2H846.9V552.9H847.9V553.8H848.9V553.1H849.9V556.1H850.9V556.1H851.9V552.9H852.9V549.8H853.9V553.3H854.9V551.4H855.9V554.3H856.9V552.9H857.9V556.1H858.9V556.1H859.9V556.1H860.9V556.1H861.9V556.1H862.9V554.2H863.9V552.4H864.9V551.2H865.9V551.9H866.9V551.1H867.9V552.3H868.9V556.1H869.9V556.1H870.9V556.1H871.9V551.0H872.9V550.9H873.9V556.1H874.9V556.1H875.9V550.8H876.9V551.9H877.9V553.4H878.9V549.6H879.9V556.1H880.9V556.1H881.9V553.1H882.9V550.0H883.9V553.8H884.9V556.1H885.9V556.1H886.9V556.1H887.9V556.1H888.9V556.1H889.9V553.7H890.9V552.5H891.9V553.3H892.9V549.6H893.9V553.7H894.9V554.1H895.9V552.2H896.9V550.9H897.9V552.8H898.9V553.8H899.9V554.0H900.9V552.8H901.0V557Z" fill="#ffb27a"/><path d="M904.0 557V556.1H905.0V556.1H906.0V548.9H907.0V548.1H908.0V551.3H909.0V553.2H910.0V553.4H911.0V553.4H912.0V551.4H913.0V548.7H914.0V556.1H915.0V556.1H916.0V556.1H917.0V556.1H917.3V557Z" fill="#ffb27a"/><path d="M920.2 557V553.3H921.2V549.7H922.2V552.7H923.2V550.7H924.2V551.2H925.2V552.0H926.2V549.5H927.2V551.1H928.2V556.1H929.2V553.6H930.2V553.6H931.2V553.5H932.2V548.5H933.2V552.3H934.2V549.5H935.2V548.6H936.2V551.9H937.2V552.3H938.2V549.7H939.2V552.1H940.2V549.6H941.2V550.4H942.2V549.1H943.2V548.3H944.2V553.5H945.2V556.1H946.2V548.3H947.2V551.6H948.2V552.4H949.2V551.3H950.2V551.0H951.0V557Z" fill="#ffb27a"/><path d="M953.9 557V556.1H954.9V549.5H955.9V549.8H956.9V550.7H957.9V552.2H958.9V552.3H959.9V552.0H960.9V556.1H961.9V551.9H962.9V553.1H963.9V551.8H964.9V550.4H965.9V551.4H966.9V556.1H967.9V549.1H968.9V548.6H969.9V552.6H970.9V553.6H971.9V553.5H972.9V551.3H973.9V550.1H974.9V551.6H975.9V551.5H976.9V549.1H977.9V552.7H978.9V551.0H979.9V549.7H980.9V549.8H981.9V549.7H982.9V552.4H983.9V552.0H984.9V549.9H985.9V552.9H986.9V552.7H987.9V552.7H988.9V553.2H989.9V556.1H990.9V556.1H991.9V552.6H992.6V557Z" fill="#8fe0a0"/><path d="M995.8 557V556.1H996.8V556.1H997.8V556.1H998.8V550.0H999.8V554.1H1000.8V552.4H1001.8V550.8H1002.8V550.7H1003.8V556.1H1004.8V553.5H1005.8V554.3H1006.8V551.8H1007.8V550.8H1008.8V552.9H1009.8V550.6H1010.8V556.1H1011.8V556.1H1012.8V556.1H1013.8V556.1H1014.8V551.3H1015.8V553.0H1016.8V554.4H1017.8V553.0H1018.8V554.3H1019.8V550.0H1020.8V551.6H1021.8V553.6H1022.8V554.5H1023.8V553.1H1024.8V551.5H1025.8V553.7H1026.8V553.1H1027.8V552.3H1028.8V552.4H1029.8V552.7H1030.8V550.9H1031.8V551.5H1032.8V553.8H1033.8V552.1H1034.8V551.6H1035.8V556.1H1036.8V556.1H1037.8V556.1H1038.8V556.1H1039.8V556.1H1040.8V552.0H1041.8V552.9H1042.8V552.7H1043.8V550.6H1044.8V550.0H1045.8V552.9H1046.8V553.7H1047.8V556.1H1048.8V552.6H1049.8V553.8H1050.0V557Z" fill="#8fe0a0"/><path d="M1053.0 557V551.8H1054.0V549.1H1055.0V551.5H1056.0V553.7H1057.0V553.2H1058.0V556.1H1059.0V550.6H1060.0V552.0H1061.0V551.2H1062.0V553.2H1063.0V552.5H1064.0V551.1H1065.0V548.9H1066.0V553.4H1067.0V551.3H1068.0V549.6H1069.0V548.7H1070.0V549.4H1071.0V553.8H1072.0V549.0H1073.0V552.3H1074.0V556.1H1075.0V556.1H1076.0V550.2H1077.0V549.1H1078.0V550.5H1079.0V549.3H1080.0V550.6H1081.0V550.6H1082.0V552.9H1083.0V551.4H1084.0V550.9H1085.0V553.8H1086.0V548.8H1087.0V553.3H1088.0V552.7H1089.0V550.0H1090.0V549.1H1091.0V553.8H1092.0V550.9H1093.0V549.8H1094.0V553.4H1095.0V550.7H1096.0V551.0H1097.0V550.6H1098.0V552.3H1099.0V551.7H1100.0V550.8H1101.0V556.1H1102.0V556.1H1103.0V556.1H1104.0V556.1H1105.0V548.6H1106.0V551.5H1107.0V551.6H1108.0V550.6H1109.0V549.5H1110.0V549.4H1111.0V549.5H1112.0V551.8H1113.0V553.7H1114.0V552.0H1115.0V552.0H1116.0V556.1H1117.0V556.1H1118.0V556.1H1119.0V553.6H1120.0V550.0H1121.0V549.7H1122.0V551.2H1123.0V549.1H1124.0V550.4H1125.0V549.7H1126.0V553.9H1127.0V553.7H1128.0V550.6H1129.0V550.2H1130.0V553.4H1131.0V553.3H1132.0V549.1H1133.0V550.2H1134.0V550.0H1135.0V552.8H1136.0V549.4H1137.0V556.1H1138.0V549.1H1139.0V552.5H1140.0V549.5H1141.0V553.2H1142.0V551.3H1143.0V548.9H1144.0V552.9H1145.0V552.7H1146.0V552.0H1147.0V552.9H1148.0V551.8H1149.0V550.5H1150.0V552.5H1151.0V552.2H1152.0V551.9H1153.0V549.6H1154.0V552.6H1155.0V556.1H1156.0V548.7H1157.0V551.5H1158.0V551.1H1159.0V550.2H1159.3V557Z" fill="#8fe0a0"/><path d="M1162.5 557V556.1H1163.5V549.8H1164.5V551.2H1165.5V548.7H1166.5V552.0H1167.5V547.6H1168.5V550.1H1169.5V551.5H1170.5V549.0H1171.5V550.9H1172.5V552.6H1173.5V556.1H1174.5V552.1H1175.5V549.7H1176.5V547.6H1177.5V550.1H1178.5V549.6H1179.5V551.7H1180.5V553.7H1181.5V553.5H1182.5V552.8H1183.5V549.9H1184.5V556.1H1185.5V556.1H1186.5V556.1H1187.5V549.9H1188.5V553.4H1189.5V553.3H1190.5V550.2H1191.5V551.8H1192.5V556.1H1193.5V556.1H1194.5V550.0H1195.5V552.4H1196.5V549.8H1197.5V550.7H1198.5V552.8H1199.5V547.9H1200.5V550.9H1201.5V553.3H1202.5V552.8H1203.0V557Z" fill="#ff7aa8"/><path d="M1209.2 557V556.1H1210.2V547.7H1211.2V553.3H1212.2V548.6H1213.2V548.2H1214.2V550.0H1215.2V550.1H1216.2V556.1H1217.2V556.1H1218.2V556.1H1219.2V553.4H1220.2V550.4H1221.2V552.7H1222.2V548.0H1223.2V553.0H1224.2V549.9H1225.2V549.6H1226.2V552.4H1227.2V549.9H1228.2V550.5H1229.2V549.7H1230.2V548.7H1231.2V552.6H1232.2V551.8H1233.2V551.8H1234.2V549.3H1235.2V553.6H1236.2V548.5H1237.2V549.1H1238.2V550.8H1239.2V549.1H1240.2V550.9H1241.2V552.3H1242.2V553.0H1243.2V552.9H1244.2V548.2H1245.2V556.1H1246.2V556.1H1247.2V552.0H1248.2V550.3H1249.2V547.7H1250.2V551.8H1251.2V547.9H1252.2V548.2H1253.2V553.1H1254.2V550.5H1255.2V552.6H1256.2V548.1H1257.2V548.5H1258.2V552.4H1259.2V552.5H1260.2V551.3H1261.2V550.0H1262.2V551.3H1263.2V548.4H1264.2V548.0H1265.2V547.6H1266.2V556.1H1267.2V556.1H1268.2V556.1H1269.2V556.1H1270.2V551.0H1271.2V549.2H1272.2V556.1H1273.2V551.3H1274.2V550.1H1275.2V550.2H1276.2V552.6H1277.2V553.5H1278.2V547.9H1279.2V551.5H1280.2V552.8H1281.2V553.5H1282.2V553.4H1283.2V549.4H1284.2V549.8H1285.2V549.4H1286.2V549.1H1287.2V553.3H1288.2V550.0H1289.2V548.2H1290.2V553.3H1291.2V548.3H1292.2V548.0H1293.2V547.8H1294.2V553.0H1295.2V552.4H1296.2V553.0H1297.2V553.5H1298.2V548.4H1299.2V556.1H1300.2V556.1H1301.2V556.1H1302.2V556.1H1303.2V552.9H1304.2V548.8H1305.2V549.7H1306.2V551.1H1307.2V553.5H1308.2V552.1H1309.2V551.9H1310.2V549.3H1311.2V551.4H1312.2V551.7H1313.2V556.1H1314.2V556.1H1315.2V556.1H1316.2V556.1H1317.2V553.5H1318.2V550.5H1319.2V553.1H1320.2V550.8H1321.2V553.4H1322.2V550.2H1323.2V549.3H1324.2V548.6H1325.2V556.1H1326.2V553.7H1327.0V557Z" fill="#18d6ae"/><path d="M1330.2 557V553.6H1331.2V550.6H1332.2V556.1H1333.2V556.1H1334.2V550.0H1335.2V547.8H1336.2V550.5H1337.2V550.1H1338.2V552.7H1339.2V548.6H1340.2V547.9H1341.2V552.2H1342.2V552.7H1342.3V557Z" fill="#18d6ae"/><path d="M1345.2 557V556.1H1346.2V556.1H1347.2V556.1H1348.2V556.1H1349.2V556.1H1350.2V551.5H1351.2V551.2H1352.2V551.2H1353.2V548.2H1354.2V553.1H1355.2V548.2H1356.2V553.5H1357.2V551.0H1357.2V557Z" fill="#18d6ae"/><path d="M1360.6 557V556.1H1361.6V553.7H1362.6V552.8H1363.6V552.5H1364.6V551.5H1365.6V551.5H1366.6V552.0H1367.6V553.3H1368.6V556.1H1369.6V552.8H1370.6V552.4H1371.6V553.4H1372.6V552.8H1373.6V551.8H1374.6V553.6H1375.6V553.7H1376.6V553.3H1377.6V556.1H1378.6V556.1H1379.6V556.1H1380.6V556.1H1381.6V556.1H1382.6V556.1H1383.6V556.1H1384.6V556.1H1385.6V556.1H1386.6V556.1H1387.6V556.1H1388.6V556.1H1389.6V553.6H1390.6V550.7H1391.6V550.5H1392.6V554.3H1393.6V553.1H1394.6V550.6H1395.6V551.4H1396.6V551.6H1397.6V552.9H1398.6V553.9H1399.6V556.1H1400.6V551.0H1401.6V552.8H1402.6V554.7H1403.6V556.1H1404.6V556.1H1405.6V553.5H1406.6V554.6H1407.6V553.6H1408.6V551.6H1409.6V554.7H1410.6V553.7H1411.6V551.1H1412.6V556.1H1413.6V556.1H1414.6V556.1H1415.6V556.1H1416.6V556.1H1417.6V556.1H1418.6V556.1H1419.6V556.1H1420.6V556.1H1421.6V552.0H1422.6V552.8H1423.6V553.4H1424.6V556.1H1425.6V553.7H1426.6V553.0H1427.6V551.7H1428.6V554.1H1429.6V551.1H1430.6V556.1H1431.6V553.0H1432.6V551.9H1433.6V550.8H1434.6V554.0H1435.6V552.0H1436.6V551.4H1437.6V553.1H1438.6V552.7H1439.6V556.1H1440.1V557Z" fill="#18d6ae"/><path d="M1443.0 557V553.8H1444.0V551.7H1445.0V550.7H1446.0V553.9H1447.0V553.3H1448.0V551.1H1449.0V556.1H1450.0V552.6H1451.0V552.0H1452.0V551.2H1453.0V552.5H1454.0V553.0H1455.0V556.1H1456.0V553.9H1457.0V552.6H1458.0V550.8H1459.0V551.6H1460.0V552.1H1461.0V552.0H1462.0V553.7H1463.0V556.1H1464.0V553.0H1465.0V552.9H1466.0V556.1H1467.0V556.1H1468.0V556.1H1469.0V553.0H1470.0V550.7H1471.0V550.6H1472.0V550.5H1473.0V550.7H1474.0V552.8H1475.0V554.0H1476.0V556.1H1477.0V552.0H1478.0V552.7H1479.0V552.4H1480.0V553.8H1481.0V550.7H1481.3V557Z" fill="#18d6ae"/><path d="M1484.2 557V556.1H1485.2V556.1H1486.2V556.1H1487.2V556.1H1488.2V556.1H1489.2V550.1H1490.2V551.8H1491.2V550.1H1492.2V553.0H1493.2V556.1H1494.2V556.1H1495.2V556.1H1496.2V556.1H1497.2V556.1H1498.2V556.1H1499.2V556.1H1500.2V556.1H1501.2V556.1H1502.2V556.1H1503.2V556.1H1504.2V556.1H1505.2V553.4H1506.2V552.6H1507.2V552.2H1508.2V553.8H1509.2V551.3H1510.2V552.5H1511.2V549.3H1512.2V556.1H1513.2V556.1H1514.2V556.1H1515.2V556.1H1516.2V550.8H1517.2V552.9H1518.2V553.7H1519.2V553.2H1520.2V551.8H1521.2V550.1H1522.2V553.1H1523.2V552.1H1524.2V556.1H1525.2V556.1H1526.2V556.1H1527.2V556.1H1528.2V553.2H1529.2V550.6H1530.2V551.4H1531.2V550.3H1532.2V551.9H1533.2V549.6H1534.2V556.1H1535.2V549.9H1536.2V551.7H1537.2V551.3H1538.2V551.7H1539.2V549.5H1540.2V556.1H1541.2V551.4H1541.2V557Z" fill="#18d6ae"/><path d="M1544.1 557V556.1H1545.1V551.8H1546.1V551.3H1547.1V550.7H1548.1V549.8H1549.1V552.3H1550.1V552.0H1551.1V549.2H1552.1V550.9H1553.1V554.1H1554.1V551.0H1555.1V550.7H1556.1V549.4H1557.1V552.5H1558.1V549.1H1559.1V556.1H1560.1V556.1H1561.1V556.1H1562.1V550.9H1563.1V552.4H1564.1V549.7H1565.1V552.3H1566.1V551.7H1567.1V551.5H1568.1V550.2H1569.1V553.1H1570.1V556.1H1571.1V556.1H1572.1V556.1H1573.1V556.1H1574.1V552.1H1575.1V551.6H1576.1V552.8H1577.1V551.6H1578.1V549.1H1578.9V557Z" fill="#18d6ae"/><path d="M1582.0 557V556.1H1583.0V556.1H1584.0V556.1H1585.0V556.1H1586.0V550.1H1587.0V554.0H1588.0V550.4H1589.0V556.1H1590.0V556.1H1591.0V553.6H1592.0V554.0H1593.0V549.9H1594.0V551.7H1595.0V550.2H1596.0V553.9H1597.0V556.1H1598.0V556.1H1599.0V556.1H1600.0V553.1H1601.0V550.7H1602.0V557Z" fill="#18d6ae"/><path d="M1604.9 557V556.1H1605.9V556.1H1606.9V549.7H1607.9V552.0H1608.9V553.7H1609.9V549.4H1610.9V550.1H1611.9V551.3H1612.9V552.9H1613.9V552.6H1614.9V556.1H1615.9V556.1H1616.9V556.1H1617.9V556.1H1618.9V556.1H1619.4V557Z" fill="#18d6ae"/><path d="M1622.3 557V549.9H1623.3V550.2H1624.3V556.1H1625.3V556.1H1626.3V556.1H1626.8V557Z" fill="#18d6ae"/><path d="M1630.2 557V551.1H1631.2V549.0H1632.2V550.8H1633.2V553.4H1634.2V550.2H1635.2V551.3H1636.2V553.8H1637.2V551.7H1638.2V556.1H1639.2V556.1H1640.2V556.1H1641.2V549.1H1642.2V549.7H1643.2V553.1H1644.2V554.1H1645.2V550.5H1646.2V552.9H1647.2V550.4H1648.2V553.2H1649.2V553.9H1650.2V550.2H1651.2V550.5H1652.2V549.8H1653.2V556.1H1654.2V551.8H1655.2V549.4H1656.2V552.9H1657.2V549.2H1658.2V550.5H1659.2V554.1H1660.2V554.1H1661.2V550.8H1662.2V549.9H1663.2V552.6H1664.2V551.1H1665.2V549.2H1666.2V549.9H1667.2V551.0H1668.2V552.6H1669.0V557Z" fill="#18d6ae"/><path d="M1671.9 557V556.1H1672.9V556.1H1673.9V556.1H1674.9V552.3H1675.9V550.8H1676.9V550.9H1677.9V556.1H1678.9V556.1H1679.9V556.1H1680.9V556.1H1681.9V556.1H1682.9V556.1H1683.9V551.0H1684.9V550.8H1685.9V556.1H1686.9V556.1H1687.9V556.1H1688.9V556.1H1689.9V551.1H1690.9V552.6H1691.1V557Z" fill="#18d6ae"/><path d="M1698.0 557V556.1H1699.0V556.1H1700.0V556.1H1701.0V556.1H1702.0V556.1H1703.0V556.1H1704.0V556.1H1705.0V552.5H1706.0V552.8H1707.0V552.7H1707.2V557Z" fill="#18d6ae"/><path d="M249.8 574V572.2H250.8V571.2H251.8V572.7H252.8V571.2H252.8V574Z" fill="#ffb27a"/><path d="M260.5 574V572.2H261.5V572.2H262.2V574Z" fill="#ffb27a"/><path d="M268.9 574V572.7H269.9V571.2H270.9V571.8H271.9V572.7H272.9V571.2H273.9V571.8H274.9V572.2H275.9V571.8H276.9V571.8H277.6V574Z" fill="#a9a0ff"/><path d="M282.6 574V572.2H283.6V572.2H284.6V571.8H285.6V571.8H286.6V572.2H287.6V571.2H288.6V572.7H289.6V571.2H290.1V574Z" fill="#a9a0ff"/><path d="M293.0 574V572.2H294.0V572.7H295.0V572.7H296.0V572.2H296.2V574Z" fill="#a9a0ff"/><path d="M298.8 574V571.2H299.8V572.2H300.8V571.8H301.8V571.2H302.8V572.2H303.8V572.7H304.8V572.2H305.8V572.7H306.8V571.3H307.8V570.4H308.8V571.0H309.8V570.0H310.8V571.2H311.0V574Z" fill="#a9a0ff"/><path d="M313.6 574V572.7H314.6V572.2H315.6V571.2H316.6V572.2H317.6V572.2H318.6V572.2H319.6V571.8H320.6V572.7H321.6V572.7H322.6V572.7H323.6V571.2H324.6V571.5H325.6V572.4H326.6V571.8H327.3V574Z" fill="#a9a0ff"/><path d="M329.9 574V571.2H330.9V572.7H331.9V571.8H332.9V572.7H333.9V571.2H334.9V572.2H335.9V572.7H336.9V572.2H337.9V572.2H338.9V572.2H339.9V571.8H340.9V572.2H341.9V572.7H342.9V571.2H343.6V574Z" fill="#a9a0ff"/><path d="M349.8 574V572.7H350.8V571.8H351.4V574Z" fill="#a9a0ff"/><path d="M360.1 574V572.2H361.1V571.8H362.1V572.2H363.1V572.2H364.1V572.2H365.1V572.2H366.1V571.2H367.1V572.7H368.1V571.8H369.1V572.2H370.1V572.7H371.1V571.2H372.1V572.7H373.1V572.2H373.2V574Z" fill="#a9a0ff"/><path d="M375.6 574V571.8H376.6V572.2H377.6V571.2H378.6V572.2H379.6V572.7H380.6V571.2H381.6V572.7H382.6V571.8H383.6V572.7H384.6V571.8H385.6V571.2H386.6V571.6H387.6V571.4H388.6V572.3H389.6V571.2H390.6V572.2H391.6V572.2H392.6V572.2H393.6V572.2H394.6V572.7H395.6V571.2H396.6V572.2H397.6V572.2H398.6V572.2H399.6V570.3H400.6V571.2H401.6V570.3H402.6V572.3H403.6V571.8H404.6V571.2H405.6V571.2H406.0V574Z" fill="#f07cff"/><path d="M408.6 574V571.2H409.6V571.8H410.6V571.8H411.6V571.3H412.6V570.7H413.6V572.4H414.4V574Z" fill="#f07cff"/><path d="M416.6 574V571.2H417.6V572.7H418.6V572.2H419.6V571.8H420.6V571.2H421.6V572.7H422.6V572.7H423.6V571.2H424.6V572.7H425.6V572.2H426.6V571.8H427.6V571.9H428.6V571.8H429.6V572.7H430.6V570.3H431.6V571.7H432.6V570.0H433.6V570.6H434.1V574Z" fill="#f07cff"/><path d="M436.7 574V572.2H437.7V572.7H438.7V572.7H439.7V572.7H440.7V571.2H441.7V571.8H442.7V572.7H443.7V572.2H444.7V572.2H445.7V572.2H446.7V571.2H447.7V572.2H448.7V572.7H449.7V571.2H450.7V572.7H451.7V572.7H452.7V571.8H453.7V571.8H454.7V571.8H455.7V572.7H456.7V572.2H457.7V571.8H458.7V571.2H459.7V572.7H460.7V572.2H461.7V571.2H462.7V572.7H463.7V571.2H464.7V571.2H465.7V572.7H466.7V570.6H467.7V569.7H468.7V570.6H469.7V570.6H470.7V572.7H471.7V571.8H472.7V572.7H473.7V572.7H474.7V571.8H475.7V572.2H476.7V571.8H477.7V572.2H478.7V572.2H479.7V571.2H480.7V571.8H481.7V572.7H482.7V571.8H483.7V572.2H484.7V572.2H485.7V571.8H486.7V571.8H487.7V571.2H488.7V572.7H489.7V572.2H490.7V571.2H491.7V571.2H492.7V572.0H493.7V569.6H494.7V571.5H495.7V571.8H496.7V572.2H497.7V572.7H498.7V572.7H499.7V571.8H500.7V572.7H501.7V571.2H502.7V572.7H503.7V572.2H504.7V571.8H505.7V572.2H506.3V574Z" fill="#f07cff"/><path d="M508.9 574V571.8H509.9V572.7H510.9V571.2H511.9V572.2H512.9V572.7H513.9V570.7H514.9V571.0H515.9V569.6H516.9V570.8H517.9V571.8H518.9V572.7H519.9V571.2H520.9V571.8H521.9V571.8H522.9V571.2H523.9V572.7H524.9V571.2H525.9V571.8H526.9V571.8H527.9V571.2H528.9V572.2H529.9V571.8H530.9V572.2H531.9V572.2H532.9V572.7H533.9V570.8H534.9V571.0H535.9V569.7H536.9V571.2H537.9V571.2H538.9V571.8H539.9V571.4H540.9V569.7H541.9V570.4H542.9V570.9H543.9V571.8H544.9V572.2H545.9V571.2H546.9V571.2H547.9V571.8H548.9V572.7H549.9V571.8H550.9V572.7H551.9V572.2H552.9V571.8H553.9V571.2H554.9V571.8H555.9V572.2H556.9V572.2H557.9V572.7H558.9V572.7H559.9V572.7H560.9V572.7H561.9V571.8H562.9V572.7H563.9V571.2H564.9V572.7H565.9V572.2H566.9V571.8H567.9V572.2H568.9V571.2H569.9V572.2H570.9V572.7H571.9V571.9H572.9V570.9H573.9V571.2H574.9V572.7H575.9V571.8H576.9V572.2H577.9V572.2H578.9V572.1H579.9V569.8H580.9V570.7H581.9V571.4H582.9V571.2H583.9V569.8H584.9V570.7H585.9V571.2H586.9V571.7H587.9V572.3H588.9V572.2H589.9V571.2H590.9V571.8H591.9V571.2H592.9V572.7H593.9V571.2H594.9V572.2H595.9V571.2H596.9V571.2H597.9V572.2H598.9V571.9H599.9V572.7H600.9V571.8H601.9V571.8H602.9V571.2H603.9V572.7H604.9V571.2H605.9V571.8H606.9V571.2H607.9V571.8H608.9V571.2H609.9V572.4H610.9V570.1H611.9V571.7H612.9V572.0H613.9V572.2H614.9V571.2H615.9V572.2H616.9V571.8H617.9V571.2H618.9V572.2H619.1V574Z" fill="#ffb27a"/><path d="M621.7 574V571.2H622.7V572.2H623.7V572.2H624.7V571.8H625.7V571.2H626.7V571.8H627.7V571.2H628.7V572.2H629.7V572.7H630.7V572.7H631.7V571.8H632.7V571.2H633.7V570.8H634.7V571.5H635.7V571.3H636.7V572.2H637.7V572.2H638.7V572.7H639.7V571.8H640.7V571.8H641.7V571.8H642.7V571.8H643.7V571.2H644.7V571.2H645.7V571.2H646.7V572.2H647.7V572.2H648.7V570.1H649.7V570.4H650.7V569.8H651.7V572.4H652.7V571.2H653.7V571.2H654.7V572.7H655.7V572.7H656.7V572.2H657.7V572.7H658.7V572.2H659.7V571.8H660.7V572.7H661.7V572.2H662.7V572.2H663.7V571.8H664.7V571.8H665.7V572.7H666.7V571.8H667.7V572.7H668.7V572.7H669.7V571.8H670.7V569.8H671.7V570.2H672.7V571.2H673.7V572.2H674.7V572.7H675.7V571.2H676.7V571.8H677.7V571.2H678.7V572.2H679.7V572.2H680.7V572.2H681.7V570.0H682.7V570.8H683.7V571.9H684.7V571.9H685.7V572.2H686.7V572.2H687.7V572.2H688.7V571.2H689.7V571.8H690.7V571.2H691.7V572.2H692.7V572.7H693.7V571.2H694.7V571.8H695.7V572.2H696.7V572.2H697.7V572.2H698.4V574Z" fill="#ffb27a"/><path d="M701.4 574V572.7H702.4V572.2H703.4V572.2H704.4V571.2H705.4V571.2H706.4V572.7H707.4V572.7H708.4V572.2H709.4V571.5H710.4V572.1H711.4V571.5H712.4V572.2H713.4V571.2H714.4V571.8H715.4V572.7H716.4V569.5H717.4V570.2H718.4V572.2H719.4V571.8H720.4V571.2H721.4V571.2H722.4V571.8H723.4V570.5H724.4V570.6H725.4V571.8H726.4V572.7H727.4V572.7H728.4V570.0H729.4V571.6H730.4V571.9H731.4V572.2H732.4V571.8H733.4V571.8H734.4V571.8H735.4V571.8H736.4V571.8H737.4V571.8H738.4V572.7H739.4V571.2H740.4V572.2H741.4V571.2H741.8V574Z" fill="#ffb27a"/><path d="M745.0 574V571.8H746.0V572.7H747.0V572.2H748.0V571.2H749.0V571.2H750.0V572.7H751.0V571.2H752.0V571.8H753.0V569.9H754.0V570.1H755.0V571.2H756.0V571.6H757.0V571.2H758.0V572.7H759.0V572.2H760.0V572.2H761.0V572.7H762.0V571.8H763.0V571.2H764.0V571.8H765.0V571.2H766.0V572.2H767.0V572.7H768.0V572.7H769.0V571.8H770.0V571.8H771.0V571.2H772.0V571.2H773.0V572.2H774.0V571.8H775.0V572.7H776.0V572.2H777.0V571.2H778.0V572.2H779.0V571.8H780.0V571.2H781.0V572.2H782.0V571.2H783.0V572.2H784.0V572.2H785.0V572.7H786.0V571.8H787.0V572.2H788.0V571.8H789.0V572.2H790.0V572.2H791.0V572.7H792.0V572.7H793.0V572.7H794.0V572.2H795.0V572.7H796.0V572.7H797.0V571.2H798.0V572.2H799.0V572.7H800.0V572.7H801.0V572.7H802.0V572.7H803.0V572.2H804.0V572.7H805.0V571.2H806.0V572.7H807.0V572.2H808.0V571.8H809.0V571.8H810.0V572.7H811.0V572.7H812.0V571.8H813.0V572.7H814.0V571.8H815.0V571.8H816.0V572.7H817.0V571.7H818.0V571.4H819.0V570.4H820.0V572.4H821.0V571.2H822.0V572.7H823.0V572.7H824.0V572.2H824.9V574Z" fill="#ffb27a"/><path d="M827.9 574V571.8H828.9V571.2H829.9V571.8H830.9V571.8H831.9V572.7H832.9V571.0H833.9V571.0H834.9V572.2H835.9V570.6H836.9V571.2H837.4V574Z" fill="#ffb27a"/><path d="M840.4 574V572.2H841.4V571.2H842.4V572.7H843.4V572.2H844.4V572.2H845.4V572.7H846.4V571.8H847.4V571.8H848.4V571.2H849.4V571.8H850.4V571.0H851.4V571.8H852.4V571.7H853.4V569.9H854.4V572.2H855.4V572.2H856.4V571.8H857.4V571.4H858.4V570.7H859.4V570.7H860.4V572.7H861.4V572.7H862.4V571.2H863.4V572.7H864.4V571.8H865.4V572.2H866.4V572.2H867.4V571.8H868.4V571.8H869.4V572.2H870.4V571.2H871.4V571.8H872.4V571.2H873.4V572.2H874.4V571.8H875.4V572.2H876.4V571.1H877.4V571.1H878.4V570.8H879.4V571.5H880.4V572.7H881.4V571.8H882.4V571.8H883.4V572.2H884.4V572.7H885.4V571.8H886.4V571.2H887.4V571.2H888.4V572.7H889.4V571.8H890.4V571.8H891.4V572.7H892.3V574Z" fill="#ffb27a"/><path d="M897.3 574V571.8H898.3V572.7H899.3V571.2H900.3V571.8H901.3V572.7H902.3V572.7H903.3V572.7H904.3V571.8H905.3V572.7H906.3V572.7H907.3V572.7H908.3V571.8H909.3V572.7H910.3V571.2H911.3V571.8H912.3V571.2H913.3V572.7H914.3V571.8H915.3V571.2H916.3V571.2H917.3V574Z" fill="#ffb27a"/><path d="M920.2 574V572.7H921.2V571.8H922.2V570.3H923.2V570.0H924.2V572.0H925.2V572.4H926.2V572.7H927.2V571.8H928.2V572.2H929.2V571.8H930.2V571.8H931.2V571.2H932.2V571.8H933.2V571.2H934.2V571.8H935.2V571.8H936.2V572.7H937.2V572.7H938.2V571.8H939.2V572.2H940.2V572.7H941.2V572.2H942.2V572.2H943.2V572.2H944.2V571.8H945.2V572.2H946.2V572.2H947.2V571.8H948.2V572.2H949.2V571.2H950.2V570.8H951.0V574Z" fill="#ffb27a"/><path d="M953.9 574V570.2H954.9V570.8H955.9V572.0H956.9V572.0H957.9V570.2H958.9V570.8H959.9V571.0H960.9V569.3H961.9V571.0H962.9V570.1H963.9V569.5H964.9V572.2H965.9V571.5H966.9V571.1H967.9V571.2H968.9V570.9H969.9V571.3H970.9V570.2H971.9V571.4H972.9V570.8H973.9V571.4H974.9V570.8H975.9V570.7H976.9V569.4H977.9V570.2H978.9V572.0H979.9V571.4H980.9V570.8H981.9V571.7H982.9V569.4H983.9V569.0H984.9V571.3H985.9V572.2H986.9V571.8H987.9V571.3H988.9V570.8H989.9V570.7H990.9V571.0H991.9V570.9H992.6V574Z" fill="#8fe0a0"/><path d="M995.8 574V570.2H996.8V572.0H997.8V571.4H998.8V572.0H999.8V570.3H1000.8V570.4H1001.8V570.0H1002.8V569.9H1003.8V572.1H1004.8V569.3H1005.8V571.9H1006.8V570.7H1007.8V572.2H1008.8V571.5H1009.8V570.5H1010.8V570.2H1011.8V570.5H1012.8V570.8H1013.8V572.0H1014.8V571.4H1015.8V571.4H1016.8V570.8H1017.8V572.0H1018.8V572.0H1019.8V571.4H1020.8V570.2H1021.8V570.8H1022.8V570.8H1023.8V570.2H1024.8V570.8H1025.8V570.8H1026.8V570.8H1027.8V570.2H1028.8V570.2H1029.8V570.2H1030.8V572.0H1031.8V570.8H1032.8V570.2H1033.8V571.4H1034.8V572.0H1035.8V572.0H1036.8V572.0H1037.8V570.8H1038.8V570.2H1039.8V570.8H1040.8V572.0H1041.8V570.2H1042.8V570.2H1043.8V570.2H1044.8V572.0H1045.8V570.8H1046.8V570.8H1047.8V570.1H1048.8V569.2H1049.8V569.8H1050.0V574Z" fill="#8fe0a0"/><path d="M1053.0 574V570.2H1054.0V570.8H1055.0V570.2H1056.0V571.4H1057.0V571.1H1058.0V571.6H1059.0V571.7H1060.0V571.1H1061.0V570.1H1062.0V571.8H1063.0V571.4H1064.0V572.0H1065.0V570.8H1066.0V570.2H1067.0V570.0H1068.0V571.0H1069.0V571.1H1070.0V570.8H1071.0V572.0H1072.0V570.8H1073.0V572.0H1074.0V570.2H1075.0V571.4H1076.0V571.4H1077.0V571.1H1078.0V570.6H1079.0V571.5H1080.0V570.8H1081.0V570.8H1082.0V572.2H1083.0V571.4H1084.0V570.3H1085.0V570.8H1086.0V570.8H1087.0V570.2H1088.0V569.5H1089.0V571.6H1090.0V570.9H1091.0V569.7H1092.0V570.2H1093.0V572.0H1094.0V570.2H1095.0V570.8H1096.0V570.2H1097.0V570.8H1098.0V570.2H1099.0V571.4H1100.0V571.4H1101.0V570.8H1102.0V571.2H1103.0V572.0H1104.0V569.8H1105.0V570.2H1106.0V572.0H1107.0V570.7H1108.0V570.7H1109.0V569.5H1110.0V570.9H1111.0V570.7H1112.0V569.4H1113.0V570.2H1114.0V570.1H1115.0V569.8H1116.0V572.0H1117.0V570.8H1118.0V570.2H1119.0V572.0H1120.0V570.4H1121.0V572.2H1122.0V571.4H1123.0V572.0H1124.0V571.4H1125.0V570.2H1126.0V570.2H1127.0V571.4H1128.0V572.0H1129.0V571.4H1130.0V571.4H1131.0V572.0H1132.0V570.8H1133.0V572.0H1134.0V570.8H1135.0V570.8H1136.0V570.2H1137.0V570.8H1138.0V570.2H1139.0V570.8H1140.0V571.4H1141.0V570.1H1142.0V569.2H1143.0V570.1H1144.0V569.9H1145.0V571.8H1146.0V569.2H1147.0V570.2H1148.0V572.0H1149.0V572.0H1150.0V570.2H1151.0V570.8H1152.0V569.7H1153.0V571.3H1154.0V569.9H1155.0V570.2H1156.0V570.2H1157.0V571.4H1158.0V569.5H1159.0V571.8H1159.3V574Z" fill="#8fe0a0"/><path d="M1162.5 574V569.6H1163.5V570.6H1164.5V569.9H1165.5V571.7H1166.5V571.5H1167.5V569.9H1168.5V569.8H1169.5V569.6H1170.5V571.4H1171.5V570.6H1172.5V570.7H1173.5V571.6H1174.5V570.9H1175.5V570.1H1176.5V570.2H1177.5V571.4H1178.5V571.4H1179.5V571.3H1180.5V571.5H1181.5V570.4H1182.5V571.2H1183.5V570.4H1184.5V571.2H1185.5V569.5H1186.5V571.8H1187.5V569.7H1188.5V570.2H1189.5V570.8H1190.5V570.8H1191.5V572.0H1192.5V571.4H1193.5V570.2H1194.5V570.2H1195.5V571.9H1196.5V569.2H1197.5V569.0H1198.5V569.2H1199.5V570.8H1200.5V572.0H1201.5V570.2H1202.5V572.0H1203.0V574Z" fill="#ff7aa8"/><path d="M1209.2 574V568.1H1210.2V569.2H1211.2V569.4H1212.2V571.4H1213.2V568.5H1214.2V568.5H1215.2V567.9H1216.2V569.3H1217.2V572.0H1218.2V570.8H1219.2V569.0H1220.2V571.5H1221.2V570.3H1222.2V571.4H1223.2V570.8H1224.2V568.2H1225.2V568.3H1226.2V568.7H1227.2V569.8H1228.2V568.6H1229.2V571.2H1230.2V571.0H1231.2V570.1H1232.2V569.6H1233.2V571.3H1234.2V571.4H1235.2V570.8H1236.2V568.9H1237.2V571.0H1238.2V571.0H1239.2V567.7H1240.2V570.3H1241.2V568.2H1242.2V568.0H1243.2V571.4H1244.2V568.0H1245.2V571.2H1246.2V572.0H1247.2V571.4H1248.2V571.5H1249.2V570.6H1250.2V567.7H1251.2V570.5H1252.2V569.4H1253.2V567.6H1254.2V571.4H1255.2V572.0H1256.2V569.7H1257.2V568.4H1258.2V571.4H1259.2V571.1H1260.2V570.6H1261.2V571.6H1262.2V572.0H1263.2V572.0H1264.2V570.8H1265.2V570.7H1266.2V568.5H1267.2V569.6H1268.2V568.3H1269.2V568.3H1270.2V567.6H1271.2V571.6H1272.2V569.1H1273.2V568.8H1274.2V570.8H1275.2V569.8H1276.2V567.8H1277.2V571.7H1278.2V567.8H1279.2V570.0H1280.2V570.0H1281.2V571.4H1282.2V570.7H1283.2V571.4H1284.2V568.5H1285.2V570.9H1286.2V567.8H1287.2V568.8H1288.2V572.0H1289.2V570.2H1290.2V568.4H1291.2V567.9H1292.2V568.6H1293.2V569.0H1294.2V570.9H1295.2V569.1H1296.2V570.2H1297.2V567.6H1298.2V569.3H1299.2V568.3H1300.2V569.6H1301.2V568.5H1302.2V569.6H1303.2V570.6H1304.2V570.8H1305.2V570.2H1306.2V571.4H1307.2V570.8H1308.2V572.0H1309.2V568.4H1310.2V570.7H1311.2V568.2H1312.2V570.7H1313.2V570.9H1314.2V569.8H1315.2V570.7H1316.2V569.6H1317.2V572.0H1318.2V570.2H1319.2V570.8H1320.2V570.2H1321.2V571.4H1322.2V570.8H1323.2V570.2H1324.2V572.0H1325.2V572.0H1326.2V570.2H1327.0V574Z" fill="#18d6ae"/><path d="M1335.2 574V570.8H1336.2V570.8H1337.2V572.0H1338.2V570.2H1339.2V570.8H1340.2V570.8H1341.2V570.2H1342.2V571.4H1342.3V574Z" fill="#18d6ae"/><path d="M1345.2 574V570.7H1346.2V568.9H1347.2V570.8H1348.2V570.8H1349.2V570.8H1350.2V570.2H1351.2V570.8H1352.2V571.4H1353.2V571.4H1354.2V572.0H1355.2V571.7H1356.2V571.2H1357.2V570.1H1357.2V574Z" fill="#18d6ae"/><path d="M1360.6 574V570.8H1361.6V570.2H1362.6V569.7H1363.6V571.8H1364.6V569.8H1365.6V570.5H1366.6V570.8H1367.6V570.2H1368.6V572.0H1369.6V570.2H1370.6V572.0H1371.6V570.1H1372.6V570.5H1373.6V571.4H1374.6V570.2H1375.6V570.4H1376.6V572.0H1377.6V568.7H1378.6V571.1H1379.6V572.0H1380.6V571.4H1381.6V570.8H1382.6V571.4H1383.6V572.0H1384.6V570.2H1385.6V570.2H1386.6V570.8H1387.6V570.8H1388.6V570.2H1389.6V570.8H1390.6V571.4H1391.6V572.0H1392.6V571.4H1393.6V572.0H1394.6V570.2H1395.6V570.8H1396.6V571.4H1397.6V570.2H1398.6V570.8H1399.6V570.2H1400.6V570.8H1401.6V570.9H1402.6V569.2H1403.6V570.4H1404.6V570.5H1405.6V569.1H1406.6V569.8H1407.6V569.3H1408.6V570.9H1409.6V571.5H1410.6V570.2H1411.6V570.2H1412.6V570.8H1413.6V570.2H1414.6V570.8H1415.6V572.0H1416.6V572.0H1417.6V571.0H1418.6V569.9H1419.6V570.8H1420.6V568.6H1421.6V568.9H1422.6V568.9H1423.6V569.7H1424.6V570.6H1425.6V569.2H1426.6V571.7H1427.6V571.0H1428.6V569.8H1429.6V572.0H1430.6V570.2H1431.6V570.8H1432.6V570.2H1433.6V570.8H1434.6V571.4H1435.6V570.2H1436.6V570.8H1437.6V569.6H1438.6V568.8H1439.6V571.8H1440.1V574Z" fill="#18d6ae"/><path d="M1443.0 574V569.7H1444.0V570.0H1445.0V570.6H1446.0V570.0H1447.0V571.1H1448.0V569.1H1449.0V571.4H1450.0V570.3H1451.0V568.9H1452.0V568.9H1453.0V570.2H1454.0V571.4H1455.0V570.2H1456.0V570.8H1457.0V570.8H1458.0V571.4H1459.0V570.8H1460.0V572.0H1461.0V572.0H1462.0V571.3H1463.0V570.4H1464.0V569.3H1465.0V570.5H1466.0V570.2H1467.0V572.0H1468.0V571.7H1469.0V571.3H1470.0V569.8H1471.0V570.9H1472.0V570.9H1473.0V571.4H1474.0V571.4H1475.0V572.0H1476.0V571.4H1477.0V571.1H1478.0V570.7H1479.0V568.7H1480.0V571.1H1481.0V571.8H1481.3V574Z" fill="#18d6ae"/><path d="M1484.2 574V570.2H1485.2V570.0H1486.2V571.3H1487.2V569.0H1488.2V568.5H1489.2V570.8H1490.2V570.8H1491.2V570.0H1492.2V570.5H1493.2V568.6H1494.2V568.9H1495.2V569.9H1496.2V571.4H1497.2V571.1H1498.2V571.4H1499.2V569.4H1500.2V570.2H1501.2V571.4H1502.2V571.4H1503.2V570.8H1504.2V572.0H1505.2V572.0H1506.2V570.6H1507.2V569.1H1508.2V569.8H1509.2V570.8H1510.2V571.4H1511.2V570.8H1512.2V570.8H1513.2V569.6H1514.2V570.6H1515.2V572.0H1516.2V572.0H1517.2V571.4H1518.2V570.2H1519.2V572.0H1520.2V570.8H1521.2V571.4H1522.2V570.8H1523.2V571.4H1524.2V572.0H1525.2V571.4H1526.2V570.2H1527.2V570.2H1528.2V570.2H1529.2V571.7H1530.2V569.5H1531.2V572.0H1532.2V570.4H1533.2V571.9H1534.2V572.0H1535.2V570.8H1536.2V570.2H1537.2V571.4H1538.2V568.8H1539.2V570.7H1540.2V571.7H1541.2V571.4H1542.2V570.2H1542.2V574Z" fill="#18d6ae"/><path d="M1545.2 574V570.2H1546.2V572.0H1547.2V571.4H1548.2V571.4H1549.2V570.2H1550.2V570.2H1551.2V572.0H1552.2V570.2H1553.2V569.2H1554.2V568.9H1555.2V572.1H1556.2V571.4H1557.2V572.0H1558.2V571.4H1559.2V572.0H1560.2V570.2H1561.2V571.4H1562.2V572.0H1563.2V570.2H1564.2V571.4H1565.2V570.2H1566.2V572.0H1567.2V572.0H1568.2V571.4H1569.2V570.8H1570.2V568.8H1571.2V572.1H1572.2V569.0H1573.2V570.1H1574.2V569.1H1575.2V572.0H1576.2V570.8H1577.2V572.0H1578.2V571.4H1578.9V574Z" fill="#18d6ae"/><path d="M1585.0 574V569.2H1586.0V570.4H1587.0V571.6H1588.0V569.8H1589.0V571.3H1590.0V570.5H1591.0V570.1H1592.0V570.8H1593.0V569.0H1594.0V569.0H1595.0V571.7H1596.0V570.8H1597.0V570.8H1598.0V570.0H1599.0V570.9H1600.0V571.4H1601.0V571.8H1602.0V574Z" fill="#18d6ae"/><path d="M1604.9 574V571.3H1605.9V570.7H1606.9V568.6H1607.9V568.8H1608.9V570.0H1609.9V571.3H1610.9V572.0H1611.9V572.0H1612.9V572.0H1613.9V571.4H1614.9V570.2H1615.9V572.0H1616.9V570.8H1617.9V571.4H1618.9V570.8H1619.9V572.0H1620.9V572.0H1621.9V571.4H1622.0V574Z" fill="#18d6ae"/><path d="M1624.9 574V570.2H1625.9V570.8H1626.9V571.4H1627.9V572.0H1628.8V574Z" fill="#18d6ae"/><path d="M1632.2 574V570.8H1633.2V570.8H1634.2V568.9H1635.2V569.2H1636.2V570.2H1637.2V570.6H1638.2V570.9H1639.2V571.8H1640.2V571.6H1641.2V571.4H1642.2V571.4H1643.2V570.2H1644.2V572.0H1645.2V571.4H1646.2V572.0H1647.2V570.2H1648.2V571.4H1649.2V571.4H1650.2V570.8H1651.2V571.4H1652.2V572.0H1653.2V569.8H1654.2V569.9H1655.2V569.7H1656.2V571.4H1657.2V572.0H1658.2V570.8H1659.2V570.2H1660.2V571.8H1661.2V571.7H1662.2V570.3H1663.2V568.6H1664.2V569.6H1665.2V571.1H1666.2V569.3H1667.2V572.0H1668.2V570.2H1669.0V574Z" fill="#18d6ae"/><path d="M1671.9 574V571.4H1672.9V572.0H1673.9V570.2H1674.9V571.4H1675.9V571.7H1676.9V571.3H1677.9V570.8H1678.9V572.0H1679.9V572.0H1680.9V571.4H1681.9V570.8H1682.9V571.4H1683.9V571.7H1684.9V568.6H1685.9V570.7H1686.9V569.7H1687.9V570.0H1688.9V572.0H1689.9V570.8H1690.9V571.4H1691.1V574Z" fill="#18d6ae"/><path d="M1698.0 574V570.8H1699.0V571.4H1700.0V570.8H1701.0V571.5H1702.0V569.7H1703.0V569.0H1704.0V571.4H1705.0V570.2H1706.0V572.0H1707.0V571.4H1707.2V574Z" fill="#18d6ae"/><path d="M249.8 591V590.1H250.8V590.1H251.8V590.1H252.8V589.2H253.8V589.8H254.8V589.5H255.8V588.9H256.8V588.9H257.8V589.1H258.8V588.7H259.8V588.7H260.8V589.5H261.8V590.1H262.2V591Z" fill="#ffb27a"/><path d="M268.9 591V590.1H269.9V590.1H270.9V590.1H271.9V590.1H272.9V590.1H273.9V590.1H274.9V588.6H275.9V587.5H276.9V587.1H277.9V585.2H278.2V591Z" fill="#a9a0ff"/><path d="M287.8 591V590.1H288.8V587.0H289.8V588.1H290.8V586.5H291.1V591Z" fill="#a9a0ff"/><path d="M293.6 591V590.1H294.6V590.1H295.2V591Z" fill="#a9a0ff"/><path d="M297.8 591V585.2H298.8V586.9H299.8V586.9H300.8V591Z" fill="#a9a0ff"/><path d="M303.6 591V590.1H304.6V587.9H305.6V585.3H306.6V587.1H307.1V591Z" fill="#a9a0ff"/><path d="M309.6 591V590.1H310.6V586.4H311.3V591Z" fill="#a9a0ff"/><path d="M313.6 591V586.3H314.6V587.5H315.6V588.4H316.6V585.1H317.6V590.1H318.6V590.1H319.6V585.4H320.6V586.4H321.6V586.2H322.6V588.8H323.6V586.4H324.6V585.9H325.6V590.1H326.6V588.3H327.3V591Z" fill="#a9a0ff"/><path d="M329.9 591V590.1H330.9V590.1H331.9V590.1H332.9V590.1H333.9V590.1H334.9V590.1H335.9V590.1H336.9V590.1H337.9V590.1H338.9V590.1H339.9V585.6H340.9V587.8H341.9V585.1H342.9V590.1H343.6V591Z" fill="#a9a0ff"/><path d="M349.8 591V590.1H350.8V590.1H351.4V591Z" fill="#a9a0ff"/><path d="M360.5 591V590.1H361.5V586.3H362.5V588.9H363.5V590.1H364.5V590.1H365.5V590.1H366.5V590.1H367.5V590.1H368.5V590.1H369.5V590.1H370.5V590.1H371.5V590.1H372.5V590.1H373.2V591Z" fill="#a9a0ff"/><path d="M375.6 591V590.1H376.6V590.1H377.6V590.1H378.6V590.1H379.6V590.1H380.6V590.1H381.6V590.1H382.6V590.1H383.6V590.1H384.6V586.3H385.6V588.2H386.6V586.1H387.6V588.5H388.6V590.1H389.6V590.1H390.6V590.1H391.6V590.1H392.6V590.1H393.6V590.1H394.6V590.1H395.6V590.1H396.6V590.1H397.6V590.1H398.6V590.1H399.6V590.1H400.6V590.1H401.6V590.1H402.6V590.1H403.6V590.1H404.6V586.3H405.6V588.2H406.0V591Z" fill="#f07cff"/><path d="M408.6 591V590.1H409.6V590.1H410.6V590.1H411.6V590.1H412.6V590.1H413.6V590.1H414.4V591Z" fill="#f07cff"/><path d="M416.6 591V585.8H417.6V588.7H418.6V589.0H419.6V588.0H420.6V588.0H421.6V590.1H422.6V590.1H423.6V590.1H424.6V590.1H425.6V590.1H426.6V590.1H427.6V590.1H428.6V590.1H429.6V587.3H430.6V587.2H431.6V586.6H432.6V590.1H433.6V590.1H434.1V591Z" fill="#f07cff"/><path d="M436.7 591V590.1H437.7V590.1H438.7V590.1H439.7V590.1H440.7V590.1H441.7V590.1H442.7V590.1H443.7V590.1H444.7V590.1H445.7V590.1H446.7V590.1H447.7V590.1H448.7V590.1H449.7V588.3H450.7V587.9H451.7V585.8H452.7V587.5H453.7V587.9H454.7V590.1H455.7V590.1H456.7V590.1H457.7V590.1H458.7V590.1H459.7V590.1H460.7V590.1H461.7V587.1H462.7V587.6H463.7V588.6H464.7V590.1H465.7V590.1H466.7V590.1H467.7V590.1H468.7V590.1H469.7V590.1H470.7V590.1H471.7V590.1H472.7V590.1H473.7V585.9H474.7V586.9H475.7V586.8H476.7V590.1H477.7V590.1H478.7V590.1H479.7V590.1H480.7V590.1H481.7V590.1H482.7V590.1H483.7V590.1H484.7V590.1H485.7V590.1H486.7V590.1H487.7V590.1H488.7V586.1H489.7V586.8H490.7V586.8H491.7V586.6H492.7V590.1H493.7V590.1H494.7V590.1H495.7V590.1H496.7V590.1H497.7V590.1H498.7V590.1H499.7V590.1H500.7V590.1H501.7V590.1H502.7V590.1H503.7V586.5H504.7V588.1H505.7V588.8H506.3V591Z" fill="#f07cff"/><path d="M508.9 591V589.2H509.9V588.7H510.9V590.1H511.9V590.1H512.9V590.1H513.9V590.1H514.9V590.1H515.9V586.7H516.9V586.6H517.9V590.1H518.9V590.1H519.9V590.1H520.9V590.1H521.9V590.1H522.9V590.1H523.9V590.1H524.9V588.7H525.9V588.6H526.9V587.4H527.9V588.7H528.9V590.1H529.9V590.1H530.9V590.1H531.9V590.1H532.9V590.1H533.9V590.1H534.9V590.1H535.9V587.0H536.9V588.2H537.9V590.1H538.9V587.1H539.9V587.1H540.9V589.1H541.9V590.1H542.9V590.1H543.9V590.1H544.9V590.1H545.9V590.1H546.9V590.1H547.9V590.1H548.9V590.1H549.9V590.1H550.9V590.1H551.9V590.1H552.9V590.1H553.9V590.1H554.9V590.1H555.9V590.1H556.9V590.1H557.9V590.1H558.9V590.1H559.9V590.1H560.9V589.4H561.9V587.9H562.9V588.8H563.9V587.3H564.9V590.1H565.9V590.1H566.9V590.1H567.9V590.1H568.9V590.1H569.9V590.1H570.9V590.1H571.9V587.2H572.9V587.0H573.9V587.3H574.9V590.1H575.9V590.1H576.9V590.1H577.9V590.1H578.9V590.1H579.9V588.5H580.9V588.6H581.9V588.5H582.9V588.7H583.9V590.1H584.9V590.1H585.9V590.1H586.9V589.1H587.9V587.9H588.9V587.9H589.9V590.1H590.9V590.1H591.9V590.1H592.9V590.1H593.9V590.1H594.9V588.1H595.9V589.2H596.9V587.1H597.9V590.1H598.9V590.1H599.9V590.1H600.9V590.1H601.9V590.1H602.9V590.1H603.9V590.1H604.9V590.1H605.9V590.1H606.9V590.1H607.9V589.2H608.9V586.7H609.9V589.0H610.9V590.1H611.9V590.1H612.9V590.1H613.9V587.6H614.9V588.5H615.9V589.2H616.9V587.2H617.9V590.1H618.9V590.1H619.1V591Z" fill="#ffb27a"/><path d="M621.7 591V585.0H622.7V584.9H623.7V584.8H624.7V588.2H625.7V583.9H626.7V585.1H627.7V585.8H628.7V585.0H629.7V590.1H630.7V590.1H631.7V590.1H632.7V590.1H633.7V584.6H634.7V586.3H635.7V586.7H636.7V587.8H637.7V587.2H638.7V583.6H639.7V587.8H640.7V587.1H641.7V590.1H642.7V590.1H643.7V590.1H644.7V590.1H645.7V590.1H646.7V590.1H647.7V586.5H648.7V587.4H649.7V584.5H650.7V584.7H651.7V583.9H652.7V586.0H653.7V584.1H654.7V585.9H655.7V584.5H656.7V584.4H657.7V585.0H658.7V583.6H659.7V585.4H660.7V586.8H661.7V584.8H662.7V584.2H663.7V585.0H664.7V585.2H665.7V584.2H666.7V585.6H667.7V585.4H668.7V584.0H669.7V583.7H670.7V586.8H671.7V584.2H672.7V584.4H673.7V586.9H674.7V585.4H675.7V586.5H676.7V587.0H677.7V583.8H678.7V588.3H679.7V585.1H680.7V590.1H681.7V590.1H682.7V590.1H683.7V590.1H684.7V590.1H685.7V590.1H686.7V584.7H687.7V584.4H688.7V587.1H689.7V585.2H690.7V590.1H691.7V590.1H692.7V585.1H693.7V588.1H694.7V584.0H695.7V587.5H696.7V586.8H697.7V584.6H698.4V591Z" fill="#ffb27a"/><path d="M701.4 591V590.1H702.4V590.1H703.4V590.1H704.4V590.1H705.4V590.1H706.4V590.1H707.4V590.1H708.4V590.1H709.4V590.1H710.4V590.1H711.4V590.1H712.4V590.1H713.4V590.1H714.4V590.1H715.4V590.1H716.4V588.2H717.4V589.2H718.4V590.1H719.4V590.1H720.4V587.6H721.4V589.1H722.4V590.1H723.4V590.1H724.4V590.1H725.4V590.1H726.4V590.1H727.4V590.1H728.4V590.1H729.4V590.1H730.4V590.1H731.4V590.1H732.4V590.1H733.4V590.1H734.4V590.1H735.4V590.1H736.4V590.1H737.4V590.1H738.4V590.1H739.4V587.9H740.4V586.4H741.4V587.1H741.8V591Z" fill="#ffb27a"/><path d="M745.0 591V590.1H746.0V590.1H747.0V590.1H748.0V590.1H749.0V590.1H750.0V590.1H751.0V590.1H752.0V587.4H753.0V589.2H754.0V588.8H755.0V586.0H756.0V590.1H757.0V590.1H758.0V590.1H759.0V590.1H760.0V590.1H761.0V590.1H762.0V590.1H763.0V586.4H764.0V586.0H765.0V587.8H766.0V590.1H767.0V590.1H768.0V590.1H769.0V590.1H770.0V590.1H771.0V590.1H772.0V590.1H773.0V590.1H774.0V590.1H775.0V590.1H776.0V590.1H777.0V590.1H778.0V590.1H779.0V590.1H780.0V590.1H781.0V590.1H782.0V590.1H783.0V590.1H784.0V590.1H785.0V590.1H786.0V590.1H787.0V590.1H788.0V590.1H789.0V590.1H790.0V586.5H791.0V586.9H792.0V586.9H793.0V588.6H794.0V590.1H795.0V590.1H796.0V590.1H797.0V590.1H798.0V590.1H799.0V587.3H800.0V588.4H801.0V590.1H802.0V590.1H803.0V590.1H804.0V590.1H805.0V590.1H806.0V586.3H807.0V588.7H808.0V586.7H809.0V590.1H810.0V590.1H811.0V590.1H812.0V590.1H813.0V590.1H814.0V590.1H815.0V590.1H816.0V590.1H817.0V590.1H818.0V590.1H819.0V590.1H820.0V590.1H821.0V590.1H822.0V590.1H823.0V590.1H824.0V590.1H824.9V591Z" fill="#ffb27a"/><path d="M827.9 591V584.6H828.9V584.5H829.9V590.1H830.9V590.1H831.9V590.1H832.9V584.0H833.9V587.0H834.9V585.1H835.9V590.1H836.9V584.6H837.9V586.9H838.9V586.6H839.9V590.1H840.9V590.1H841.9V590.1H842.9V587.1H843.9V586.3H844.9V587.7H845.9V586.4H846.9V586.5H847.9V584.1H848.9V590.1H849.9V590.1H850.9V590.1H851.9V586.2H852.9V586.3H853.9V587.5H854.9V586.9H855.9V586.8H856.9V588.2H857.9V586.6H858.9V586.9H859.9V585.4H860.9V586.8H861.9V587.9H862.9V584.6H863.9V585.9H864.9V586.4H865.9V586.2H866.9V585.3H867.9V585.5H868.9V584.2H869.9V585.7H870.9V587.8H871.9V590.1H872.9V590.1H873.9V587.9H874.9V586.9H875.9V584.7H876.9V585.0H877.9V585.9H878.9V585.5H879.9V587.0H880.9V590.1H881.9V590.1H882.9V590.1H883.9V587.9H884.9V584.4H885.9V590.1H886.9V590.1H887.9V590.1H888.9V590.1H889.9V590.1H890.9V590.1H891.9V586.1H892.9V584.3H893.9V585.6H894.9V586.4H895.9V587.0H896.9V586.8H897.9V590.1H898.9V590.1H899.9V590.1H900.9V590.1H901.9V590.1H902.9V590.1H903.9V590.1H904.9V590.1H905.9V590.1H906.9V590.1H907.9V590.1H908.9V586.8H909.9V588.2H910.9V587.6H911.9V585.2H912.9V587.9H913.9V587.1H914.9V587.6H915.9V590.1H916.9V584.4H917.3V591Z" fill="#ffb27a"/><path d="M920.2 591V586.0H921.2V584.4H922.2V588.1H923.2V590.1H924.2V590.1H925.2V586.3H926.2V585.2H927.2V586.6H928.2V585.7H929.2V585.3H930.2V587.7H931.2V588.0H932.2V590.1H933.2V588.0H934.2V588.5H935.2V585.3H936.2V590.1H937.2V588.1H938.2V587.7H939.2V586.9H940.2V590.1H941.2V584.1H942.2V586.6H943.2V590.1H944.2V590.1H945.2V590.1H946.2V590.1H947.2V590.1H948.2V590.1H949.2V584.5H950.2V584.9H951.0V591Z" fill="#ffb27a"/><path d="M953.9 591V590.1H954.9V590.1H955.9V590.1H956.9V590.1H957.9V590.1H958.9V590.1H959.9V590.1H960.9V590.1H961.9V584.5H962.9V585.8H963.9V587.0H964.9V586.7H965.9V584.3H966.9V584.6H967.9V584.4H968.9V586.0H969.9V587.9H970.9V587.8H971.9V585.6H972.9V586.3H973.9V584.4H974.9V585.4H975.9V584.3H976.9V584.7H977.9V586.9H978.9V590.1H979.9V585.2H980.9V586.7H981.9V584.2H982.9V584.2H983.9V584.3H984.9V585.8H985.9V587.1H986.9V586.8H987.9V584.9H988.9V585.0H989.9V584.8H990.9V584.0H991.9V585.4H992.6V591Z" fill="#8fe0a0"/><path d="M995.8 591V590.1H996.8V590.1H997.8V587.8H998.8V584.6H999.8V586.3H1000.8V587.3H1001.8V584.4H1002.8V588.2H1003.8V584.3H1004.8V590.1H1005.8V585.9H1006.8V584.4H1007.8V585.9H1008.8V590.1H1009.8V590.1H1010.8V588.1H1011.8V587.3H1012.8V588.0H1013.8V584.6H1014.8V590.1H1015.8V590.1H1016.8V585.6H1017.8V588.1H1018.8V586.3H1019.8V585.3H1020.8V587.6H1021.8V585.6H1022.8V587.3H1023.8V586.9H1024.8V584.4H1025.8V590.1H1026.8V590.1H1027.8V590.1H1028.8V590.1H1029.8V590.1H1030.8V590.1H1031.8V590.1H1032.8V590.1H1033.8V590.1H1034.8V590.1H1035.8V590.1H1036.8V584.9H1037.8V587.2H1038.8V585.8H1039.8V584.6H1040.8V590.1H1041.8V590.1H1042.8V590.1H1043.8V590.1H1044.8V590.1H1045.8V586.5H1046.8V588.4H1047.8V587.6H1048.8V585.8H1049.8V590.1H1050.0V591Z" fill="#8fe0a0"/><path d="M1053.0 591V586.7H1054.0V583.8H1055.0V587.5H1056.0V587.7H1057.0V584.4H1058.0V587.8H1059.0V587.1H1060.0V587.6H1061.0V584.0H1062.0V587.3H1063.0V584.2H1064.0V587.3H1065.0V587.1H1066.0V588.1H1067.0V587.6H1068.0V583.5H1069.0V585.3H1070.0V585.8H1071.0V584.2H1072.0V590.1H1073.0V584.4H1074.0V585.1H1075.0V584.7H1076.0V587.2H1077.0V586.1H1078.0V584.4H1079.0V583.7H1080.0V583.9H1081.0V587.6H1082.0V590.1H1083.0V590.1H1084.0V590.1H1085.0V584.0H1086.0V586.1H1087.0V583.8H1088.0V585.6H1089.0V584.7H1090.0V585.5H1091.0V587.6H1092.0V584.1H1093.0V586.6H1094.0V583.7H1095.0V583.6H1096.0V587.7H1097.0V585.5H1098.0V590.1H1099.0V590.1H1100.0V590.1H1101.0V586.8H1102.0V586.1H1103.0V590.1H1104.0V590.1H1105.0V590.1H1106.0V590.1H1107.0V590.1H1108.0V590.1H1109.0V590.1H1110.0V590.1H1111.0V586.6H1112.0V585.4H1113.0V586.9H1114.0V583.6H1115.0V586.3H1116.0V587.4H1117.0V588.0H1118.0V590.1H1119.0V590.1H1120.0V590.1H1121.0V585.0H1122.0V583.9H1123.0V583.5H1124.0V590.1H1125.0V590.1H1126.0V583.6H1127.0V587.9H1128.0V585.9H1129.0V586.7H1130.0V590.1H1131.0V590.1H1132.0V583.6H1133.0V584.0H1134.0V587.3H1135.0V587.3H1136.0V587.8H1137.0V590.1H1138.0V590.1H1139.0V590.1H1140.0V590.1H1141.0V590.1H1142.0V590.1H1143.0V587.8H1144.0V584.7H1145.0V587.1H1146.0V587.7H1147.0V586.6H1148.0V585.1H1149.0V583.7H1150.0V583.5H1151.0V590.1H1152.0V590.1H1153.0V590.1H1154.0V585.7H1155.0V586.6H1156.0V584.0H1157.0V587.1H1158.0V587.7H1159.0V587.6H1159.3V591Z" fill="#8fe0a0"/><path d="M1162.5 591V587.6H1163.5V585.9H1164.5V585.6H1165.5V590.1H1166.5V590.1H1167.5V590.1H1168.5V587.2H1169.5V587.7H1170.5V590.1H1171.5V587.2H1172.5V587.9H1173.5V586.0H1174.5V586.5H1175.5V586.7H1176.5V584.6H1177.5V587.3H1178.5V590.1H1179.5V590.1H1180.5V590.1H1181.5V590.1H1182.5V590.1H1183.5V590.1H1184.5V587.1H1185.5V584.6H1186.5V584.7H1187.5V590.1H1188.5V588.0H1189.5V584.6H1190.5V586.2H1191.5V585.0H1192.5V587.5H1193.5V586.3H1194.5V590.1H1195.5V586.3H1196.5V587.6H1197.5V588.2H1198.5V587.8H1199.5V584.2H1200.5V585.2H1201.5V587.6H1202.5V585.3H1203.0V591Z" fill="#ff7aa8"/><path d="M1209.2 591V588.0H1210.2V588.0H1211.2V585.5H1212.2V584.3H1213.2V587.2H1214.2V586.1H1215.2V587.0H1216.2V587.1H1217.2V586.9H1218.2V585.8H1219.2V588.2H1220.2V587.0H1221.2V586.1H1222.2V587.2H1223.2V587.7H1224.2V584.6H1225.2V583.0H1226.2V586.5H1227.2V586.8H1228.2V590.1H1229.2V586.0H1230.2V583.8H1231.2V587.8H1232.2V587.8H1233.2V587.9H1234.2V587.2H1235.2V586.8H1236.2V584.9H1237.2V585.7H1238.2V587.2H1239.2V584.7H1240.2V585.6H1241.2V584.0H1242.2V586.7H1243.2V583.3H1244.2V584.0H1245.2V585.7H1246.2V587.5H1247.2V585.7H1248.2V587.5H1249.2V590.1H1250.2V590.1H1251.2V590.1H1252.2V590.1H1253.2V587.6H1254.2V586.5H1255.2V587.9H1256.2V590.1H1257.2V590.1H1258.2V586.1H1259.2V583.9H1260.2V587.4H1261.2V585.9H1262.2V587.3H1263.2V587.5H1264.2V585.4H1265.2V590.1H1266.2V584.8H1267.2V586.8H1268.2V587.6H1269.2V584.0H1270.2V588.2H1271.2V588.0H1272.2V586.4H1273.2V583.7H1274.2V583.0H1275.2V583.7H1276.2V585.1H1277.2V583.2H1278.2V584.9H1279.2V583.3H1280.2V585.3H1281.2V587.2H1282.2V585.5H1283.2V585.7H1284.2V586.4H1285.2V585.3H1286.2V583.1H1287.2V585.0H1288.2V584.8H1289.2V587.5H1290.2V588.1H1291.2V586.0H1292.2V585.1H1293.2V588.0H1294.2V586.7H1295.2V584.5H1296.2V584.1H1297.2V585.5H1298.2V586.9H1299.2V583.4H1300.2V585.5H1301.2V586.2H1302.2V586.7H1303.2V586.1H1304.2V584.5H1305.2V583.9H1306.2V585.7H1307.2V590.1H1308.2V583.7H1309.2V584.5H1310.2V585.8H1311.2V587.8H1312.2V586.3H1313.2V584.8H1314.2V583.9H1315.2V583.1H1316.2V586.0H1317.2V590.1H1318.2V584.6H1319.2V586.8H1320.2V587.9H1321.2V586.3H1322.2V588.0H1323.2V583.2H1324.2V585.5H1325.2V590.1H1326.0V591Z" fill="#18d6ae"/><path d="M1330.2 591V590.1H1331.2V590.1H1332.2V586.7H1333.2V585.7H1334.2V585.6H1335.2V587.9H1336.2V587.6H1337.2V586.7H1338.2V585.7H1339.2V590.1H1340.2V590.1H1341.2V590.1H1342.2V590.1H1342.3V591Z" fill="#18d6ae"/><path d="M1345.2 591V590.1H1346.2V590.1H1347.2V590.1H1348.2V587.2H1349.2V588.5H1350.2V585.9H1351.2V590.1H1352.2V585.0H1353.2V586.9H1354.2V587.9H1355.2V590.1H1356.2V590.1H1357.2V586.9H1357.2V591Z" fill="#18d6ae"/><path d="M1360.6 591V590.1H1361.6V590.1H1362.6V590.1H1363.6V587.9H1364.6V585.4H1365.6V585.6H1366.6V588.2H1367.6V587.4H1368.6V586.1H1369.6V587.9H1370.6V586.3H1371.6V587.7H1372.6V588.3H1373.6V585.7H1374.6V585.1H1375.6V587.7H1376.6V586.7H1377.6V590.1H1378.6V590.1H1379.6V587.4H1380.6V586.0H1381.6V586.2H1382.6V586.6H1383.6V588.2H1384.6V587.8H1385.6V590.1H1386.6V590.1H1387.6V590.1H1388.6V590.1H1389.6V587.7H1390.6V585.1H1391.6V587.7H1392.6V586.2H1393.6V587.1H1394.6V586.4H1395.6V587.4H1396.6V586.7H1397.6V585.7H1398.6V586.7H1399.6V588.7H1400.6V585.9H1401.6V586.8H1402.6V590.1H1403.6V585.2H1404.6V586.4H1405.6V587.1H1406.6V585.3H1407.6V588.3H1408.6V587.6H1409.6V590.1H1410.6V590.1H1411.6V590.1H1412.6V585.0H1413.6V585.8H1414.6V588.4H1415.6V584.9H1416.6V587.9H1417.6V586.6H1418.6V587.5H1419.6V585.8H1420.6V586.5H1421.6V584.6H1422.6V586.5H1423.6V588.2H1424.6V587.5H1425.6V586.4H1426.6V587.8H1427.6V587.1H1428.6V590.1H1429.6V590.1H1430.6V590.1H1431.6V590.1H1432.6V590.1H1433.6V590.1H1434.6V590.1H1435.6V590.1H1436.6V590.1H1437.6V590.1H1438.6V590.1H1439.6V585.2H1440.1V591Z" fill="#18d6ae"/><path d="M1443.0 591V590.1H1444.0V590.1H1445.0V590.1H1446.0V590.1H1447.0V590.1H1448.0V587.9H1449.0V586.5H1450.0V587.2H1451.0V587.6H1452.0V588.0H1453.0V585.7H1454.0V588.0H1455.0V590.1H1456.0V590.1H1457.0V587.8H1458.0V584.7H1459.0V585.8H1460.0V585.9H1461.0V586.6H1462.0V590.1H1463.0V588.4H1464.0V588.0H1465.0V587.9H1466.0V590.1H1467.0V590.1H1468.0V590.1H1469.0V590.1H1470.0V590.1H1471.0V590.1H1472.0V590.1H1473.0V590.1H1474.0V590.1H1475.0V590.1H1476.0V587.4H1477.0V585.9H1478.0V586.4H1479.0V586.1H1480.0V590.1H1481.0V590.1H1481.3V591Z" fill="#18d6ae"/><path d="M1484.2 591V585.6H1485.2V587.4H1486.2V588.2H1487.2V585.1H1488.2V586.6H1489.2V590.1H1490.2V586.0H1491.2V588.3H1492.2V590.1H1493.2V584.6H1494.2V585.6H1495.2V587.6H1496.2V585.2H1497.2V588.0H1498.2V585.2H1499.2V586.5H1500.2V586.9H1501.2V585.2H1502.2V585.8H1503.2V590.1H1504.2V590.1H1505.2V587.3H1506.2V588.6H1507.2V587.3H1508.2V588.4H1509.2V588.4H1510.2V586.1H1511.2V588.2H1512.2V585.9H1513.2V587.5H1514.2V585.6H1515.2V588.4H1516.2V586.2H1517.2V584.6H1518.2V586.4H1519.2V588.7H1520.2V588.5H1521.2V590.1H1522.2V590.1H1523.2V590.1H1524.2V590.1H1525.2V590.1H1526.2V590.1H1527.2V590.1H1528.2V590.1H1529.2V590.1H1530.2V590.1H1531.2V590.1H1532.2V590.1H1533.2V590.1H1534.2V585.6H1535.2V585.2H1536.2V587.7H1537.2V585.8H1538.2V590.1H1539.2V586.9H1540.2V585.4H1540.2V591Z" fill="#18d6ae"/><path d="M1545.2 591V590.1H1546.2V590.1H1547.2V590.1H1548.2V590.1H1549.2V590.1H1550.2V590.1H1551.2V590.1H1552.2V590.1H1553.2V585.6H1554.2V585.9H1555.2V587.0H1556.2V586.5H1557.2V588.1H1558.2V590.1H1559.2V590.1H1560.2V590.1H1561.2V590.1H1562.2V587.7H1563.2V586.3H1564.2V584.9H1565.2V587.6H1566.2V587.3H1567.2V588.2H1568.2V587.5H1569.2V590.1H1570.2V590.1H1571.2V590.1H1572.2V590.1H1573.2V590.1H1574.2V590.1H1575.2V590.1H1576.2V586.2H1577.2V586.1H1578.2V588.2H1578.9V591Z" fill="#18d6ae"/><path d="M1582.0 591V590.1H1583.0V590.1H1584.0V590.1H1585.0V590.1H1586.0V590.1H1587.0V590.1H1588.0V590.1H1589.0V590.1H1590.0V590.1H1591.0V588.1H1592.0V588.0H1593.0V590.1H1594.0V590.1H1595.0V590.1H1596.0V590.1H1597.0V590.1H1598.0V586.3H1599.0V587.9H1600.0V586.7H1601.0V586.5H1602.0V591Z" fill="#18d6ae"/><path d="M1604.9 591V590.1H1605.9V590.1H1606.9V590.1H1607.9V587.9H1608.9V588.6H1609.9V585.5H1610.9V586.3H1611.9V586.5H1612.9V587.8H1613.9V585.4H1614.9V587.4H1615.9V590.1H1616.9V588.0H1617.9V587.3H1618.7V591Z" fill="#18d6ae"/><path d="M1621.6 591V588.4H1622.6V586.0H1623.6V585.8H1624.6V588.1H1625.6V586.4H1626.6V585.6H1626.8V591Z" fill="#18d6ae"/><path d="M1630.2 591V586.3H1631.2V584.9H1632.2V587.9H1633.2V587.9H1634.2V587.6H1635.2V585.2H1636.2V587.6H1637.2V588.0H1638.2V587.8H1639.2V587.7H1640.2V585.0H1641.2V587.0H1642.2V585.5H1643.2V590.1H1644.2V588.3H1645.2V585.8H1646.2V585.4H1647.2V584.5H1648.2V587.8H1649.2V588.6H1650.2V585.5H1651.2V590.1H1652.2V590.1H1653.2V590.1H1654.2V590.1H1655.2V586.6H1656.2V586.9H1657.2V586.9H1658.2V585.5H1659.2V585.2H1660.2V586.7H1661.2V588.0H1662.2V587.0H1663.2V590.1H1664.2V590.1H1665.2V590.1H1666.2V590.1H1667.2V590.1H1668.2V590.1H1669.0V591Z" fill="#18d6ae"/><path d="M1671.9 591V590.1H1672.9V590.1H1673.9V590.1H1674.9V584.9H1675.9V586.9H1676.9V588.7H1677.9V587.6H1678.9V590.1H1679.9V586.7H1680.9V588.2H1681.9V587.5H1682.9V590.1H1683.9V590.1H1684.9V587.1H1685.9V588.7H1686.9V587.5H1687.9V587.1H1688.9V585.7H1689.9V586.5H1690.9V587.7H1691.1V591Z" fill="#18d6ae"/><path d="M1693.8 591V585.9H1694.8V587.5H1695.8V590.1H1696.8V590.1H1697.8V590.1H1698.1V591Z" fill="#18d6ae"/><path d="M1701.0 591V590.1H1702.0V586.0H1703.0V584.5H1704.0V587.5H1705.0V585.4H1706.0V584.9H1707.0V585.7H1707.2V591Z" fill="#18d6ae"/><polygon points="297.5,608 297.5,599.7 298.7,599.2 300.2,602.0 301.3,600.3 302.4,602.0 303.9,600.8 304.8,600.3 304.9,608" fill="#a6d27c"/><polygon points="309.1,608 309.1,600.8 310.3,600.0 311.6,599.9 312.7,608" fill="#a6d27c"/><polygon points="317.7,608 317.7,601.3 319.1,601.8 320.2,599.8 321.3,599.8 322.2,601.8 323.2,598.7 324.1,602.4 324.9,599.7 326.2,598.9 327.6,608" fill="#a6d27c"/><polygon points="329.3,608 329.3,600.5 330.6,602.0 332.0,600.7 333.1,598.8 334.5,600.9 335.9,602.1 336.7,600.2 337.9,598.8 339.1,599.8 340.0,601.2 341.5,600.5 342.7,601.1 344.1,600.0 344.7,608" fill="#a6d27c"/><polygon points="349.5,608 349.5,600.1 350.8,601.1 351.6,602.0 352.7,599.9 352.7,608" fill="#a6d27c"/><polygon points="363.7,608 363.7,598.7 365.1,599.5 366.1,599.9 366.9,600.4 367.6,608" fill="#a6d27c"/><polygon points="1611.3,608 1611.3,600.0 1612.5,600.2 1613.4,600.2 1614.5,600.8 1615.5,598.8 1615.7,608" fill="#a6d27c"/><polygon points="1624.5,608 1624.5,601.1 1625.5,598.4 1626.6,599.8 1627.9,601.4 1629.0,600.4 1629.3,608" fill="#a6d27c"/><polygon points="1635.6,608 1635.6,598.6 1637.0,601.9 1638.1,601.9 1639.5,602.4 1640.5,599.3 1641.5,599.4 1643.0,600.7 1643.2,608" fill="#a6d27c"/><polygon points="1666.2,608 1666.2,599.6 1667.2,598.9 1668.1,599.6 1668.6,608" fill="#a6d27c"/><path d="M249.4 693V690.8H250.4V691.2H251.4V691.0H252.4V690.8H253.4V690.8H254.4V690.4H255.4V690.8H256.4V691.0H257.4V690.9H258.4V690.4H259.4V690.4H260.4V690.6H261.4V690.4H261.9V693Z" fill="#a6d27c"/><path d="M375.9 693V690.4H376.9V690.9H377.9V690.8H378.9V690.4H379.9V690.6H380.9V690.8H381.9V690.6H382.9V690.8H383.9V691.0H384.9V690.8H385.9V691.0H386.9V690.6H387.9V690.9H388.9V690.6H389.9V690.8H390.9V691.2H391.9V691.2H392.9V691.0H393.9V690.4H394.9V690.4H395.9V691.2H396.9V690.4H397.9V690.6H398.9V691.0H399.9V690.9H400.9V690.9H401.9V690.8H402.9V690.8H403.9V690.9H404.9V690.9H405.9V690.6H406.9V690.9H407.9V691.0H408.9V690.6H409.9V690.4H410.9V691.0H411.9V691.0H412.9V691.2H413.9V691.0H414.9V690.6H415.9V690.6H416.9V691.0H417.9V690.8H418.9V690.9H419.9V691.2H420.9V690.6H421.9V691.0H422.9V691.0H423.9V690.4H424.9V690.6H425.9V691.0H426.9V690.9H427.9V690.9H428.9V690.9H429.9V691.2H430.9V690.9H431.9V691.0H432.9V690.8H433.9V691.2H434.9V690.8H435.9V691.0H436.9V690.8H437.9V690.8H438.9V691.2H439.9V690.8H440.9V690.4H441.9V690.8H442.9V691.2H443.9V691.2H444.9V691.0H445.9V690.8H446.9V690.9H447.9V691.0H448.9V691.2H449.9V690.6H450.9V691.2H451.9V690.8H452.9V690.4H453.9V690.8H454.9V690.6H455.9V690.4H456.9V690.6H457.9V691.2H458.9V691.0H459.9V690.8H460.9V690.9H461.9V691.0H462.9V691.2H463.9V690.9H464.9V690.6H465.9V691.2H466.9V691.2H467.9V690.6H468.9V691.2H469.9V690.4H470.9V690.4H471.9V690.6H472.9V690.4H473.9V690.8H474.9V690.6H475.9V691.0H476.9V690.8H477.9V691.0H478.9V690.6H479.9V690.8H480.9V690.9H481.9V690.9H482.9V690.8H483.9V691.0H484.9V691.0H485.9V691.2H486.9V690.4H487.9V690.6H488.9V690.4H489.9V690.4H490.9V690.9H491.9V690.6H492.9V690.8H493.9V691.0H494.9V690.9H495.9V690.6H496.9V690.4H497.9V690.9H498.9V691.2H499.9V690.6H500.9V690.9H501.9V690.6H502.9V691.2H503.9V691.2H504.9V690.9H505.9V690.9H506.9V690.4H507.9V690.4H508.9V690.4H509.9V690.9H510.2V693Z" fill="#a6d27c"/><path d="M953.9 693V690.4H954.9V690.9H955.9V690.8H956.9V690.6H957.9V690.8H958.9V690.8H959.9V690.8H960.9V690.8H961.9V690.6H962.9V690.9H963.9V691.2H964.9V690.4H965.9V690.6H966.9V691.0H967.9V691.2H968.9V691.0H969.9V690.4H970.9V690.4H971.9V690.4H972.9V690.4H973.9V691.0H974.9V691.0H975.9V691.0H976.9V691.0H977.9V690.8H978.9V690.4H979.9V690.9H980.9V691.0H981.9V690.9H982.9V690.4H983.9V690.8H984.9V690.8H985.9V691.2H986.9V690.4H987.9V691.0H988.9V691.2H989.9V691.0H990.9V690.8H991.9V691.2H992.9V691.2H993.9V690.8H994.9V691.2H995.9V691.2H996.9V690.8H997.9V690.4H998.9V690.8H999.9V690.6H1000.9V691.2H1001.9V690.8H1002.9V691.0H1003.9V691.0H1004.9V691.2H1005.9V690.6H1006.9V690.8H1007.9V691.0H1008.9V690.9H1009.9V690.9H1010.9V690.4H1011.9V690.8H1012.9V690.8H1013.9V690.8H1014.9V691.2H1015.9V690.4H1016.9V690.6H1017.9V691.2H1018.9V690.9H1019.9V691.2H1020.9V690.6H1021.9V690.8H1022.9V691.0H1023.9V691.0H1024.9V690.9H1025.9V691.2H1026.9V691.2H1027.9V691.2H1028.9V691.2H1029.9V690.8H1030.9V690.8H1031.9V690.4H1032.9V690.8H1033.9V690.9H1034.9V691.2H1035.9V690.6H1036.9V690.8H1037.9V690.6H1038.9V690.9H1039.9V691.2H1040.9V690.8H1041.9V690.4H1042.9V690.9H1043.9V690.8H1044.9V690.6H1045.9V691.2H1046.9V690.8H1047.9V690.6H1048.9V690.6H1049.9V690.8H1050.9V691.2H1051.9V690.8H1052.9V691.2H1053.9V690.8H1054.9V690.4H1055.9V691.2H1056.9V690.8H1057.9V690.4H1058.9V690.8H1059.9V690.6H1060.9V690.6H1061.9V691.2H1062.9V691.2H1063.9V690.4H1064.9V690.6H1065.9V690.8H1066.9V690.9H1067.9V691.2H1068.9V690.6H1069.9V690.8H1070.9V690.4H1071.9V690.6H1072.9V690.9H1073.9V690.4H1074.9V691.2H1075.9V690.8H1076.9V691.0H1077.9V690.9H1078.9V690.6H1079.9V690.8H1080.9V690.8H1081.9V691.2H1082.9V690.9H1083.9V690.4H1084.9V690.6H1085.9V690.6H1086.9V691.2H1087.9V690.9H1088.9V690.9H1089.9V690.6H1090.9V691.0H1091.9V690.6H1092.9V690.8H1093.9V690.6H1094.9V690.4H1095.9V691.2H1096.9V690.8H1097.9V690.8H1098.9V690.6H1099.9V690.4H1100.9V690.4H1101.9V690.6H1102.9V691.0H1103.9V690.6H1104.9V690.4H1105.9V690.8H1106.9V690.9H1107.9V690.4H1108.9V690.6H1109.9V691.2H1110.9V690.4H1111.9V690.9H1112.9V690.4H1113.9V691.2H1114.9V691.0H1115.9V690.9H1116.9V690.4H1117.9V690.4H1118.9V691.2H1119.9V691.0H1120.9V691.2H1121.9V690.4H1122.9V691.0H1123.9V690.9H1124.9V691.0H1125.9V690.4H1126.9V690.8H1127.9V691.0H1128.9V690.4H1129.9V690.4H1130.9V690.4H1131.9V690.6H1132.9V690.6H1133.9V690.9H1134.9V690.6H1135.9V690.6H1136.9V691.0H1137.9V691.2H1138.9V691.0H1139.9V690.8H1140.9V690.6H1141.9V690.8H1142.9V690.9H1143.9V691.0H1144.9V690.8H1145.9V691.0H1146.9V690.6H1147.9V690.9H1148.9V690.9H1149.9V691.2H1150.9V690.6H1151.9V690.9H1152.9V690.8H1153.9V691.2H1154.9V691.2H1155.9V691.0H1156.9V691.2H1157.9V690.8H1158.9V690.6H1159.9V690.4H1160.1V693Z" fill="#a6d27c"/><path d="M1207.2 693V690.4H1208.2V691.2H1209.2V690.9H1210.2V690.9H1211.2V691.2H1212.2V691.0H1213.2V690.8H1214.2V691.0H1215.2V690.9H1216.2V690.6H1217.2V690.4H1218.2V691.2H1219.2V690.6H1220.2V691.2H1221.2V690.8H1222.2V690.6H1223.2V691.0H1224.2V690.8H1225.2V691.2H1226.2V691.0H1227.2V691.0H1228.2V690.9H1229.2V691.0H1230.2V691.2H1231.2V691.2H1232.2V690.9H1233.2V691.2H1234.2V691.0H1235.2V690.8H1236.2V690.4H1237.2V690.6H1238.2V690.9H1239.2V691.0H1240.2V691.0H1241.2V690.9H1242.2V690.4H1243.2V690.4H1244.2V690.8H1245.2V690.4H1246.2V691.0H1247.2V690.4H1248.2V690.6H1249.2V690.8H1250.2V690.9H1251.2V690.9H1252.2V690.6H1253.2V690.6H1254.2V691.0H1255.2V691.0H1256.2V690.6H1257.2V690.9H1258.2V691.0H1259.2V691.0H1260.2V690.4H1261.2V690.4H1262.2V691.2H1263.2V690.4H1264.2V691.2H1265.2V691.0H1266.2V690.9H1267.2V691.2H1268.2V690.9H1269.2V690.9H1270.2V691.2H1271.2V690.4H1272.2V690.9H1273.2V690.4H1274.2V690.8H1275.2V690.6H1276.2V691.0H1277.2V690.8H1278.2V691.2H1279.2V691.2H1280.2V690.9H1281.2V690.8H1282.2V691.0H1283.2V691.0H1284.2V691.0H1285.2V691.2H1286.2V691.2H1287.2V691.2H1288.2V690.4H1289.2V690.8H1290.2V691.2H1291.2V691.0H1292.2V691.0H1293.2V690.8H1294.2V690.4H1295.2V691.2H1296.2V690.8H1297.2V690.4H1298.2V690.8H1299.2V691.2H1300.2V691.2H1301.2V690.8H1302.2V690.9H1303.2V691.0H1304.2V691.0H1305.2V690.6H1306.2V690.8H1307.2V690.4H1308.2V690.9H1309.2V690.8H1310.2V690.6H1311.2V690.9H1312.2V690.4H1313.2V691.0H1314.2V690.8H1315.2V691.2H1316.2V690.9H1317.2V690.8H1318.2V690.9H1319.2V690.9H1320.2V690.4H1321.2V691.2H1322.2V691.0H1323.2V690.8H1324.2V690.9H1325.2V690.8H1326.2V690.9H1327.2V691.0H1328.2V690.4H1329.2V690.8H1330.2V690.9H1331.2V690.8H1332.2V690.6H1333.2V691.2H1334.2V691.2H1335.2V690.8H1336.2V691.2H1337.2V690.6H1338.2V690.8H1339.2V690.8H1340.2V690.9H1341.2V690.8H1342.2V690.9H1343.2V690.8H1344.2V691.2H1345.2V691.0H1346.2V690.6H1347.2V690.4H1348.2V690.4H1349.2V691.0H1350.2V690.6H1351.2V690.8H1352.2V691.0H1353.2V691.2H1354.2V690.8H1355.2V690.8H1356.2V690.9H1357.2V690.8H1358.2V690.4H1359.2V691.2H1360.2V690.6H1361.2V690.4H1362.2V690.4H1363.2V690.4H1364.2V691.2H1365.2V690.8H1366.2V690.4H1367.2V691.0H1368.2V690.9H1369.2V690.8H1370.2V690.6H1371.2V691.0H1372.2V690.9H1373.2V690.9H1374.2V690.8H1375.2V690.8H1376.2V690.9H1377.2V690.6H1378.2V690.8H1379.2V690.6H1380.2V690.6H1381.2V691.0H1382.2V691.0H1383.2V690.9H1384.2V690.4H1385.2V690.6H1386.2V691.2H1387.2V690.8H1388.2V690.4H1389.2V691.2H1390.2V690.9H1391.2V690.6H1392.2V690.8H1393.2V690.9H1394.2V691.0H1395.2V690.8H1396.2V691.2H1397.2V690.8H1398.2V690.8H1399.2V690.4H1400.2V691.0H1401.2V690.4H1402.2V690.4H1403.2V690.4H1404.2V691.2H1405.2V691.2H1406.2V690.4H1407.2V691.0H1408.2V690.9H1409.2V690.8H1410.2V691.0H1411.2V690.8H1412.2V690.9H1413.2V690.6H1414.2V690.4H1415.2V690.4H1416.2V690.8H1417.2V690.4H1418.2V690.8H1419.2V690.9H1420.2V690.8H1421.2V691.2H1422.2V691.0H1423.2V691.2H1424.2V690.9H1425.2V690.6H1426.2V691.2H1427.2V690.6H1428.2V690.4H1429.2V690.8H1430.2V690.8H1431.2V690.4H1432.2V690.9H1433.2V690.6H1434.2V690.8H1435.2V690.4H1436.2V691.0H1437.2V691.0H1438.2V690.4H1439.2V690.6H1440.2V690.6H1441.2V690.6H1442.2V690.8H1443.2V690.9H1444.2V690.9H1445.2V690.8H1446.2V690.9H1447.2V690.8H1448.2V690.4H1449.2V690.8H1450.2V691.2H1451.2V690.8H1452.2V690.6H1453.2V690.6H1454.2V691.0H1455.2V690.4H1456.2V691.2H1457.2V691.0H1458.2V691.2H1459.2V690.9H1460.2V690.9H1461.2V691.2H1462.2V691.0H1463.2V691.0H1464.2V690.8H1465.2V690.9H1466.2V690.8H1467.2V690.6H1468.2V690.8H1469.2V690.6H1470.2V691.2H1471.2V691.2H1472.2V690.4H1473.2V691.2H1474.2V691.0H1475.2V690.4H1476.2V691.0H1477.2V690.4H1478.2V691.2H1479.2V690.8H1480.2V691.0H1481.2V690.6H1482.2V690.4H1483.2V690.9H1484.2V690.9H1485.2V691.2H1486.2V691.0H1487.2V690.6H1488.2V690.9H1489.2V690.4H1490.2V690.8H1491.2V691.0H1492.2V691.2H1493.2V691.2H1494.2V691.2H1495.2V690.8H1496.2V690.9H1497.2V691.2H1498.2V690.4H1499.2V690.8H1500.2V690.4H1501.2V690.4H1502.2V690.9H1503.2V690.9H1504.2V690.8H1505.2V691.0H1506.2V690.9H1507.2V691.0H1508.2V690.8H1509.2V691.0H1510.2V691.0H1511.2V690.8H1512.2V690.4H1513.2V690.9H1514.2V691.0H1515.2V690.6H1516.2V690.4H1517.2V690.4H1518.2V690.8H1519.2V690.6H1520.2V691.2H1521.2V691.0H1522.2V690.9H1523.2V690.9H1524.2V690.4H1525.2V690.9H1526.2V690.6H1527.2V691.0H1528.2V690.4H1529.2V691.2H1530.2V690.6H1531.2V690.9H1532.2V690.8H1533.2V691.0H1534.2V690.6H1535.2V690.9H1536.2V691.2H1537.2V691.2H1538.2V690.8H1539.2V690.4H1540.2V690.8H1541.2V690.4H1542.2V690.4H1543.2V690.9H1544.2V690.9H1545.2V690.8H1546.2V691.0H1547.2V690.6H1548.2V690.4H1549.2V691.0H1550.2V690.9H1551.2V691.0H1552.2V690.4H1553.2V690.4H1554.2V690.9H1555.2V690.6H1556.2V690.8H1557.2V690.6H1558.2V690.9H1559.2V690.4H1560.2V690.8H1561.2V691.2H1562.2V691.2H1563.2V690.6H1564.2V691.2H1565.2V690.6H1566.2V690.6H1567.2V690.4H1568.2V690.8H1569.2V690.4H1570.2V690.4H1571.2V690.9H1572.2V690.8H1573.2V691.0H1574.2V690.8H1575.2V690.4H1576.2V690.6H1577.2V690.6H1578.2V691.0H1579.2V690.8H1580.2V691.2H1581.2V690.8H1582.2V691.0H1583.2V690.9H1584.2V690.8H1585.2V691.2H1586.2V690.4H1587.2V690.9H1588.2V690.9H1589.2V690.4H1590.2V690.4H1591.2V691.0H1592.2V690.4H1593.2V690.8H1594.2V690.4H1595.2V690.6H1596.2V690.4H1597.2V691.0H1598.2V690.9H1599.2V690.6H1600.2V690.8H1601.2V690.6H1602.2V691.0H1603.2V690.4H1604.2V691.0H1605.2V690.9H1606.2V690.8H1607.2V690.9H1608.2V691.2H1609.2V691.2H1610.2V690.9H1611.2V690.9H1612.2V690.4H1613.2V691.0H1614.2V690.6H1615.2V691.0H1616.2V691.0H1617.2V690.8H1618.2V690.4H1619.2V690.9H1620.2V691.2H1621.2V690.9H1622.2V690.6H1623.2V691.0H1624.2V691.2H1625.2V690.9H1626.2V690.9H1627.2V690.6H1628.2V690.8H1629.2V690.9H1630.2V690.4H1631.2V690.8H1632.2V690.9H1633.2V690.4H1634.2V690.4H1635.2V690.4H1636.2V690.6H1637.2V690.9H1638.2V690.9H1639.2V690.4H1640.2V690.4H1641.2V691.2H1642.2V691.0H1643.2V690.9H1644.2V691.0H1645.2V690.9H1646.2V691.0H1647.2V690.8H1648.2V690.9H1649.2V690.9H1650.2V691.2H1651.2V690.4H1652.2V690.4H1653.2V690.9H1654.2V690.9H1655.2V691.2H1656.2V690.6H1657.2V690.9H1658.2V691.0H1659.2V691.0H1660.2V690.9H1661.2V691.2H1662.2V690.4H1663.2V690.9H1664.2V690.9H1665.2V691.2H1666.2V690.6H1667.2V691.0H1668.2V690.8H1669.2V690.9H1670.2V691.2H1671.2V690.6H1672.2V690.8H1673.2V690.8H1674.2V690.9H1675.2V690.9H1676.2V690.6H1677.2V690.6H1678.2V690.4H1679.2V691.2H1680.2V690.9H1681.2V690.8H1682.2V690.6H1683.2V690.9H1684.2V690.6H1685.2V691.0H1686.2V690.8H1687.2V690.8H1688.2V690.9H1689.2V691.0H1690.2V691.0H1691.2V690.9H1692.2V690.6H1693.2V690.4H1694.2V691.2H1695.2V691.0H1696.2V691.0H1697.2V691.0H1698.2V691.2H1699.2V691.0H1700.2V690.4H1701.2V690.6H1702.2V691.0H1703.2V691.0H1704.2V690.6H1705.2V690.4H1706.2V690.8H1707.2V690.9H1707.4V693Z" fill="#a6d27c"/><path d="M266.8 710V707.8H267.8V707.9H268.8V707.4H269.8V708.2H270.8V708.0H271.8V707.4H272.8V707.4H273.8V708.0H274.8V707.8H275.8V707.6H276.8V707.8H277.8V708.0H278.8V708.2H279.8V707.4H280.8V707.9H281.8V708.2H282.8V708.2H283.8V707.9H284.8V707.9H285.8V708.2H286.8V707.8H287.8V708.0H288.8V707.6H289.8V707.6H290.8V708.0H291.8V707.4H292.8V708.2H293.8V707.6H294.8V707.6H295.8V708.0H296.8V707.8H297.8V708.0H298.8V707.9H299.8V708.0H300.8V707.6H301.8V707.9H302.8V707.8H303.8V708.2H304.8V707.8H305.8V707.9H306.8V707.8H307.8V708.0H308.8V707.9H309.8V708.2H310.8V707.8H311.8V707.8H312.8V708.0H313.8V708.0H314.8V707.6H315.8V707.6H316.8V708.2H317.8V707.4H318.8V707.8H319.8V707.4H320.8V708.0H321.8V707.6H322.8V708.2H323.8V707.9H324.8V708.0H325.8V708.2H326.8V708.0H327.8V707.6H328.8V707.4H329.8V707.4H330.8V707.9H331.8V707.9H332.8V707.4H333.8V708.2H334.8V707.8H335.8V708.2H336.8V707.6H337.8V708.2H338.8V707.9H339.8V707.4H340.8V707.8H341.8V707.8H342.8V707.8H343.8V707.9H344.8V707.9H345.8V707.9H346.8V707.6H347.8V708.2H348.8V708.0H349.8V707.8H350.8V708.0H351.8V708.2H352.8V708.0H353.8V707.9H354.8V707.4H355.8V707.6H356.8V707.8H357.8V708.0H358.8V707.4H359.8V708.2H360.8V707.4H361.8V708.2H362.8V707.6H363.8V707.4H364.8V707.4H365.8V708.2H366.8V707.6H367.8V708.0H368.8V708.2H369.8V707.6H370.8V707.8H371.8V707.8H372.8V707.6H373.8V707.4H374.2V710Z" fill="#a6d27c"/><path d="M508.9 710V707.9H509.9V707.9H510.9V708.2H511.9V707.8H512.9V707.6H513.9V707.9H514.9V707.6H515.9V708.2H516.9V707.9H517.9V708.0H518.9V707.8H519.9V708.0H520.9V707.4H521.9V708.0H522.9V708.0H523.9V708.0H524.9V708.2H525.9V707.4H526.9V707.4H527.9V707.4H528.9V707.6H529.9V707.9H530.9V708.0H531.9V707.8H532.9V707.8H533.9V707.9H534.9V708.2H535.9V707.8H536.9V707.8H537.9V707.4H538.9V708.2H539.9V707.6H540.9V708.2H541.9V707.8H542.9V707.6H543.9V707.4H544.9V708.2H545.9V707.8H546.9V707.4H547.9V708.0H548.9V707.8H549.9V707.8H550.9V708.0H551.9V708.0H552.9V707.6H553.9V707.8H554.9V708.0H555.9V707.6H556.9V707.8H557.9V707.9H558.9V707.9H559.9V708.2H560.9V708.0H561.9V708.2H562.9V707.8H563.9V707.4H564.9V707.9H565.9V707.6H566.9V708.2H567.9V707.6H568.9V707.6H569.9V707.6H570.9V708.0H571.9V707.6H572.9V708.0H573.9V708.0H574.9V708.2H575.9V708.2H576.9V707.9H577.9V708.0H578.9V707.9H579.9V708.0H580.9V708.2H581.9V708.2H582.9V707.8H583.9V708.0H584.9V708.2H585.9V708.2H586.9V707.8H587.9V707.8H588.9V707.4H589.9V707.4H590.9V707.4H591.9V708.0H592.9V707.8H593.9V707.9H594.9V707.4H595.9V707.4H596.9V708.0H597.9V708.0H598.9V707.6H599.9V707.4H600.9V707.6H601.9V707.8H602.9V707.8H603.9V708.0H604.9V708.2H605.9V707.9H606.9V707.6H607.9V708.0H608.9V707.9H609.9V708.2H610.9V707.4H611.9V708.0H612.9V707.8H613.9V708.2H614.9V708.2H615.9V707.4H616.9V707.4H617.9V707.4H618.9V707.9H619.9V707.4H620.9V707.6H621.9V707.6H622.9V707.6H623.9V707.6H624.9V708.0H625.9V707.4H626.9V707.4H627.9V708.2H628.9V707.4H629.9V707.9H630.9V707.6H631.9V708.2H632.9V707.8H633.9V707.6H634.9V707.8H635.9V707.6H636.9V708.2H637.9V708.0H638.9V707.9H639.9V707.8H640.9V707.4H641.9V707.8H642.9V708.2H643.9V707.8H644.9V708.0H645.9V707.6H646.9V707.6H647.9V707.9H648.9V707.6H649.9V707.8H650.9V708.0H651.9V707.8H652.9V707.9H653.9V707.9H654.9V707.9H655.9V707.6H656.9V708.2H657.9V707.8H658.9V708.2H659.9V707.9H660.9V707.4H661.9V708.2H662.9V707.8H663.9V707.8H664.9V707.8H665.9V708.0H666.9V707.6H667.9V708.2H668.9V707.9H669.9V708.2H670.9V708.0H671.9V707.6H672.9V708.2H673.9V708.0H674.9V708.2H675.9V707.4H676.9V707.9H677.9V707.8H678.9V707.4H679.9V707.9H680.9V708.2H681.9V708.0H682.9V707.4H683.9V708.0H684.9V707.8H685.9V707.9H686.9V707.4H687.9V707.8H688.9V707.8H689.9V707.8H690.9V708.2H691.9V708.0H692.9V708.0H693.9V707.9H694.9V708.2H695.9V707.9H696.9V707.6H697.9V707.4H698.9V707.4H699.9V707.8H700.9V708.0H701.9V708.2H702.9V707.8H703.9V707.4H704.9V708.0H705.9V708.2H706.9V707.4H707.9V707.8H708.9V707.4H709.9V707.6H710.9V707.8H711.9V707.6H712.9V708.0H713.9V708.2H714.9V707.4H715.9V707.6H716.9V708.2H717.9V707.8H718.9V707.8H719.9V708.0H720.9V707.6H721.9V707.4H722.9V707.4H723.9V708.2H724.9V707.6H725.9V708.0H726.9V707.8H727.9V707.9H728.9V708.0H729.9V707.6H730.9V707.9H731.9V708.2H732.9V707.8H733.9V707.6H734.9V708.0H735.9V707.4H736.9V707.4H737.9V707.6H738.9V707.9H739.9V707.4H740.9V708.2H741.9V707.9H742.9V707.6H743.9V708.2H744.9V708.2H745.9V707.9H746.9V707.8H747.9V707.6H748.9V708.0H749.9V707.4H750.9V707.6H751.9V707.9H752.9V708.2H753.9V707.8H754.9V708.2H755.9V707.9H756.9V707.6H757.9V708.0H758.9V708.0H759.9V707.9H760.9V707.6H761.9V707.6H762.9V708.0H763.9V707.6H764.9V707.9H765.9V707.9H766.9V707.6H767.9V707.4H768.9V707.9H769.9V707.8H770.9V707.4H771.9V708.0H772.9V707.9H773.9V707.9H774.9V707.4H775.9V707.8H776.9V708.0H777.9V707.6H778.9V708.0H779.9V707.6H780.9V708.0H781.9V707.8H782.9V708.0H783.9V708.0H784.9V707.4H785.9V707.9H786.9V708.0H787.9V707.8H788.9V707.9H789.9V707.8H790.9V707.8H791.9V707.8H792.9V708.0H793.9V707.9H794.9V708.2H795.9V707.8H796.9V707.4H797.9V707.9H798.9V708.0H799.9V707.6H800.9V707.9H801.9V707.4H802.9V708.0H803.9V707.8H804.9V707.9H805.9V708.0H806.9V708.0H807.9V707.9H808.9V707.4H809.9V707.8H810.9V707.6H811.9V707.6H812.9V707.6H813.9V708.0H814.9V708.0H815.9V708.0H816.9V707.4H817.9V707.9H818.9V707.4H819.9V707.6H820.9V707.9H821.9V708.2H822.9V707.4H823.9V707.4H824.9V707.4H825.9V707.8H826.9V708.0H827.9V708.2H828.9V707.9H829.9V708.2H830.9V708.0H831.9V708.2H832.9V707.9H833.9V707.6H834.9V707.8H835.9V707.9H836.9V707.6H837.9V708.0H838.9V707.9H839.9V707.9H840.9V707.9H841.9V707.4H842.9V707.4H843.9V708.2H844.9V707.4H845.9V707.4H846.9V707.6H847.9V707.4H848.9V707.4H849.9V708.2H850.9V707.6H851.9V708.2H852.9V708.2H853.9V708.0H854.9V707.6H855.9V707.9H856.9V707.6H857.9V708.2H858.9V707.4H859.9V707.6H860.9V707.8H861.9V708.0H862.9V708.0H863.9V707.8H864.9V707.6H865.9V707.9H866.9V707.8H867.9V708.2H868.9V707.9H869.9V707.9H870.9V708.2H871.9V707.8H872.9V707.4H873.9V707.9H874.9V707.6H875.9V707.9H876.9V707.4H877.9V708.2H878.9V707.4H879.9V708.0H880.9V707.6H881.9V707.4H882.9V707.4H883.9V707.4H884.9V707.9H885.9V707.9H886.9V707.9H887.9V707.9H888.9V707.6H889.9V708.2H890.9V708.0H891.9V708.2H892.9V708.2H893.9V707.6H894.9V707.8H895.9V707.9H896.9V707.6H897.9V708.0H898.9V707.4H899.9V707.8H900.9V707.9H901.9V707.9H902.9V708.0H903.9V707.4H904.9V708.0H905.9V707.4H906.9V707.4H907.9V707.6H908.9V707.6H909.9V707.9H910.9V708.0H911.9V707.6H912.9V708.2H913.9V707.6H914.9V708.0H915.9V708.2H916.9V708.0H917.9V707.9H918.9V707.6H919.9V707.6H920.9V707.8H921.9V708.0H922.9V707.6H923.9V707.4H924.9V707.8H925.9V707.6H926.9V707.8H927.9V708.0H928.9V708.2H929.9V707.9H930.9V708.2H931.9V708.2H932.9V707.4H933.9V707.9H934.9V708.0H935.9V708.2H936.9V707.6H937.9V708.2H938.9V708.0H939.9V708.0H940.9V707.9H941.9V707.9H942.9V707.4H943.9V708.2H944.9V707.6H945.9V707.4H946.9V708.0H947.9V707.8H948.9V707.4H949.9V708.0H950.9V707.6H951.9V707.4H952.9V707.9H953.9V707.9H954.9V708.0H955.9V708.0H956.9V707.8H957.7V710Z" fill="#a6d27c"/><path d="M1162.8 710V708.0H1163.8V707.8H1164.8V707.8H1165.8V708.0H1166.8V708.0H1167.8V707.9H1168.8V707.8H1169.8V708.0H1170.8V707.6H1171.8V707.9H1172.8V707.6H1173.8V708.0H1174.8V707.8H1175.2V710Z" fill="#a6d27c"/><path d="M1190.6 710V707.9H1191.6V708.2H1192.6V707.6H1193.6V707.9H1194.6V707.6H1195.6V707.8H1196.6V707.4H1197.6V708.2H1198.6V707.6H1199.6V707.6H1200.6V707.4H1201.6V707.6H1202.6V708.2H1203.6V707.6H1204.2V710Z" fill="#a6d27c"/><path d="M1177.8 710V707.9H1178.8V707.6H1179.8V708.2H1180.8V708.0H1181.8V707.9H1182.8V707.9H1183.8V707.8H1184.8V708.2H1185.8V707.6H1186.8V708.2H1187.8V708.2H1188.3V710Z" fill="#3f6a2c"/></svg>
<svg class="ic" style="left:37.1px;top:11.2px" width="10" height="12" viewBox="0 0 10 12"><path d="M2.1 6.3 V3.6 C2.1 1.3 5.6 1.1 6.2 2.9" fill="none" stroke="#b9b9b9" stroke-width="1.5"/><rect x="0.7" y="5.8" width="8.6" height="5.8" rx="0.6" fill="#b9b9b9"/><path d="M4.1 7.4 h1.8 l-.55 2.7 h-.7z" fill="#1e1e1e"/></svg>
<svg class="ic" style="left:83.5px;top:13px" width="13" height="10" viewBox="0 0 13 10"><g fill="none" stroke="#bdbdbd" stroke-width="1"><rect x="0.9" y="0.8" width="6.8" height="3.3"/><rect x="0.9" y="5.8" width="6.8" height="3.3"/><path d="M7.7 2.2 H11.8 V7.6 H7.7"/><path d="M8.6 2.6 V3.6 M8.6 7.2 V6.2" stroke-width="1.6"/></g></svg>
<svg class="ic" style="left:106.2px;top:13.3px;overflow:visible" width="14" height="10" viewBox="0 0 14 10"><path d="M0.3 5 C3 -0.8 11 -0.8 13.7 5 C11 10.8 3 10.8 0.3 5Z" fill="#c2c2c2"/><circle cx="7" cy="4.9" r="2.7" fill="#1e1e1e"/><circle cx="7.9" cy="4" r="0.7" fill="#8a8a8a"/></svg>
<div class="lb" style="top:10px">V31</div>
<div class="nm" style="left:129.4px;top:10px"><span>ENDCARD03</span></div>
<svg class="ic" style="left:37.1px;top:28.2px" width="10" height="12" viewBox="0 0 10 12"><path d="M2.1 6.3 V3.6 C2.1 1.3 5.6 1.1 6.2 2.9" fill="none" stroke="#b9b9b9" stroke-width="1.5"/><rect x="0.7" y="5.8" width="8.6" height="5.8" rx="0.6" fill="#b9b9b9"/><path d="M4.1 7.4 h1.8 l-.55 2.7 h-.7z" fill="#1e1e1e"/></svg>
<svg class="ic" style="left:83.5px;top:30px" width="13" height="10" viewBox="0 0 13 10"><g fill="none" stroke="#bdbdbd" stroke-width="1"><rect x="0.9" y="0.8" width="6.8" height="3.3"/><rect x="0.9" y="5.8" width="6.8" height="3.3"/><path d="M7.7 2.2 H11.8 V7.6 H7.7"/><path d="M8.6 2.6 V3.6 M8.6 7.2 V6.2" stroke-width="1.6"/></g></svg>
<svg class="ic" style="left:106.2px;top:30.3px;overflow:visible" width="14" height="10" viewBox="0 0 14 10"><path d="M0.3 5 C3 -0.8 11 -0.8 13.7 5 C11 10.8 3 10.8 0.3 5Z" fill="#c2c2c2"/><circle cx="7" cy="4.9" r="2.7" fill="#1e1e1e"/><circle cx="7.9" cy="4" r="0.7" fill="#8a8a8a"/></svg>
<div class="lb" style="top:27px">V30</div>
<div class="nm" style="left:129.4px;top:27px"><span>ENDCARD02</span></div>
<svg class="ic" style="left:37.1px;top:45.2px" width="10" height="12" viewBox="0 0 10 12"><path d="M2.1 6.3 V3.6 C2.1 1.3 5.6 1.1 6.2 2.9" fill="none" stroke="#b9b9b9" stroke-width="1.5"/><rect x="0.7" y="5.8" width="8.6" height="5.8" rx="0.6" fill="#b9b9b9"/><path d="M4.1 7.4 h1.8 l-.55 2.7 h-.7z" fill="#1e1e1e"/></svg>
<svg class="ic" style="left:83.5px;top:47px" width="13" height="10" viewBox="0 0 13 10"><g fill="none" stroke="#bdbdbd" stroke-width="1"><rect x="0.9" y="0.8" width="6.8" height="3.3"/><rect x="0.9" y="5.8" width="6.8" height="3.3"/><path d="M7.7 2.2 H11.8 V7.6 H7.7"/><path d="M8.6 2.6 V3.6 M8.6 7.2 V6.2" stroke-width="1.6"/></g></svg>
<svg class="ic" style="left:106.2px;top:47.3px;overflow:visible" width="14" height="10" viewBox="0 0 14 10"><path d="M0.3 5 C3 -0.8 11 -0.8 13.7 5 C11 10.8 3 10.8 0.3 5Z" fill="#c2c2c2"/><circle cx="7" cy="4.9" r="2.7" fill="#1e1e1e"/><circle cx="7.9" cy="4" r="0.7" fill="#8a8a8a"/></svg>
<div class="lb" style="top:44px">V29</div>
<div class="nm" style="left:129.4px;top:44px"><span>ENDCARD01</span></div>
<svg class="ic" style="left:37.1px;top:62.2px" width="10" height="12" viewBox="0 0 10 12"><path d="M2.1 6.3 V3.6 C2.1 1.3 5.6 1.1 6.2 2.9" fill="none" stroke="#b9b9b9" stroke-width="1.5"/><rect x="0.7" y="5.8" width="8.6" height="5.8" rx="0.6" fill="#b9b9b9"/><path d="M4.1 7.4 h1.8 l-.55 2.7 h-.7z" fill="#1e1e1e"/></svg>
<svg class="ic" style="left:83.5px;top:64px" width="13" height="10" viewBox="0 0 13 10"><g fill="none" stroke="#bdbdbd" stroke-width="1"><rect x="0.9" y="0.8" width="6.8" height="3.3"/><rect x="0.9" y="5.8" width="6.8" height="3.3"/><path d="M7.7 2.2 H11.8 V7.6 H7.7"/><path d="M8.6 2.6 V3.6 M8.6 7.2 V6.2" stroke-width="1.6"/></g></svg>
<svg class="ic" style="left:106.2px;top:64.3px;overflow:visible" width="14" height="10" viewBox="0 0 14 10"><path d="M0.3 5 C3 -0.8 11 -0.8 13.7 5 C11 10.8 3 10.8 0.3 5Z" fill="#c2c2c2"/><circle cx="7" cy="4.9" r="2.7" fill="#1e1e1e"/><circle cx="7.9" cy="4" r="0.7" fill="#8a8a8a"/></svg>
<div class="lb" style="top:61px">V28</div>
<div class="nm" style="left:129.4px;top:61px"><span>GFX-MISC07</span></div>
<svg class="ic" style="left:37.1px;top:79.2px" width="10" height="12" viewBox="0 0 10 12"><path d="M2.1 6.3 V3.6 C2.1 1.3 5.6 1.1 6.2 2.9" fill="none" stroke="#b9b9b9" stroke-width="1.5"/><rect x="0.7" y="5.8" width="8.6" height="5.8" rx="0.6" fill="#b9b9b9"/><path d="M4.1 7.4 h1.8 l-.55 2.7 h-.7z" fill="#1e1e1e"/></svg>
<svg class="ic" style="left:83.5px;top:81px" width="13" height="10" viewBox="0 0 13 10"><g fill="none" stroke="#bdbdbd" stroke-width="1"><rect x="0.9" y="0.8" width="6.8" height="3.3"/><rect x="0.9" y="5.8" width="6.8" height="3.3"/><path d="M7.7 2.2 H11.8 V7.6 H7.7"/><path d="M8.6 2.6 V3.6 M8.6 7.2 V6.2" stroke-width="1.6"/></g></svg>
<svg class="ic" style="left:106.2px;top:81.3px;overflow:visible" width="14" height="10" viewBox="0 0 14 10"><path d="M0.3 5 C3 -0.8 11 -0.8 13.7 5 C11 10.8 3 10.8 0.3 5Z" fill="#c2c2c2"/><circle cx="7" cy="4.9" r="2.7" fill="#1e1e1e"/><circle cx="7.9" cy="4" r="0.7" fill="#8a8a8a"/></svg>
<div class="lb" style="top:78px">V27</div>
<div class="nm" style="left:129.4px;top:78px"><span>WRONGO-FINAL</span></div>
<svg class="ic" style="left:37.1px;top:96.2px" width="10" height="12" viewBox="0 0 10 12"><path d="M2.1 6.3 V3.6 C2.1 1.3 5.6 1.1 6.2 2.9" fill="none" stroke="#b9b9b9" stroke-width="1.5"/><rect x="0.7" y="5.8" width="8.6" height="5.8" rx="0.6" fill="#b9b9b9"/><path d="M4.1 7.4 h1.8 l-.55 2.7 h-.7z" fill="#1e1e1e"/></svg>
<svg class="ic" style="left:83.5px;top:98px" width="13" height="10" viewBox="0 0 13 10"><g fill="none" stroke="#bdbdbd" stroke-width="1"><rect x="0.9" y="0.8" width="6.8" height="3.3"/><rect x="0.9" y="5.8" width="6.8" height="3.3"/><path d="M7.7 2.2 H11.8 V7.6 H7.7"/><path d="M8.6 2.6 V3.6 M8.6 7.2 V6.2" stroke-width="1.6"/></g></svg>
<svg class="ic" style="left:106.2px;top:98.3px;overflow:visible" width="14" height="10" viewBox="0 0 14 10"><path d="M0.3 5 C3 -0.8 11 -0.8 13.7 5 C11 10.8 3 10.8 0.3 5Z" fill="#c2c2c2"/><circle cx="7" cy="4.9" r="2.7" fill="#1e1e1e"/><circle cx="7.9" cy="4" r="0.7" fill="#8a8a8a"/></svg>
<div class="lb" style="top:95px">V26</div>
<div class="nm" style="left:129.4px;top:95px"><span>WRONGO-COMP</span></div>
<svg class="ic" style="left:37.1px;top:113.2px" width="10" height="12" viewBox="0 0 10 12"><path d="M2.1 6.3 V3.6 C2.1 1.3 5.6 1.1 6.2 2.9" fill="none" stroke="#b9b9b9" stroke-width="1.5"/><rect x="0.7" y="5.8" width="8.6" height="5.8" rx="0.6" fill="#b9b9b9"/><path d="M4.1 7.4 h1.8 l-.55 2.7 h-.7z" fill="#1e1e1e"/></svg>
<svg class="ic" style="left:83.5px;top:115px" width="13" height="10" viewBox="0 0 13 10"><g fill="none" stroke="#bdbdbd" stroke-width="1"><rect x="0.9" y="0.8" width="6.8" height="3.3"/><rect x="0.9" y="5.8" width="6.8" height="3.3"/><path d="M7.7 2.2 H11.8 V7.6 H7.7"/><path d="M8.6 2.6 V3.6 M8.6 7.2 V6.2" stroke-width="1.6"/></g></svg>
<svg class="ic" style="left:106.2px;top:115.3px;overflow:visible" width="14" height="10" viewBox="0 0 14 10"><path d="M0.3 5 C3 -0.8 11 -0.8 13.7 5 C11 10.8 3 10.8 0.3 5Z" fill="#c2c2c2"/><circle cx="7" cy="4.9" r="2.7" fill="#1e1e1e"/><circle cx="7.9" cy="4" r="0.7" fill="#8a8a8a"/></svg>
<div class="lb" style="top:112px">V25</div>
<div class="nm" style="left:129.4px;top:112px"><span>WRONGO-TEMP</span></div>
<svg class="ic" style="left:37.1px;top:130.2px" width="10" height="12" viewBox="0 0 10 12"><path d="M2.1 6.3 V3.6 C2.1 1.3 5.6 1.1 6.2 2.9" fill="none" stroke="#b9b9b9" stroke-width="1.5"/><rect x="0.7" y="5.8" width="8.6" height="5.8" rx="0.6" fill="#b9b9b9"/><path d="M4.1 7.4 h1.8 l-.55 2.7 h-.7z" fill="#1e1e1e"/></svg>
<svg class="ic" style="left:83.5px;top:132px" width="13" height="10" viewBox="0 0 13 10"><g fill="none" stroke="#bdbdbd" stroke-width="1"><rect x="0.9" y="0.8" width="6.8" height="3.3"/><rect x="0.9" y="5.8" width="6.8" height="3.3"/><path d="M7.7 2.2 H11.8 V7.6 H7.7"/><path d="M8.6 2.6 V3.6 M8.6 7.2 V6.2" stroke-width="1.6"/></g></svg>
<svg class="ic" style="left:106.2px;top:132.3px;overflow:visible" width="14" height="10" viewBox="0 0 14 10"><path d="M0.3 5 C3 -0.8 11 -0.8 13.7 5 C11 10.8 3 10.8 0.3 5Z" fill="#c2c2c2"/><circle cx="7" cy="4.9" r="2.7" fill="#1e1e1e"/><circle cx="7.9" cy="4" r="0.7" fill="#8a8a8a"/></svg>
<div class="lb" style="top:129px">V24</div>
<div class="nm" style="left:129.4px;top:129px"><span>GFX-MISC06</span></div>
<svg class="ic" style="left:37.1px;top:147.2px" width="10" height="12" viewBox="0 0 10 12"><path d="M2.1 6.3 V3.6 C2.1 1.3 5.6 1.1 6.2 2.9" fill="none" stroke="#b9b9b9" stroke-width="1.5"/><rect x="0.7" y="5.8" width="8.6" height="5.8" rx="0.6" fill="#b9b9b9"/><path d="M4.1 7.4 h1.8 l-.55 2.7 h-.7z" fill="#1e1e1e"/></svg>
<svg class="ic" style="left:83.5px;top:149px" width="13" height="10" viewBox="0 0 13 10"><g fill="none" stroke="#bdbdbd" stroke-width="1"><rect x="0.9" y="0.8" width="6.8" height="3.3"/><rect x="0.9" y="5.8" width="6.8" height="3.3"/><path d="M7.7 2.2 H11.8 V7.6 H7.7"/><path d="M8.6 2.6 V3.6 M8.6 7.2 V6.2" stroke-width="1.6"/></g></svg>
<svg class="ic" style="left:106.2px;top:149.3px;overflow:visible" width="14" height="10" viewBox="0 0 14 10"><path d="M0.3 5 C3 -0.8 11 -0.8 13.7 5 C11 10.8 3 10.8 0.3 5Z" fill="#c2c2c2"/><circle cx="7" cy="4.9" r="2.7" fill="#1e1e1e"/><circle cx="7.9" cy="4" r="0.7" fill="#8a8a8a"/></svg>
<div class="lb" style="top:146px">V23</div>
<div class="nm" style="left:129.4px;top:146px"><span>GFX-MISC05</span></div>
<svg class="ic" style="left:37.1px;top:164.2px" width="10" height="12" viewBox="0 0 10 12"><path d="M2.1 6.3 V3.6 C2.1 1.3 5.6 1.1 6.2 2.9" fill="none" stroke="#b9b9b9" stroke-width="1.5"/><rect x="0.7" y="5.8" width="8.6" height="5.8" rx="0.6" fill="#b9b9b9"/><path d="M4.1 7.4 h1.8 l-.55 2.7 h-.7z" fill="#1e1e1e"/></svg>
<svg class="ic" style="left:83.5px;top:166px" width="13" height="10" viewBox="0 0 13 10"><g fill="none" stroke="#bdbdbd" stroke-width="1"><rect x="0.9" y="0.8" width="6.8" height="3.3"/><rect x="0.9" y="5.8" width="6.8" height="3.3"/><path d="M7.7 2.2 H11.8 V7.6 H7.7"/><path d="M8.6 2.6 V3.6 M8.6 7.2 V6.2" stroke-width="1.6"/></g></svg>
<svg class="ic" style="left:106.2px;top:166.3px;overflow:visible" width="14" height="10" viewBox="0 0 14 10"><path d="M0.3 5 C3 -0.8 11 -0.8 13.7 5 C11 10.8 3 10.8 0.3 5Z" fill="#c2c2c2"/><circle cx="7" cy="4.9" r="2.7" fill="#1e1e1e"/><circle cx="7.9" cy="4" r="0.7" fill="#8a8a8a"/></svg>
<div class="lb" style="top:163px">V22</div>
<div class="nm" style="left:129.4px;top:163px"><span>FRAME-BRAD</span></div>
<svg class="ic" style="left:37.1px;top:181.2px" width="10" height="12" viewBox="0 0 10 12"><path d="M2.1 6.3 V3.6 C2.1 1.3 5.6 1.1 6.2 2.9" fill="none" stroke="#b9b9b9" stroke-width="1.5"/><rect x="0.7" y="5.8" width="8.6" height="5.8" rx="0.6" fill="#b9b9b9"/><path d="M4.1 7.4 h1.8 l-.55 2.7 h-.7z" fill="#1e1e1e"/></svg>
<svg class="ic" style="left:83.5px;top:183px" width="13" height="10" viewBox="0 0 13 10"><g fill="none" stroke="#bdbdbd" stroke-width="1"><rect x="0.9" y="0.8" width="6.8" height="3.3"/><rect x="0.9" y="5.8" width="6.8" height="3.3"/><path d="M7.7 2.2 H11.8 V7.6 H7.7"/><path d="M8.6 2.6 V3.6 M8.6 7.2 V6.2" stroke-width="1.6"/></g></svg>
<svg class="ic" style="left:106.2px;top:183.3px;overflow:visible" width="14" height="10" viewBox="0 0 14 10"><path d="M0.3 5 C3 -0.8 11 -0.8 13.7 5 C11 10.8 3 10.8 0.3 5Z" fill="#c2c2c2"/><circle cx="7" cy="4.9" r="2.7" fill="#1e1e1e"/><circle cx="7.9" cy="4" r="0.7" fill="#8a8a8a"/></svg>
<div class="lb" style="top:180px">V21</div>
<div class="nm" style="left:129.4px;top:180px"><span>CAM-BRAD</span></div>
<svg class="ic" style="left:37.1px;top:198.2px" width="10" height="12" viewBox="0 0 10 12"><path d="M2.1 6.3 V3.6 C2.1 1.3 5.6 1.1 6.2 2.9" fill="none" stroke="#b9b9b9" stroke-width="1.5"/><rect x="0.7" y="5.8" width="8.6" height="5.8" rx="0.6" fill="#b9b9b9"/><path d="M4.1 7.4 h1.8 l-.55 2.7 h-.7z" fill="#1e1e1e"/></svg>
<svg class="ic" style="left:83.5px;top:200px" width="13" height="10" viewBox="0 0 13 10"><g fill="none" stroke="#bdbdbd" stroke-width="1"><rect x="0.9" y="0.8" width="6.8" height="3.3"/><rect x="0.9" y="5.8" width="6.8" height="3.3"/><path d="M7.7 2.2 H11.8 V7.6 H7.7"/><path d="M8.6 2.6 V3.6 M8.6 7.2 V6.2" stroke-width="1.6"/></g></svg>
<svg class="ic" style="left:106.2px;top:200.3px;overflow:visible" width="14" height="10" viewBox="0 0 14 10"><path d="M0.3 5 C3 -0.8 11 -0.8 13.7 5 C11 10.8 3 10.8 0.3 5Z" fill="#c2c2c2"/><circle cx="7" cy="4.9" r="2.7" fill="#1e1e1e"/><circle cx="7.9" cy="4" r="0.7" fill="#8a8a8a"/></svg>
<div class="lb" style="top:197px">V20</div>
<div class="nm" style="left:129.4px;top:197px"><span>CAMREF-BRAD</span></div>
<svg class="ic" style="left:37.1px;top:215.2px" width="10" height="12" viewBox="0 0 10 12"><path d="M2.1 6.3 V3.6 C2.1 1.3 5.6 1.1 6.2 2.9" fill="none" stroke="#b9b9b9" stroke-width="1.5"/><rect x="0.7" y="5.8" width="8.6" height="5.8" rx="0.6" fill="#b9b9b9"/><path d="M4.1 7.4 h1.8 l-.55 2.7 h-.7z" fill="#1e1e1e"/></svg>
<svg class="ic" style="left:83.5px;top:217px" width="13" height="10" viewBox="0 0 13 10"><g fill="none" stroke="#bdbdbd" stroke-width="1"><rect x="0.9" y="0.8" width="6.8" height="3.3"/><rect x="0.9" y="5.8" width="6.8" height="3.3"/><path d="M7.7 2.2 H11.8 V7.6 H7.7"/><path d="M8.6 2.6 V3.6 M8.6 7.2 V6.2" stroke-width="1.6"/></g></svg>
<svg class="ic" style="left:106.2px;top:217.3px;overflow:visible" width="14" height="10" viewBox="0 0 14 10"><path d="M0.3 5 C3 -0.8 11 -0.8 13.7 5 C11 10.8 3 10.8 0.3 5Z" fill="#c2c2c2"/><circle cx="7" cy="4.9" r="2.7" fill="#1e1e1e"/><circle cx="7.9" cy="4" r="0.7" fill="#8a8a8a"/></svg>
<div class="lb" style="top:214px">V19</div>
<div class="nm" style="left:129.4px;top:214px"><span>FRAME-KEVIN</span></div>
<svg class="ic" style="left:37.1px;top:232.2px" width="10" height="12" viewBox="0 0 10 12"><path d="M2.1 6.3 V3.6 C2.1 1.3 5.6 1.1 6.2 2.9" fill="none" stroke="#b9b9b9" stroke-width="1.5"/><rect x="0.7" y="5.8" width="8.6" height="5.8" rx="0.6" fill="#b9b9b9"/><path d="M4.1 7.4 h1.8 l-.55 2.7 h-.7z" fill="#1e1e1e"/></svg>
<svg class="ic" style="left:83.5px;top:234px" width="13" height="10" viewBox="0 0 13 10"><g fill="none" stroke="#bdbdbd" stroke-width="1"><rect x="0.9" y="0.8" width="6.8" height="3.3"/><rect x="0.9" y="5.8" width="6.8" height="3.3"/><path d="M7.7 2.2 H11.8 V7.6 H7.7"/><path d="M8.6 2.6 V3.6 M8.6 7.2 V6.2" stroke-width="1.6"/></g></svg>
<svg class="ic" style="left:106.2px;top:234.3px;overflow:visible" width="14" height="10" viewBox="0 0 14 10"><path d="M0.3 5 C3 -0.8 11 -0.8 13.7 5 C11 10.8 3 10.8 0.3 5Z" fill="#c2c2c2"/><circle cx="7" cy="4.9" r="2.7" fill="#1e1e1e"/><circle cx="7.9" cy="4" r="0.7" fill="#8a8a8a"/></svg>
<div class="lb" style="top:231px">V18</div>
<div class="nm" style="left:129.4px;top:231px"><span>CAM-KEVIN</span></div>
<svg class="ic" style="left:37.1px;top:249.2px" width="10" height="12" viewBox="0 0 10 12"><path d="M2.1 6.3 V3.6 C2.1 1.3 5.6 1.1 6.2 2.9" fill="none" stroke="#b9b9b9" stroke-width="1.5"/><rect x="0.7" y="5.8" width="8.6" height="5.8" rx="0.6" fill="#b9b9b9"/><path d="M4.1 7.4 h1.8 l-.55 2.7 h-.7z" fill="#1e1e1e"/></svg>
<svg class="ic" style="left:83.5px;top:251px" width="13" height="10" viewBox="0 0 13 10"><g fill="none" stroke="#bdbdbd" stroke-width="1"><rect x="0.9" y="0.8" width="6.8" height="3.3"/><rect x="0.9" y="5.8" width="6.8" height="3.3"/><path d="M7.7 2.2 H11.8 V7.6 H7.7"/><path d="M8.6 2.6 V3.6 M8.6 7.2 V6.2" stroke-width="1.6"/></g></svg>
<svg class="ic" style="left:106.2px;top:251.3px;overflow:visible" width="14" height="10" viewBox="0 0 14 10"><path d="M0.3 5 C3 -0.8 11 -0.8 13.7 5 C11 10.8 3 10.8 0.3 5Z" fill="#c2c2c2"/><circle cx="7" cy="4.9" r="2.7" fill="#1e1e1e"/><circle cx="7.9" cy="4" r="0.7" fill="#8a8a8a"/></svg>
<div class="lb" style="top:248px">V17</div>
<div class="nm" style="left:129.4px;top:248px"><span>CAMREF-KEVIN</span></div>
<svg class="ic" style="left:37.1px;top:266.2px" width="10" height="12" viewBox="0 0 10 12"><path d="M2.1 6.3 V3.6 C2.1 1.3 5.6 1.1 6.2 2.9" fill="none" stroke="#b9b9b9" stroke-width="1.5"/><rect x="0.7" y="5.8" width="8.6" height="5.8" rx="0.6" fill="#b9b9b9"/><path d="M4.1 7.4 h1.8 l-.55 2.7 h-.7z" fill="#1e1e1e"/></svg>
<svg class="ic" style="left:83.5px;top:268px" width="13" height="10" viewBox="0 0 13 10"><g fill="none" stroke="#bdbdbd" stroke-width="1"><rect x="0.9" y="0.8" width="6.8" height="3.3"/><rect x="0.9" y="5.8" width="6.8" height="3.3"/><path d="M7.7 2.2 H11.8 V7.6 H7.7"/><path d="M8.6 2.6 V3.6 M8.6 7.2 V6.2" stroke-width="1.6"/></g></svg>
<svg class="ic" style="left:106.2px;top:268.3px;overflow:visible" width="14" height="10" viewBox="0 0 14 10"><path d="M0.3 5 C3 -0.8 11 -0.8 13.7 5 C11 10.8 3 10.8 0.3 5Z" fill="#c2c2c2"/><circle cx="7" cy="4.9" r="2.7" fill="#1e1e1e"/><circle cx="7.9" cy="4" r="0.7" fill="#8a8a8a"/></svg>
<div class="lb" style="top:265px">V16</div>
<div class="nm" style="left:129.4px;top:265px"><span>FRAME-DAVE</span></div>
<svg class="ic" style="left:37.1px;top:283.2px" width="10" height="12" viewBox="0 0 10 12"><path d="M2.1 6.3 V3.6 C2.1 1.3 5.6 1.1 6.2 2.9" fill="none" stroke="#b9b9b9" stroke-width="1.5"/><rect x="0.7" y="5.8" width="8.6" height="5.8" rx="0.6" fill="#b9b9b9"/><path d="M4.1 7.4 h1.8 l-.55 2.7 h-.7z" fill="#1e1e1e"/></svg>
<svg class="ic" style="left:83.5px;top:285px" width="13" height="10" viewBox="0 0 13 10"><g fill="none" stroke="#bdbdbd" stroke-width="1"><rect x="0.9" y="0.8" width="6.8" height="3.3"/><rect x="0.9" y="5.8" width="6.8" height="3.3"/><path d="M7.7 2.2 H11.8 V7.6 H7.7"/><path d="M8.6 2.6 V3.6 M8.6 7.2 V6.2" stroke-width="1.6"/></g></svg>
<svg class="ic" style="left:106.2px;top:285.3px;overflow:visible" width="14" height="10" viewBox="0 0 14 10"><path d="M0.3 5 C3 -0.8 11 -0.8 13.7 5 C11 10.8 3 10.8 0.3 5Z" fill="#c2c2c2"/><circle cx="7" cy="4.9" r="2.7" fill="#1e1e1e"/><circle cx="7.9" cy="4" r="0.7" fill="#8a8a8a"/></svg>
<div class="lb" style="top:282px">V15</div>
<div class="nm" style="left:129.4px;top:282px"><span>CAM-DAVE</span></div>
<svg class="ic" style="left:37.1px;top:300.2px" width="10" height="12" viewBox="0 0 10 12"><path d="M2.1 6.3 V3.6 C2.1 1.3 5.6 1.1 6.2 2.9" fill="none" stroke="#b9b9b9" stroke-width="1.5"/><rect x="0.7" y="5.8" width="8.6" height="5.8" rx="0.6" fill="#b9b9b9"/><path d="M4.1 7.4 h1.8 l-.55 2.7 h-.7z" fill="#1e1e1e"/></svg>
<svg class="ic" style="left:83.5px;top:302px" width="13" height="10" viewBox="0 0 13 10"><g fill="none" stroke="#bdbdbd" stroke-width="1"><rect x="0.9" y="0.8" width="6.8" height="3.3"/><rect x="0.9" y="5.8" width="6.8" height="3.3"/><path d="M7.7 2.2 H11.8 V7.6 H7.7"/><path d="M8.6 2.6 V3.6 M8.6 7.2 V6.2" stroke-width="1.6"/></g></svg>
<svg class="ic" style="left:106.2px;top:302.3px;overflow:visible" width="14" height="10" viewBox="0 0 14 10"><path d="M0.3 5 C3 -0.8 11 -0.8 13.7 5 C11 10.8 3 10.8 0.3 5Z" fill="#c2c2c2"/><circle cx="7" cy="4.9" r="2.7" fill="#1e1e1e"/><circle cx="7.9" cy="4" r="0.7" fill="#8a8a8a"/></svg>
<div class="lb" style="top:299px">V14</div>
<div class="nm" style="left:129.4px;top:299px"><span>CAMREF-DAVE</span></div>
<svg class="ic" style="left:37.1px;top:317.2px" width="10" height="12" viewBox="0 0 10 12"><path d="M2.1 6.3 V3.6 C2.1 1.3 5.6 1.1 6.2 2.9" fill="none" stroke="#b9b9b9" stroke-width="1.5"/><rect x="0.7" y="5.8" width="8.6" height="5.8" rx="0.6" fill="#b9b9b9"/><path d="M4.1 7.4 h1.8 l-.55 2.7 h-.7z" fill="#1e1e1e"/></svg>
<svg class="ic" style="left:83.5px;top:319px" width="13" height="10" viewBox="0 0 13 10"><g fill="none" stroke="#bdbdbd" stroke-width="1"><rect x="0.9" y="0.8" width="6.8" height="3.3"/><rect x="0.9" y="5.8" width="6.8" height="3.3"/><path d="M7.7 2.2 H11.8 V7.6 H7.7"/><path d="M8.6 2.6 V3.6 M8.6 7.2 V6.2" stroke-width="1.6"/></g></svg>
<svg class="ic" style="left:106.2px;top:319.3px;overflow:visible" width="14" height="10" viewBox="0 0 14 10"><path d="M0.3 5 C3 -0.8 11 -0.8 13.7 5 C11 10.8 3 10.8 0.3 5Z" fill="#c2c2c2"/><circle cx="7" cy="4.9" r="2.7" fill="#1e1e1e"/><circle cx="7.9" cy="4" r="0.7" fill="#8a8a8a"/></svg>
<div class="lb" style="top:316px">V13</div>
<div class="nm" style="left:129.4px;top:316px"><span>GFX-MISC04</span></div>
<svg class="ic" style="left:37.1px;top:334.2px" width="10" height="12" viewBox="0 0 10 12"><path d="M2.1 6.3 V3.6 C2.1 1.3 5.6 1.1 6.2 2.9" fill="none" stroke="#b9b9b9" stroke-width="1.5"/><rect x="0.7" y="5.8" width="8.6" height="5.8" rx="0.6" fill="#b9b9b9"/><path d="M4.1 7.4 h1.8 l-.55 2.7 h-.7z" fill="#1e1e1e"/></svg>
<svg class="ic" style="left:83.5px;top:336px" width="13" height="10" viewBox="0 0 13 10"><g fill="none" stroke="#bdbdbd" stroke-width="1"><rect x="0.9" y="0.8" width="6.8" height="3.3"/><rect x="0.9" y="5.8" width="6.8" height="3.3"/><path d="M7.7 2.2 H11.8 V7.6 H7.7"/><path d="M8.6 2.6 V3.6 M8.6 7.2 V6.2" stroke-width="1.6"/></g></svg>
<svg class="ic" style="left:106.2px;top:336.3px;overflow:visible" width="14" height="10" viewBox="0 0 14 10"><path d="M0.3 5 C3 -0.8 11 -0.8 13.7 5 C11 10.8 3 10.8 0.3 5Z" fill="#c2c2c2"/><circle cx="7" cy="4.9" r="2.7" fill="#1e1e1e"/><circle cx="7.9" cy="4" r="0.7" fill="#8a8a8a"/></svg>
<div class="lb" style="top:333px">V12</div>
<div class="nm" style="left:129.4px;top:333px"><span>GFX-MISC03</span></div>
<svg class="ic" style="left:37.1px;top:351.2px" width="10" height="12" viewBox="0 0 10 12"><path d="M2.1 6.3 V3.6 C2.1 1.3 5.6 1.1 6.2 2.9" fill="none" stroke="#b9b9b9" stroke-width="1.5"/><rect x="0.7" y="5.8" width="8.6" height="5.8" rx="0.6" fill="#b9b9b9"/><path d="M4.1 7.4 h1.8 l-.55 2.7 h-.7z" fill="#1e1e1e"/></svg>
<svg class="ic" style="left:83.5px;top:353px" width="13" height="10" viewBox="0 0 13 10"><g fill="none" stroke="#bdbdbd" stroke-width="1"><rect x="0.9" y="0.8" width="6.8" height="3.3"/><rect x="0.9" y="5.8" width="6.8" height="3.3"/><path d="M7.7 2.2 H11.8 V7.6 H7.7"/><path d="M8.6 2.6 V3.6 M8.6 7.2 V6.2" stroke-width="1.6"/></g></svg>
<svg class="ic" style="left:106.2px;top:353.3px;overflow:visible" width="14" height="10" viewBox="0 0 14 10"><path d="M0.3 5 C3 -0.8 11 -0.8 13.7 5 C11 10.8 3 10.8 0.3 5Z" fill="#c2c2c2"/><circle cx="7" cy="4.9" r="2.7" fill="#1e1e1e"/><circle cx="7.9" cy="4" r="0.7" fill="#8a8a8a"/></svg>
<div class="lb" style="top:350px">V11</div>
<div class="nm" style="left:129.4px;top:350px"><span>GFX-FRAME</span></div>
<svg class="ic" style="left:37.1px;top:368.2px" width="10" height="12" viewBox="0 0 10 12"><path d="M2.1 6.3 V3.6 C2.1 1.3 5.6 1.1 6.2 2.9" fill="none" stroke="#b9b9b9" stroke-width="1.5"/><rect x="0.7" y="5.8" width="8.6" height="5.8" rx="0.6" fill="#b9b9b9"/><path d="M4.1 7.4 h1.8 l-.55 2.7 h-.7z" fill="#1e1e1e"/></svg>
<svg class="ic" style="left:83.5px;top:370px" width="13" height="10" viewBox="0 0 13 10"><g fill="none" stroke="#bdbdbd" stroke-width="1"><rect x="0.9" y="0.8" width="6.8" height="3.3"/><rect x="0.9" y="5.8" width="6.8" height="3.3"/><path d="M7.7 2.2 H11.8 V7.6 H7.7"/><path d="M8.6 2.6 V3.6 M8.6 7.2 V6.2" stroke-width="1.6"/></g></svg>
<svg class="ic" style="left:106.2px;top:370.3px;overflow:visible" width="14" height="10" viewBox="0 0 14 10"><path d="M0.3 5 C3 -0.8 11 -0.8 13.7 5 C11 10.8 3 10.8 0.3 5Z" fill="#c2c2c2"/><circle cx="7" cy="4.9" r="2.7" fill="#1e1e1e"/><circle cx="7.9" cy="4" r="0.7" fill="#8a8a8a"/></svg>
<div class="lb" style="top:367px">V10</div>
<div class="nm" style="left:129.4px;top:367px"><span>GFX-MISC02</span></div>
<svg class="ic" style="left:37.1px;top:385.2px" width="10" height="12" viewBox="0 0 10 12"><path d="M2.1 6.3 V3.6 C2.1 1.3 5.6 1.1 6.2 2.9" fill="none" stroke="#b9b9b9" stroke-width="1.5"/><rect x="0.7" y="5.8" width="8.6" height="5.8" rx="0.6" fill="#b9b9b9"/><path d="M4.1 7.4 h1.8 l-.55 2.7 h-.7z" fill="#1e1e1e"/></svg>
<svg class="ic" style="left:83.5px;top:387px" width="13" height="10" viewBox="0 0 13 10"><g fill="none" stroke="#bdbdbd" stroke-width="1"><rect x="0.9" y="0.8" width="6.8" height="3.3"/><rect x="0.9" y="5.8" width="6.8" height="3.3"/><path d="M7.7 2.2 H11.8 V7.6 H7.7"/><path d="M8.6 2.6 V3.6 M8.6 7.2 V6.2" stroke-width="1.6"/></g></svg>
<svg class="ic" style="left:106.2px;top:387.3px;overflow:visible" width="14" height="10" viewBox="0 0 14 10"><path d="M0.3 5 C3 -0.8 11 -0.8 13.7 5 C11 10.8 3 10.8 0.3 5Z" fill="#c2c2c2"/><circle cx="7" cy="4.9" r="2.7" fill="#1e1e1e"/><circle cx="7.9" cy="4" r="0.7" fill="#8a8a8a"/></svg>
<div class="lb" style="top:384px">V9</div>
<div class="nm" style="left:129.4px;top:384px"><span>SCREEN03</span></div>
<svg class="ic" style="left:37.1px;top:402.2px" width="10" height="12" viewBox="0 0 10 12"><path d="M2.1 6.3 V3.6 C2.1 1.3 5.6 1.1 6.2 2.9" fill="none" stroke="#b9b9b9" stroke-width="1.5"/><rect x="0.7" y="5.8" width="8.6" height="5.8" rx="0.6" fill="#b9b9b9"/><path d="M4.1 7.4 h1.8 l-.55 2.7 h-.7z" fill="#1e1e1e"/></svg>
<svg class="ic" style="left:83.5px;top:404px" width="13" height="10" viewBox="0 0 13 10"><g fill="none" stroke="#bdbdbd" stroke-width="1"><rect x="0.9" y="0.8" width="6.8" height="3.3"/><rect x="0.9" y="5.8" width="6.8" height="3.3"/><path d="M7.7 2.2 H11.8 V7.6 H7.7"/><path d="M8.6 2.6 V3.6 M8.6 7.2 V6.2" stroke-width="1.6"/></g></svg>
<svg class="ic" style="left:106.2px;top:404.3px;overflow:visible" width="14" height="10" viewBox="0 0 14 10"><path d="M0.3 5 C3 -0.8 11 -0.8 13.7 5 C11 10.8 3 10.8 0.3 5Z" fill="#c2c2c2"/><circle cx="7" cy="4.9" r="2.7" fill="#1e1e1e"/><circle cx="7.9" cy="4" r="0.7" fill="#8a8a8a"/></svg>
<div class="lb" style="top:401px">V8</div>
<div class="nm" style="left:129.4px;top:401px"><span>SCREEN03-REF</span></div>
<svg class="ic" style="left:37.1px;top:419.2px" width="10" height="12" viewBox="0 0 10 12"><path d="M2.1 6.3 V3.6 C2.1 1.3 5.6 1.1 6.2 2.9" fill="none" stroke="#b9b9b9" stroke-width="1.5"/><rect x="0.7" y="5.8" width="8.6" height="5.8" rx="0.6" fill="#b9b9b9"/><path d="M4.1 7.4 h1.8 l-.55 2.7 h-.7z" fill="#1e1e1e"/></svg>
<svg class="ic" style="left:83.5px;top:421px" width="13" height="10" viewBox="0 0 13 10"><g fill="none" stroke="#bdbdbd" stroke-width="1"><rect x="0.9" y="0.8" width="6.8" height="3.3"/><rect x="0.9" y="5.8" width="6.8" height="3.3"/><path d="M7.7 2.2 H11.8 V7.6 H7.7"/><path d="M8.6 2.6 V3.6 M8.6 7.2 V6.2" stroke-width="1.6"/></g></svg>
<svg class="ic" style="left:106.2px;top:421.3px;overflow:visible" width="14" height="10" viewBox="0 0 14 10"><path d="M0.3 5 C3 -0.8 11 -0.8 13.7 5 C11 10.8 3 10.8 0.3 5Z" fill="#c2c2c2"/><circle cx="7" cy="4.9" r="2.7" fill="#1e1e1e"/><circle cx="7.9" cy="4" r="0.7" fill="#8a8a8a"/></svg>
<div class="lb" style="top:418px">V7</div>
<div class="nm" style="left:129.4px;top:418px"><span>SCREEN02</span></div>
<svg class="ic" style="left:37.1px;top:436.2px" width="10" height="12" viewBox="0 0 10 12"><path d="M2.1 6.3 V3.6 C2.1 1.3 5.6 1.1 6.2 2.9" fill="none" stroke="#b9b9b9" stroke-width="1.5"/><rect x="0.7" y="5.8" width="8.6" height="5.8" rx="0.6" fill="#b9b9b9"/><path d="M4.1 7.4 h1.8 l-.55 2.7 h-.7z" fill="#1e1e1e"/></svg>
<svg class="ic" style="left:83.5px;top:438px" width="13" height="10" viewBox="0 0 13 10"><g fill="none" stroke="#bdbdbd" stroke-width="1"><rect x="0.9" y="0.8" width="6.8" height="3.3"/><rect x="0.9" y="5.8" width="6.8" height="3.3"/><path d="M7.7 2.2 H11.8 V7.6 H7.7"/><path d="M8.6 2.6 V3.6 M8.6 7.2 V6.2" stroke-width="1.6"/></g></svg>
<svg class="ic" style="left:106.2px;top:438.3px;overflow:visible" width="14" height="10" viewBox="0 0 14 10"><path d="M0.3 5 C3 -0.8 11 -0.8 13.7 5 C11 10.8 3 10.8 0.3 5Z" fill="#c2c2c2"/><circle cx="7" cy="4.9" r="2.7" fill="#1e1e1e"/><circle cx="7.9" cy="4" r="0.7" fill="#8a8a8a"/></svg>
<div class="lb" style="top:435px">V6</div>
<div class="nm" style="left:129.4px;top:435px"><span>SCREEN02-REF</span></div>
<svg class="ic" style="left:37.1px;top:453.2px" width="10" height="12" viewBox="0 0 10 12"><path d="M2.1 6.3 V3.6 C2.1 1.3 5.6 1.1 6.2 2.9" fill="none" stroke="#b9b9b9" stroke-width="1.5"/><rect x="0.7" y="5.8" width="8.6" height="5.8" rx="0.6" fill="#b9b9b9"/><path d="M4.1 7.4 h1.8 l-.55 2.7 h-.7z" fill="#1e1e1e"/></svg>
<svg class="ic" style="left:83.5px;top:455px" width="13" height="10" viewBox="0 0 13 10"><g fill="none" stroke="#bdbdbd" stroke-width="1"><rect x="0.9" y="0.8" width="6.8" height="3.3"/><rect x="0.9" y="5.8" width="6.8" height="3.3"/><path d="M7.7 2.2 H11.8 V7.6 H7.7"/><path d="M8.6 2.6 V3.6 M8.6 7.2 V6.2" stroke-width="1.6"/></g></svg>
<svg class="ic" style="left:106.2px;top:455.3px;overflow:visible" width="14" height="10" viewBox="0 0 14 10"><path d="M0.3 5 C3 -0.8 11 -0.8 13.7 5 C11 10.8 3 10.8 0.3 5Z" fill="#c2c2c2"/><circle cx="7" cy="4.9" r="2.7" fill="#1e1e1e"/><circle cx="7.9" cy="4" r="0.7" fill="#8a8a8a"/></svg>
<div class="lb" style="top:452px">V5</div>
<div class="nm" style="left:129.4px;top:452px"><span>SCREEN01</span></div>
<svg class="ic" style="left:37.1px;top:470.2px" width="10" height="12" viewBox="0 0 10 12"><path d="M2.1 6.3 V3.6 C2.1 1.3 5.6 1.1 6.2 2.9" fill="none" stroke="#b9b9b9" stroke-width="1.5"/><rect x="0.7" y="5.8" width="8.6" height="5.8" rx="0.6" fill="#b9b9b9"/><path d="M4.1 7.4 h1.8 l-.55 2.7 h-.7z" fill="#1e1e1e"/></svg>
<svg class="ic" style="left:83.5px;top:472px" width="13" height="10" viewBox="0 0 13 10"><g fill="none" stroke="#bdbdbd" stroke-width="1"><rect x="0.9" y="0.8" width="6.8" height="3.3"/><rect x="0.9" y="5.8" width="6.8" height="3.3"/><path d="M7.7 2.2 H11.8 V7.6 H7.7"/><path d="M8.6 2.6 V3.6 M8.6 7.2 V6.2" stroke-width="1.6"/></g></svg>
<svg class="ic" style="left:106.2px;top:472.3px;overflow:visible" width="14" height="10" viewBox="0 0 14 10"><path d="M0.3 5 C3 -0.8 11 -0.8 13.7 5 C11 10.8 3 10.8 0.3 5Z" fill="#c2c2c2"/><circle cx="7" cy="4.9" r="2.7" fill="#1e1e1e"/><circle cx="7.9" cy="4" r="0.7" fill="#8a8a8a"/></svg>
<div class="lb" style="top:469px">V4</div>
<div class="nm" style="left:129.4px;top:469px"><span>SCREEN01-REF</span></div>
<svg class="ic" style="left:37.1px;top:487.2px" width="10" height="12" viewBox="0 0 10 12"><path d="M2.1 6.3 V3.6 C2.1 1.3 5.6 1.1 6.2 2.9" fill="none" stroke="#b9b9b9" stroke-width="1.5"/><rect x="0.7" y="5.8" width="8.6" height="5.8" rx="0.6" fill="#b9b9b9"/><path d="M4.1 7.4 h1.8 l-.55 2.7 h-.7z" fill="#1e1e1e"/></svg>
<svg class="ic" style="left:83.5px;top:489px" width="13" height="10" viewBox="0 0 13 10"><g fill="none" stroke="#bdbdbd" stroke-width="1"><rect x="0.9" y="0.8" width="6.8" height="3.3"/><rect x="0.9" y="5.8" width="6.8" height="3.3"/><path d="M7.7 2.2 H11.8 V7.6 H7.7"/><path d="M8.6 2.6 V3.6 M8.6 7.2 V6.2" stroke-width="1.6"/></g></svg>
<svg class="ic" style="left:106.2px;top:489.3px;overflow:visible" width="14" height="10" viewBox="0 0 14 10"><path d="M0.3 5 C3 -0.8 11 -0.8 13.7 5 C11 10.8 3 10.8 0.3 5Z" fill="#c2c2c2"/><circle cx="7" cy="4.9" r="2.7" fill="#1e1e1e"/><circle cx="7.9" cy="4" r="0.7" fill="#8a8a8a"/></svg>
<div class="lb" style="top:486px">V3</div>
<div class="nm" style="left:129.4px;top:486px"><span>GFX-MISC01</span></div>
<svg class="ic" style="left:37.1px;top:504.2px" width="10" height="12" viewBox="0 0 10 12"><path d="M2.1 6.3 V3.6 C2.1 1.3 5.6 1.1 6.2 2.9" fill="none" stroke="#b9b9b9" stroke-width="1.5"/><rect x="0.7" y="5.8" width="8.6" height="5.8" rx="0.6" fill="#b9b9b9"/><path d="M4.1 7.4 h1.8 l-.55 2.7 h-.7z" fill="#1e1e1e"/></svg>
<svg class="ic" style="left:83.5px;top:506px" width="13" height="10" viewBox="0 0 13 10"><g fill="none" stroke="#bdbdbd" stroke-width="1"><rect x="0.9" y="0.8" width="6.8" height="3.3"/><rect x="0.9" y="5.8" width="6.8" height="3.3"/><path d="M7.7 2.2 H11.8 V7.6 H7.7"/><path d="M8.6 2.6 V3.6 M8.6 7.2 V6.2" stroke-width="1.6"/></g></svg>
<svg class="ic" style="left:106.2px;top:506.3px;overflow:visible" width="14" height="10" viewBox="0 0 14 10"><path d="M0.3 5 C3 -0.8 11 -0.8 13.7 5 C11 10.8 3 10.8 0.3 5Z" fill="#c2c2c2"/><circle cx="7" cy="4.9" r="2.7" fill="#1e1e1e"/><circle cx="7.9" cy="4" r="0.7" fill="#8a8a8a"/></svg>
<div class="lb" style="top:503px">V2</div>
<div class="nm" style="left:129.4px;top:503px"><span>BKGRND02</span></div>
<svg class="ic" style="left:37.1px;top:521.2px" width="10" height="12" viewBox="0 0 10 12"><path d="M2.1 6.3 V3.6 C2.1 1.3 5.6 1.1 6.2 2.9" fill="none" stroke="#b9b9b9" stroke-width="1.5"/><rect x="0.7" y="5.8" width="8.6" height="5.8" rx="0.6" fill="#b9b9b9"/><path d="M4.1 7.4 h1.8 l-.55 2.7 h-.7z" fill="#1e1e1e"/></svg>
<svg class="ic" style="left:83.5px;top:523px" width="13" height="10" viewBox="0 0 13 10"><g fill="none" stroke="#bdbdbd" stroke-width="1"><rect x="0.9" y="0.8" width="6.8" height="3.3"/><rect x="0.9" y="5.8" width="6.8" height="3.3"/><path d="M7.7 2.2 H11.8 V7.6 H7.7"/><path d="M8.6 2.6 V3.6 M8.6 7.2 V6.2" stroke-width="1.6"/></g></svg>
<svg class="ic" style="left:106.2px;top:523.3px;overflow:visible" width="14" height="10" viewBox="0 0 14 10"><path d="M0.3 5 C3 -0.8 11 -0.8 13.7 5 C11 10.8 3 10.8 0.3 5Z" fill="#c2c2c2"/><circle cx="7" cy="4.9" r="2.7" fill="#1e1e1e"/><circle cx="7.9" cy="4" r="0.7" fill="#8a8a8a"/></svg>
<div class="lb" style="top:520px">V1</div>
<div class="nm" style="left:129.4px;top:520px"><span>BKGRND01</span></div>
<svg class="ic" style="left:37.1px;top:542.2px" width="10" height="12" viewBox="0 0 10 12"><path d="M2.1 6.3 V3.6 C2.1 1.3 5.6 1.1 6.2 2.9" fill="none" stroke="#b9b9b9" stroke-width="1.5"/><rect x="0.7" y="5.8" width="8.6" height="5.8" rx="0.6" fill="#b9b9b9"/><path d="M4.1 7.4 h1.8 l-.55 2.7 h-.7z" fill="#1e1e1e"/></svg>
<svg class="ic" style="left:83.5px;top:544px" width="13" height="10" viewBox="0 0 13 10"><g fill="none" stroke="#bdbdbd" stroke-width="1"><rect x="0.9" y="0.8" width="6.8" height="3.3"/><rect x="0.9" y="5.8" width="6.8" height="3.3"/><path d="M7.7 2.2 H11.8 V7.6 H7.7"/><path d="M8.6 2.6 V3.6 M8.6 7.2 V6.2" stroke-width="1.6"/></g></svg>
<div class="lb" style="top:541px">A1</div>
<div class="ms" style="left:109.5px;top:541px">M</div><div class="ms" style="left:133.6px;top:541px">S</div>
<div class="nm" style="left:153.6px;top:541px"><span>DIA-DAVE</span></div>
<svg class="ic" style="left:37.1px;top:559.2px" width="10" height="12" viewBox="0 0 10 12"><path d="M2.1 6.3 V3.6 C2.1 1.3 5.6 1.1 6.2 2.9" fill="none" stroke="#b9b9b9" stroke-width="1.5"/><rect x="0.7" y="5.8" width="8.6" height="5.8" rx="0.6" fill="#b9b9b9"/><path d="M4.1 7.4 h1.8 l-.55 2.7 h-.7z" fill="#1e1e1e"/></svg>
<svg class="ic" style="left:83.5px;top:561px" width="13" height="10" viewBox="0 0 13 10"><g fill="none" stroke="#bdbdbd" stroke-width="1"><rect x="0.9" y="0.8" width="6.8" height="3.3"/><rect x="0.9" y="5.8" width="6.8" height="3.3"/><path d="M7.7 2.2 H11.8 V7.6 H7.7"/><path d="M8.6 2.6 V3.6 M8.6 7.2 V6.2" stroke-width="1.6"/></g></svg>
<div class="lb" style="top:558px">A2</div>
<div class="ms" style="left:109.5px;top:558px">M</div><div class="ms" style="left:133.6px;top:558px">S</div>
<div class="nm" style="left:153.6px;top:558px"><span>DIA-KEVIN</span></div>
<svg class="ic" style="left:37.1px;top:576.2px" width="10" height="12" viewBox="0 0 10 12"><path d="M2.1 6.3 V3.6 C2.1 1.3 5.6 1.1 6.2 2.9" fill="none" stroke="#b9b9b9" stroke-width="1.5"/><rect x="0.7" y="5.8" width="8.6" height="5.8" rx="0.6" fill="#b9b9b9"/><path d="M4.1 7.4 h1.8 l-.55 2.7 h-.7z" fill="#1e1e1e"/></svg>
<svg class="ic" style="left:83.5px;top:578px" width="13" height="10" viewBox="0 0 13 10"><g fill="none" stroke="#bdbdbd" stroke-width="1"><rect x="0.9" y="0.8" width="6.8" height="3.3"/><rect x="0.9" y="5.8" width="6.8" height="3.3"/><path d="M7.7 2.2 H11.8 V7.6 H7.7"/><path d="M8.6 2.6 V3.6 M8.6 7.2 V6.2" stroke-width="1.6"/></g></svg>
<div class="lb" style="top:575px">A3</div>
<div class="ms" style="left:109.5px;top:575px">M</div><div class="ms" style="left:133.6px;top:575px">S</div>
<div class="nm" style="left:153.6px;top:575px"><span>DIA-BRAD</span></div>
<svg class="ic" style="left:37.1px;top:593.2px" width="10" height="12" viewBox="0 0 10 12"><path d="M2.1 6.3 V3.6 C2.1 1.3 5.6 1.1 6.2 2.9" fill="none" stroke="#b9b9b9" stroke-width="1.5"/><rect x="0.7" y="5.8" width="8.6" height="5.8" rx="0.6" fill="#b9b9b9"/><path d="M4.1 7.4 h1.8 l-.55 2.7 h-.7z" fill="#1e1e1e"/></svg>
<svg class="ic" style="left:83.5px;top:595px" width="13" height="10" viewBox="0 0 13 10"><g fill="none" stroke="#bdbdbd" stroke-width="1"><rect x="0.9" y="0.8" width="6.8" height="3.3"/><rect x="0.9" y="5.8" width="6.8" height="3.3"/><path d="M7.7 2.2 H11.8 V7.6 H7.7"/><path d="M8.6 2.6 V3.6 M8.6 7.2 V6.2" stroke-width="1.6"/></g></svg>
<div class="lb" style="top:592px">A4</div>
<div class="ms" style="left:109.5px;top:592px">M</div><div class="ms" style="left:133.6px;top:592px">S</div>
<div class="nm" style="left:153.6px;top:592px"><span>DIA-WRO<u>...</u></span></div>
<svg class="ic" style="left:37.1px;top:610.2px" width="10" height="12" viewBox="0 0 10 12"><path d="M2.1 6.3 V3.6 C2.1 1.3 5.6 1.1 6.2 2.9" fill="none" stroke="#b9b9b9" stroke-width="1.5"/><rect x="0.7" y="5.8" width="8.6" height="5.8" rx="0.6" fill="#b9b9b9"/><path d="M4.1 7.4 h1.8 l-.55 2.7 h-.7z" fill="#1e1e1e"/></svg>
<svg class="ic" style="left:83.5px;top:612px" width="13" height="10" viewBox="0 0 13 10"><g fill="none" stroke="#bdbdbd" stroke-width="1"><rect x="0.9" y="0.8" width="6.8" height="3.3"/><rect x="0.9" y="5.8" width="6.8" height="3.3"/><path d="M7.7 2.2 H11.8 V7.6 H7.7"/><path d="M8.6 2.6 V3.6 M8.6 7.2 V6.2" stroke-width="1.6"/></g></svg>
<div class="lb" style="top:609px">A5</div>
<div class="ms" style="left:109.5px;top:609px">M</div><div class="ms" style="left:133.6px;top:609px">S</div>
<div class="nm" style="left:153.6px;top:609px"><span>SFX01</span></div>
<svg class="ic" style="left:37.1px;top:627.2px" width="10" height="12" viewBox="0 0 10 12"><path d="M2.1 6.3 V3.6 C2.1 1.3 5.6 1.1 6.2 2.9" fill="none" stroke="#b9b9b9" stroke-width="1.5"/><rect x="0.7" y="5.8" width="8.6" height="5.8" rx="0.6" fill="#b9b9b9"/><path d="M4.1 7.4 h1.8 l-.55 2.7 h-.7z" fill="#1e1e1e"/></svg>
<svg class="ic" style="left:83.5px;top:629px" width="13" height="10" viewBox="0 0 13 10"><g fill="none" stroke="#bdbdbd" stroke-width="1"><rect x="0.9" y="0.8" width="6.8" height="3.3"/><rect x="0.9" y="5.8" width="6.8" height="3.3"/><path d="M7.7 2.2 H11.8 V7.6 H7.7"/><path d="M8.6 2.6 V3.6 M8.6 7.2 V6.2" stroke-width="1.6"/></g></svg>
<div class="lb" style="top:626px">A6</div>
<div class="ms" style="left:109.5px;top:626px">M</div><div class="ms" style="left:133.6px;top:626px">S</div>
<div class="nm" style="left:153.6px;top:626px"><span>SFX02</span></div>
<svg class="ic" style="left:37.1px;top:644.2px" width="10" height="12" viewBox="0 0 10 12"><path d="M2.1 6.3 V3.6 C2.1 1.3 5.6 1.1 6.2 2.9" fill="none" stroke="#b9b9b9" stroke-width="1.5"/><rect x="0.7" y="5.8" width="8.6" height="5.8" rx="0.6" fill="#b9b9b9"/><path d="M4.1 7.4 h1.8 l-.55 2.7 h-.7z" fill="#1e1e1e"/></svg>
<svg class="ic" style="left:83.5px;top:646px" width="13" height="10" viewBox="0 0 13 10"><g fill="none" stroke="#bdbdbd" stroke-width="1"><rect x="0.9" y="0.8" width="6.8" height="3.3"/><rect x="0.9" y="5.8" width="6.8" height="3.3"/><path d="M7.7 2.2 H11.8 V7.6 H7.7"/><path d="M8.6 2.6 V3.6 M8.6 7.2 V6.2" stroke-width="1.6"/></g></svg>
<div class="lb" style="top:643px">A7</div>
<div class="ms" style="left:109.5px;top:643px">M</div><div class="ms" style="left:133.6px;top:643px">S</div>
<div class="nm" style="left:153.6px;top:643px"><span>SFX03</span></div>
<svg class="ic" style="left:37.1px;top:661.2px" width="10" height="12" viewBox="0 0 10 12"><path d="M2.1 6.3 V3.6 C2.1 1.3 5.6 1.1 6.2 2.9" fill="none" stroke="#b9b9b9" stroke-width="1.5"/><rect x="0.7" y="5.8" width="8.6" height="5.8" rx="0.6" fill="#b9b9b9"/><path d="M4.1 7.4 h1.8 l-.55 2.7 h-.7z" fill="#1e1e1e"/></svg>
<svg class="ic" style="left:83.5px;top:663px" width="13" height="10" viewBox="0 0 13 10"><g fill="none" stroke="#bdbdbd" stroke-width="1"><rect x="0.9" y="0.8" width="6.8" height="3.3"/><rect x="0.9" y="5.8" width="6.8" height="3.3"/><path d="M7.7 2.2 H11.8 V7.6 H7.7"/><path d="M8.6 2.6 V3.6 M8.6 7.2 V6.2" stroke-width="1.6"/></g></svg>
<div class="lb" style="top:660px">A8</div>
<div class="ms" style="left:109.5px;top:660px">M</div><div class="ms" style="left:133.6px;top:660px">S</div>
<div class="nm" style="left:153.6px;top:660px"><span>SFX04</span></div>
<svg class="ic" style="left:37.1px;top:678.2px" width="10" height="12" viewBox="0 0 10 12"><path d="M2.1 6.3 V3.6 C2.1 1.3 5.6 1.1 6.2 2.9" fill="none" stroke="#b9b9b9" stroke-width="1.5"/><rect x="0.7" y="5.8" width="8.6" height="5.8" rx="0.6" fill="#b9b9b9"/><path d="M4.1 7.4 h1.8 l-.55 2.7 h-.7z" fill="#1e1e1e"/></svg>
<svg class="ic" style="left:83.5px;top:680px" width="13" height="10" viewBox="0 0 13 10"><g fill="none" stroke="#bdbdbd" stroke-width="1"><rect x="0.9" y="0.8" width="6.8" height="3.3"/><rect x="0.9" y="5.8" width="6.8" height="3.3"/><path d="M7.7 2.2 H11.8 V7.6 H7.7"/><path d="M8.6 2.6 V3.6 M8.6 7.2 V6.2" stroke-width="1.6"/></g></svg>
<div class="lb" style="top:677px">A9</div>
<div class="ms" style="left:109.5px;top:677px">M</div><div class="ms" style="left:133.6px;top:677px">S</div>
<div class="nm" style="left:153.6px;top:677px"><span>MUSIC01</span></div>
<svg class="ic" style="left:37.1px;top:695.2px" width="10" height="12" viewBox="0 0 10 12"><path d="M2.1 6.3 V3.6 C2.1 1.3 5.6 1.1 6.2 2.9" fill="none" stroke="#b9b9b9" stroke-width="1.5"/><rect x="0.7" y="5.8" width="8.6" height="5.8" rx="0.6" fill="#b9b9b9"/><path d="M4.1 7.4 h1.8 l-.55 2.7 h-.7z" fill="#1e1e1e"/></svg>
<svg class="ic" style="left:83.5px;top:697px" width="13" height="10" viewBox="0 0 13 10"><g fill="none" stroke="#bdbdbd" stroke-width="1"><rect x="0.9" y="0.8" width="6.8" height="3.3"/><rect x="0.9" y="5.8" width="6.8" height="3.3"/><path d="M7.7 2.2 H11.8 V7.6 H7.7"/><path d="M8.6 2.6 V3.6 M8.6 7.2 V6.2" stroke-width="1.6"/></g></svg>
<div class="lb" style="top:694px">A10</div>
<div class="ms" style="left:109.5px;top:694px">M</div><div class="ms" style="left:133.6px;top:694px">S</div>
<div class="nm" style="left:153.6px;top:694px"><span>MUSIC02</span></div>
<svg class="ic" style="left:37.1px;top:712.2px" width="10" height="12" viewBox="0 0 10 12"><path d="M2.1 6.3 V3.6 C2.1 1.3 5.6 1.1 6.2 2.9" fill="none" stroke="#b9b9b9" stroke-width="1.5"/><rect x="0.7" y="5.8" width="8.6" height="5.8" rx="0.6" fill="#b9b9b9"/><path d="M4.1 7.4 h1.8 l-.55 2.7 h-.7z" fill="#1e1e1e"/></svg>
<svg class="ic" style="left:83.5px;top:714px" width="13" height="10" viewBox="0 0 13 10"><g fill="none" stroke="#bdbdbd" stroke-width="1"><rect x="0.9" y="0.8" width="6.8" height="3.3"/><rect x="0.9" y="5.8" width="6.8" height="3.3"/><path d="M7.7 2.2 H11.8 V7.6 H7.7"/><path d="M8.6 2.6 V3.6 M8.6 7.2 V6.2" stroke-width="1.6"/></g></svg>
<div class="lb" style="top:711px">A11</div>
<div class="ms" style="left:109.5px;top:711px">M</div><div class="ms" style="left:133.6px;top:711px">S</div>
<div class="nm" style="left:153.6px;top:711px"><span>MUSIC03</span></div>
<svg class="ic" style="left:37.1px;top:729.2px" width="10" height="12" viewBox="0 0 10 12"><path d="M2.1 6.3 V3.6 C2.1 1.3 5.6 1.1 6.2 2.9" fill="none" stroke="#b9b9b9" stroke-width="1.5"/><rect x="0.7" y="5.8" width="8.6" height="5.8" rx="0.6" fill="#b9b9b9"/><path d="M4.1 7.4 h1.8 l-.55 2.7 h-.7z" fill="#1e1e1e"/></svg>
<div class="nm" style="left:57.5px;top:728px"><span>SUB-D<u>...</u></span></div>
<div class="ms" style="left:109.5px;top:728px">M</div><div class="ms" style="left:133.6px;top:728px">S</div>
<svg class="ic" style="left:230.5px;top:731px" width="12" height="10" viewBox="0 0 12 10"><path d="M0.5 0.8 L5.4 5 L0.5 9.2Z M11.5 0.8 L6.6 5 L11.5 9.2Z" fill="#c9c9c9"/><rect x="5.5" y="0.6" width="1" height="8.8" fill="#c9c9c9"/></svg>
<svg class="ic" style="left:37.1px;top:746.2px" width="10" height="12" viewBox="0 0 10 12"><path d="M2.1 6.3 V3.6 C2.1 1.3 5.6 1.1 6.2 2.9" fill="none" stroke="#b9b9b9" stroke-width="1.5"/><rect x="0.7" y="5.8" width="8.6" height="5.8" rx="0.6" fill="#b9b9b9"/><path d="M4.1 7.4 h1.8 l-.55 2.7 h-.7z" fill="#1e1e1e"/></svg>
<div class="nm" style="left:57.5px;top:745px"><span>SUB-FX</span></div>
<div class="ms" style="left:109.5px;top:745px">M</div><div class="ms" style="left:133.6px;top:745px">S</div>
<svg class="ic" style="left:230.5px;top:748px" width="12" height="10" viewBox="0 0 12 10"><path d="M0.5 0.8 L5.4 5 L0.5 9.2Z M11.5 0.8 L6.6 5 L11.5 9.2Z" fill="#c9c9c9"/><rect x="5.5" y="0.6" width="1" height="8.8" fill="#c9c9c9"/></svg>
<svg class="ic" style="left:37.1px;top:763.2px" width="10" height="12" viewBox="0 0 10 12"><path d="M2.1 6.3 V3.6 C2.1 1.3 5.6 1.1 6.2 2.9" fill="none" stroke="#b9b9b9" stroke-width="1.5"/><rect x="0.7" y="5.8" width="8.6" height="5.8" rx="0.6" fill="#b9b9b9"/><path d="M4.1 7.4 h1.8 l-.55 2.7 h-.7z" fill="#1e1e1e"/></svg>
<div class="nm" style="left:57.5px;top:762px"><span>SUB-<u>...</u></span></div>
<div class="ms" style="left:109.5px;top:762px">M</div><div class="ms" style="left:133.6px;top:762px">S</div>
<svg class="ic" style="left:230.5px;top:765px" width="12" height="10" viewBox="0 0 12 10"><path d="M0.5 0.8 L5.4 5 L0.5 9.2Z M11.5 0.8 L6.6 5 L11.5 9.2Z" fill="#c9c9c9"/><rect x="5.5" y="0.6" width="1" height="8.8" fill="#c9c9c9"/></svg>
<svg class="ic" style="left:37.1px;top:780.2px" width="10" height="12" viewBox="0 0 10 12"><path d="M2.1 6.3 V3.6 C2.1 1.3 5.6 1.1 6.2 2.9" fill="none" stroke="#b9b9b9" stroke-width="1.5"/><rect x="0.7" y="5.8" width="8.6" height="5.8" rx="0.6" fill="#b9b9b9"/><path d="M4.1 7.4 h1.8 l-.55 2.7 h-.7z" fill="#1e1e1e"/></svg>
<div class="nm" style="left:57px;top:779px;transform:scaleX(1.15)"><span>Mix</span></div>
<div class="nm" style="left:118px;top:779px;color:#3b93ea"><span>0.0</span></div>
<div class="nm" style="left:234px;top:779px;font-size:10px;color:#c4c4c4"><span>8</span></div>
<div style="position:absolute;left:239px;top:788px;width:0;height:0;border-left:3.5px solid transparent;border-bottom:3.5px solid #aaa"></div>
<div class="tg" style="top:520px">V1</div><div class="tg" style="top:541px">A1</div>
<div class="ph"></div>
</div></body></html>
